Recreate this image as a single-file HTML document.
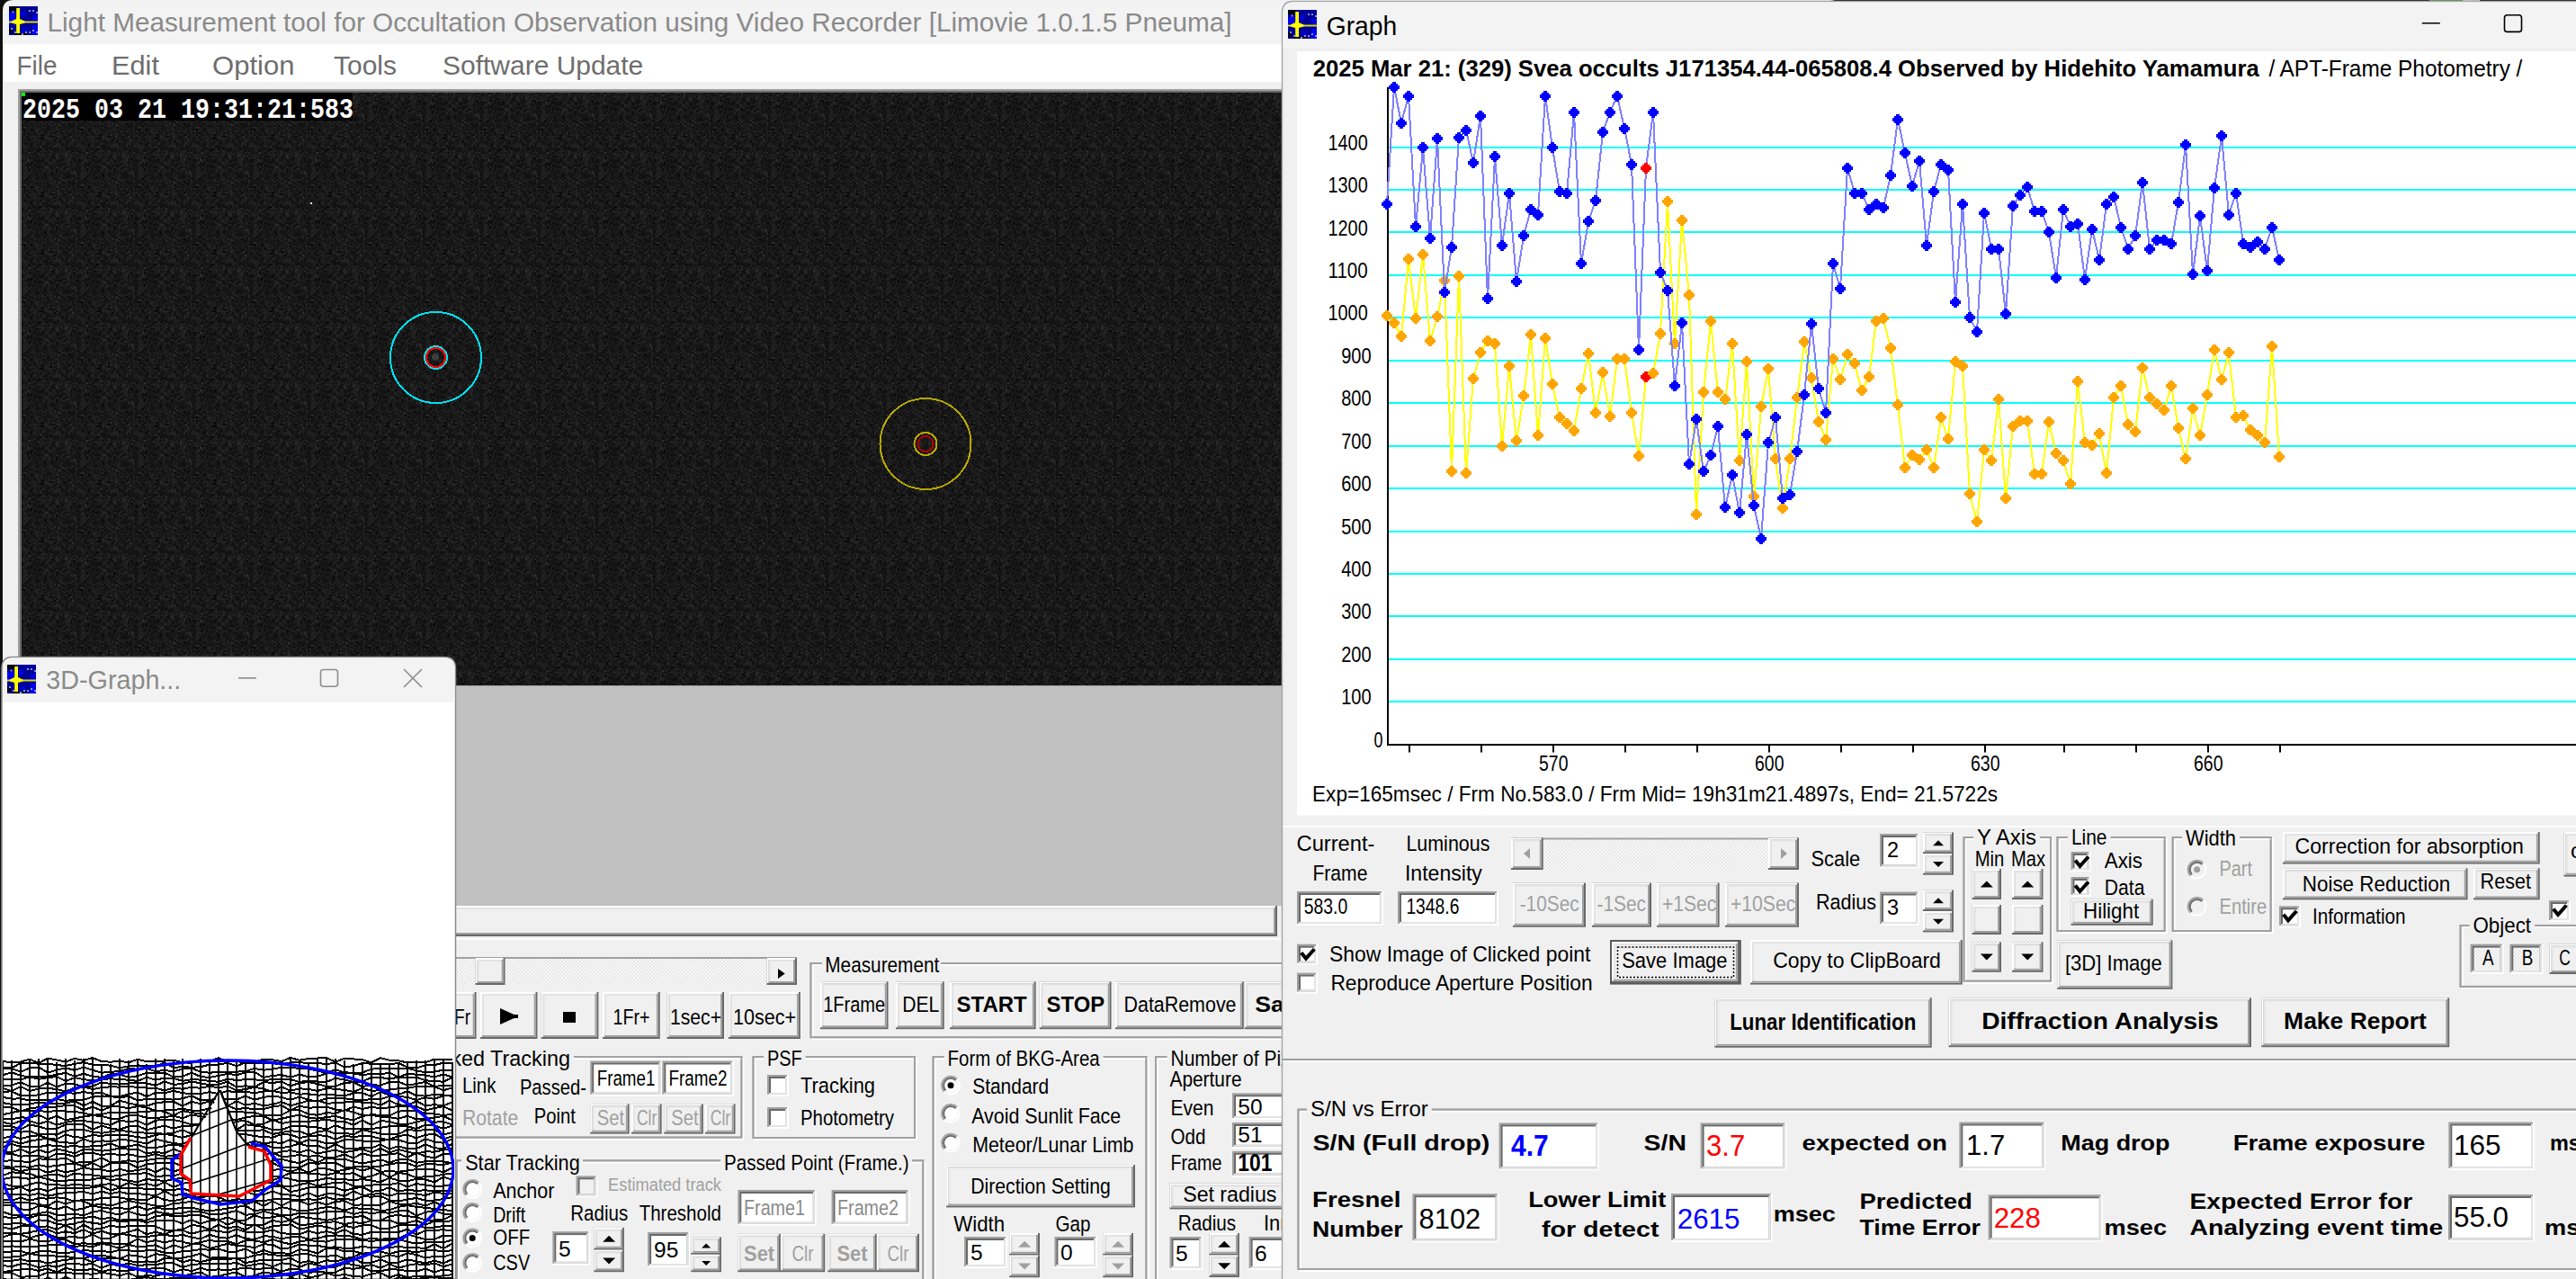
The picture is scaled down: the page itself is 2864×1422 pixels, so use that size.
<!DOCTYPE html>
<html><head><meta charset="utf-8"><title>Limovie</title>
<style>html,body{margin:0;padding:0;background:#101010;overflow:hidden}svg{display:block}</style>
</head><body>
<svg width="2864" height="1422" viewBox="0 0 2864 1422" font-family="Liberation Sans, sans-serif">
<defs>
<pattern id="dith" width="4" height="4" patternUnits="userSpaceOnUse"><rect width="4" height="4" fill="#f8f8f8"/><rect width="2" height="2" fill="#e8e8e8"/><rect x="2" y="2" width="2" height="2" fill="#e8e8e8"/></pattern>
<pattern id="vnoise" width="64" height="64" patternUnits="userSpaceOnUse" x="24" y="103"><rect x="0" y="0" width="2" height="2" fill="#101010"/><rect x="2" y="0" width="2" height="2" fill="#1b1b1b"/><rect x="4" y="0" width="2" height="2" fill="#1f1f1f"/><rect x="6" y="0" width="2" height="2" fill="#151515"/><rect x="8" y="0" width="2" height="2" fill="#0f0f0f"/><rect x="10" y="0" width="2" height="2" fill="#181818"/><rect x="12" y="0" width="2" height="2" fill="#1c1c1c"/><rect x="14" y="0" width="2" height="2" fill="#202020"/><rect x="16" y="0" width="2" height="2" fill="#101010"/><rect x="18" y="0" width="2" height="2" fill="#0f0f0f"/><rect x="20" y="0" width="2" height="2" fill="#1d1d1d"/><rect x="22" y="0" width="2" height="2" fill="#1c1c1c"/><rect x="24" y="0" width="2" height="2" fill="#232323"/><rect x="26" y="0" width="2" height="2" fill="#1f1f1f"/><rect x="28" y="0" width="2" height="2" fill="#181818"/><rect x="30" y="0" width="2" height="2" fill="#171717"/><rect x="32" y="0" width="2" height="2" fill="#2a2a2a"/><rect x="34" y="0" width="2" height="2" fill="#161616"/><rect x="36" y="0" width="2" height="2" fill="#131313"/><rect x="38" y="0" width="2" height="2" fill="#111111"/><rect x="40" y="0" width="2" height="2" fill="#191919"/><rect x="42" y="0" width="2" height="2" fill="#1a1a1a"/><rect x="44" y="0" width="2" height="2" fill="#161616"/><rect x="46" y="0" width="2" height="2" fill="#181818"/><rect x="48" y="0" width="2" height="2" fill="#1a1a1a"/><rect x="50" y="0" width="2" height="2" fill="#1d1d1d"/><rect x="52" y="0" width="2" height="2" fill="#202020"/><rect x="54" y="0" width="2" height="2" fill="#1a1a1a"/><rect x="56" y="0" width="2" height="2" fill="#0c0c0c"/><rect x="58" y="0" width="2" height="2" fill="#1d1d1d"/><rect x="60" y="0" width="2" height="2" fill="#0f0f0f"/><rect x="62" y="0" width="2" height="2" fill="#171717"/><rect x="0" y="2" width="2" height="2" fill="#0e0e0e"/><rect x="2" y="2" width="2" height="2" fill="#191919"/><rect x="4" y="2" width="2" height="2" fill="#131313"/><rect x="6" y="2" width="2" height="2" fill="#1a1a1a"/><rect x="8" y="2" width="2" height="2" fill="#303030"/><rect x="10" y="2" width="2" height="2" fill="#181818"/><rect x="12" y="2" width="2" height="2" fill="#1e1e1e"/><rect x="14" y="2" width="2" height="2" fill="#0f0f0f"/><rect x="16" y="2" width="2" height="2" fill="#161616"/><rect x="18" y="2" width="2" height="2" fill="#1d1d1d"/><rect x="20" y="2" width="2" height="2" fill="#181818"/><rect x="22" y="2" width="2" height="2" fill="#1b1b1b"/><rect x="24" y="2" width="2" height="2" fill="#191919"/><rect x="26" y="2" width="2" height="2" fill="#111111"/><rect x="28" y="2" width="2" height="2" fill="#1c1c1c"/><rect x="30" y="2" width="2" height="2" fill="#131313"/><rect x="32" y="2" width="2" height="2" fill="#262626"/><rect x="34" y="2" width="2" height="2" fill="#151515"/><rect x="36" y="2" width="2" height="2" fill="#1d1d1d"/><rect x="38" y="2" width="2" height="2" fill="#191919"/><rect x="40" y="2" width="2" height="2" fill="#1f1f1f"/><rect x="42" y="2" width="2" height="2" fill="#141414"/><rect x="44" y="2" width="2" height="2" fill="#1f1f1f"/><rect x="46" y="2" width="2" height="2" fill="#181818"/><rect x="48" y="2" width="2" height="2" fill="#212121"/><rect x="50" y="2" width="2" height="2" fill="#1d1d1d"/><rect x="52" y="2" width="2" height="2" fill="#191919"/><rect x="54" y="2" width="2" height="2" fill="#131313"/><rect x="56" y="2" width="2" height="2" fill="#1e1e1e"/><rect x="58" y="2" width="2" height="2" fill="#1c1c1c"/><rect x="60" y="2" width="2" height="2" fill="#242424"/><rect x="62" y="2" width="2" height="2" fill="#161616"/><rect x="0" y="4" width="2" height="2" fill="#1c1c1c"/><rect x="2" y="4" width="2" height="2" fill="#1c1c1c"/><rect x="4" y="4" width="2" height="2" fill="#1a1a1a"/><rect x="6" y="4" width="2" height="2" fill="#1a1a1a"/><rect x="8" y="4" width="2" height="2" fill="#1a1a1a"/><rect x="10" y="4" width="2" height="2" fill="#141414"/><rect x="12" y="4" width="2" height="2" fill="#111111"/><rect x="14" y="4" width="2" height="2" fill="#161616"/><rect x="16" y="4" width="2" height="2" fill="#1d1d1d"/><rect x="18" y="4" width="2" height="2" fill="#232323"/><rect x="20" y="4" width="2" height="2" fill="#1f1f1f"/><rect x="22" y="4" width="2" height="2" fill="#202020"/><rect x="24" y="4" width="2" height="2" fill="#1e1e1e"/><rect x="26" y="4" width="2" height="2" fill="#1d1d1d"/><rect x="28" y="4" width="2" height="2" fill="#1a1a1a"/><rect x="30" y="4" width="2" height="2" fill="#1e1e1e"/><rect x="32" y="4" width="2" height="2" fill="#252525"/><rect x="34" y="4" width="2" height="2" fill="#161616"/><rect x="36" y="4" width="2" height="2" fill="#141414"/><rect x="38" y="4" width="2" height="2" fill="#262626"/><rect x="40" y="4" width="2" height="2" fill="#1a1a1a"/><rect x="42" y="4" width="2" height="2" fill="#1f1f1f"/><rect x="44" y="4" width="2" height="2" fill="#1f1f1f"/><rect x="46" y="4" width="2" height="2" fill="#111111"/><rect x="48" y="4" width="2" height="2" fill="#2a2a2a"/><rect x="50" y="4" width="2" height="2" fill="#252525"/><rect x="52" y="4" width="2" height="2" fill="#1a1a1a"/><rect x="54" y="4" width="2" height="2" fill="#1e1e1e"/><rect x="56" y="4" width="2" height="2" fill="#191919"/><rect x="58" y="4" width="2" height="2" fill="#121212"/><rect x="60" y="4" width="2" height="2" fill="#181818"/><rect x="62" y="4" width="2" height="2" fill="#1b1b1b"/><rect x="0" y="6" width="2" height="2" fill="#202020"/><rect x="2" y="6" width="2" height="2" fill="#1d1d1d"/><rect x="4" y="6" width="2" height="2" fill="#191919"/><rect x="6" y="6" width="2" height="2" fill="#222222"/><rect x="8" y="6" width="2" height="2" fill="#131313"/><rect x="10" y="6" width="2" height="2" fill="#1e1e1e"/><rect x="12" y="6" width="2" height="2" fill="#202020"/><rect x="14" y="6" width="2" height="2" fill="#161616"/><rect x="16" y="6" width="2" height="2" fill="#0c0c0c"/><rect x="18" y="6" width="2" height="2" fill="#121212"/><rect x="20" y="6" width="2" height="2" fill="#1a1a1a"/><rect x="22" y="6" width="2" height="2" fill="#1c1c1c"/><rect x="24" y="6" width="2" height="2" fill="#232323"/><rect x="26" y="6" width="2" height="2" fill="#111111"/><rect x="28" y="6" width="2" height="2" fill="#191919"/><rect x="30" y="6" width="2" height="2" fill="#1d1d1d"/><rect x="32" y="6" width="2" height="2" fill="#171717"/><rect x="34" y="6" width="2" height="2" fill="#080808"/><rect x="36" y="6" width="2" height="2" fill="#1e1e1e"/><rect x="38" y="6" width="2" height="2" fill="#292929"/><rect x="40" y="6" width="2" height="2" fill="#202020"/><rect x="42" y="6" width="2" height="2" fill="#121212"/><rect x="44" y="6" width="2" height="2" fill="#161616"/><rect x="46" y="6" width="2" height="2" fill="#1a1a1a"/><rect x="48" y="6" width="2" height="2" fill="#2a2a2a"/><rect x="50" y="6" width="2" height="2" fill="#1d1d1d"/><rect x="52" y="6" width="2" height="2" fill="#191919"/><rect x="54" y="6" width="2" height="2" fill="#232323"/><rect x="56" y="6" width="2" height="2" fill="#181818"/><rect x="58" y="6" width="2" height="2" fill="#262626"/><rect x="60" y="6" width="2" height="2" fill="#141414"/><rect x="62" y="6" width="2" height="2" fill="#151515"/><rect x="0" y="8" width="2" height="2" fill="#1e1e1e"/><rect x="2" y="8" width="2" height="2" fill="#222222"/><rect x="4" y="8" width="2" height="2" fill="#1d1d1d"/><rect x="6" y="8" width="2" height="2" fill="#1b1b1b"/><rect x="8" y="8" width="2" height="2" fill="#0c0c0c"/><rect x="10" y="8" width="2" height="2" fill="#141414"/><rect x="12" y="8" width="2" height="2" fill="#141414"/><rect x="14" y="8" width="2" height="2" fill="#151515"/><rect x="16" y="8" width="2" height="2" fill="#1d1d1d"/><rect x="18" y="8" width="2" height="2" fill="#161616"/><rect x="20" y="8" width="2" height="2" fill="#1e1e1e"/><rect x="22" y="8" width="2" height="2" fill="#191919"/><rect x="24" y="8" width="2" height="2" fill="#161616"/><rect x="26" y="8" width="2" height="2" fill="#191919"/><rect x="28" y="8" width="2" height="2" fill="#1c1c1c"/><rect x="30" y="8" width="2" height="2" fill="#1f1f1f"/><rect x="32" y="8" width="2" height="2" fill="#151515"/><rect x="34" y="8" width="2" height="2" fill="#171717"/><rect x="36" y="8" width="2" height="2" fill="#0f0f0f"/><rect x="38" y="8" width="2" height="2" fill="#242424"/><rect x="40" y="8" width="2" height="2" fill="#232323"/><rect x="42" y="8" width="2" height="2" fill="#171717"/><rect x="44" y="8" width="2" height="2" fill="#151515"/><rect x="46" y="8" width="2" height="2" fill="#101010"/><rect x="48" y="8" width="2" height="2" fill="#1a1a1a"/><rect x="50" y="8" width="2" height="2" fill="#1a1a1a"/><rect x="52" y="8" width="2" height="2" fill="#282828"/><rect x="54" y="8" width="2" height="2" fill="#1a1a1a"/><rect x="56" y="8" width="2" height="2" fill="#131313"/><rect x="58" y="8" width="2" height="2" fill="#070707"/><rect x="60" y="8" width="2" height="2" fill="#222222"/><rect x="62" y="8" width="2" height="2" fill="#1a1a1a"/><rect x="0" y="10" width="2" height="2" fill="#0d0d0d"/><rect x="2" y="10" width="2" height="2" fill="#1a1a1a"/><rect x="4" y="10" width="2" height="2" fill="#0d0d0d"/><rect x="6" y="10" width="2" height="2" fill="#313131"/><rect x="8" y="10" width="2" height="2" fill="#202020"/><rect x="10" y="10" width="2" height="2" fill="#1d1d1d"/><rect x="12" y="10" width="2" height="2" fill="#171717"/><rect x="14" y="10" width="2" height="2" fill="#0a0a0a"/><rect x="16" y="10" width="2" height="2" fill="#181818"/><rect x="18" y="10" width="2" height="2" fill="#0e0e0e"/><rect x="20" y="10" width="2" height="2" fill="#1d1d1d"/><rect x="22" y="10" width="2" height="2" fill="#0a0a0a"/><rect x="24" y="10" width="2" height="2" fill="#121212"/><rect x="26" y="10" width="2" height="2" fill="#212121"/><rect x="28" y="10" width="2" height="2" fill="#242424"/><rect x="30" y="10" width="2" height="2" fill="#101010"/><rect x="32" y="10" width="2" height="2" fill="#0e0e0e"/><rect x="34" y="10" width="2" height="2" fill="#1f1f1f"/><rect x="36" y="10" width="2" height="2" fill="#1e1e1e"/><rect x="38" y="10" width="2" height="2" fill="#121212"/><rect x="40" y="10" width="2" height="2" fill="#141414"/><rect x="42" y="10" width="2" height="2" fill="#141414"/><rect x="44" y="10" width="2" height="2" fill="#101010"/><rect x="46" y="10" width="2" height="2" fill="#141414"/><rect x="48" y="10" width="2" height="2" fill="#212121"/><rect x="50" y="10" width="2" height="2" fill="#1d1d1d"/><rect x="52" y="10" width="2" height="2" fill="#272727"/><rect x="54" y="10" width="2" height="2" fill="#181818"/><rect x="56" y="10" width="2" height="2" fill="#181818"/><rect x="58" y="10" width="2" height="2" fill="#121212"/><rect x="60" y="10" width="2" height="2" fill="#181818"/><rect x="62" y="10" width="2" height="2" fill="#0f0f0f"/><rect x="0" y="12" width="2" height="2" fill="#0c0c0c"/><rect x="2" y="12" width="2" height="2" fill="#1d1d1d"/><rect x="4" y="12" width="2" height="2" fill="#232323"/><rect x="6" y="12" width="2" height="2" fill="#1e1e1e"/><rect x="8" y="12" width="2" height="2" fill="#222222"/><rect x="10" y="12" width="2" height="2" fill="#1a1a1a"/><rect x="12" y="12" width="2" height="2" fill="#131313"/><rect x="14" y="12" width="2" height="2" fill="#191919"/><rect x="16" y="12" width="2" height="2" fill="#161616"/><rect x="18" y="12" width="2" height="2" fill="#111111"/><rect x="20" y="12" width="2" height="2" fill="#0d0d0d"/><rect x="22" y="12" width="2" height="2" fill="#0e0e0e"/><rect x="24" y="12" width="2" height="2" fill="#181818"/><rect x="26" y="12" width="2" height="2" fill="#1a1a1a"/><rect x="28" y="12" width="2" height="2" fill="#151515"/><rect x="30" y="12" width="2" height="2" fill="#232323"/><rect x="32" y="12" width="2" height="2" fill="#1a1a1a"/><rect x="34" y="12" width="2" height="2" fill="#1d1d1d"/><rect x="36" y="12" width="2" height="2" fill="#212121"/><rect x="38" y="12" width="2" height="2" fill="#131313"/><rect x="40" y="12" width="2" height="2" fill="#0b0b0b"/><rect x="42" y="12" width="2" height="2" fill="#1e1e1e"/><rect x="44" y="12" width="2" height="2" fill="#141414"/><rect x="46" y="12" width="2" height="2" fill="#222222"/><rect x="48" y="12" width="2" height="2" fill="#1b1b1b"/><rect x="50" y="12" width="2" height="2" fill="#202020"/><rect x="52" y="12" width="2" height="2" fill="#1e1e1e"/><rect x="54" y="12" width="2" height="2" fill="#0a0a0a"/><rect x="56" y="12" width="2" height="2" fill="#1e1e1e"/><rect x="58" y="12" width="2" height="2" fill="#141414"/><rect x="60" y="12" width="2" height="2" fill="#131313"/><rect x="62" y="12" width="2" height="2" fill="#151515"/><rect x="0" y="14" width="2" height="2" fill="#1e1e1e"/><rect x="2" y="14" width="2" height="2" fill="#1f1f1f"/><rect x="4" y="14" width="2" height="2" fill="#202020"/><rect x="6" y="14" width="2" height="2" fill="#0d0d0d"/><rect x="8" y="14" width="2" height="2" fill="#141414"/><rect x="10" y="14" width="2" height="2" fill="#080808"/><rect x="12" y="14" width="2" height="2" fill="#181818"/><rect x="14" y="14" width="2" height="2" fill="#1d1d1d"/><rect x="16" y="14" width="2" height="2" fill="#131313"/><rect x="18" y="14" width="2" height="2" fill="#1a1a1a"/><rect x="20" y="14" width="2" height="2" fill="#1a1a1a"/><rect x="22" y="14" width="2" height="2" fill="#202020"/><rect x="24" y="14" width="2" height="2" fill="#131313"/><rect x="26" y="14" width="2" height="2" fill="#131313"/><rect x="28" y="14" width="2" height="2" fill="#131313"/><rect x="30" y="14" width="2" height="2" fill="#252525"/><rect x="32" y="14" width="2" height="2" fill="#202020"/><rect x="34" y="14" width="2" height="2" fill="#181818"/><rect x="36" y="14" width="2" height="2" fill="#1a1a1a"/><rect x="38" y="14" width="2" height="2" fill="#191919"/><rect x="40" y="14" width="2" height="2" fill="#1a1a1a"/><rect x="42" y="14" width="2" height="2" fill="#171717"/><rect x="44" y="14" width="2" height="2" fill="#161616"/><rect x="46" y="14" width="2" height="2" fill="#101010"/><rect x="48" y="14" width="2" height="2" fill="#141414"/><rect x="50" y="14" width="2" height="2" fill="#242424"/><rect x="52" y="14" width="2" height="2" fill="#1c1c1c"/><rect x="54" y="14" width="2" height="2" fill="#191919"/><rect x="56" y="14" width="2" height="2" fill="#171717"/><rect x="58" y="14" width="2" height="2" fill="#191919"/><rect x="60" y="14" width="2" height="2" fill="#1b1b1b"/><rect x="62" y="14" width="2" height="2" fill="#141414"/><rect x="0" y="16" width="2" height="2" fill="#1a1a1a"/><rect x="2" y="16" width="2" height="2" fill="#1a1a1a"/><rect x="4" y="16" width="2" height="2" fill="#131313"/><rect x="6" y="16" width="2" height="2" fill="#131313"/><rect x="8" y="16" width="2" height="2" fill="#121212"/><rect x="10" y="16" width="2" height="2" fill="#111111"/><rect x="12" y="16" width="2" height="2" fill="#1f1f1f"/><rect x="14" y="16" width="2" height="2" fill="#080808"/><rect x="16" y="16" width="2" height="2" fill="#171717"/><rect x="18" y="16" width="2" height="2" fill="#141414"/><rect x="20" y="16" width="2" height="2" fill="#141414"/><rect x="22" y="16" width="2" height="2" fill="#191919"/><rect x="24" y="16" width="2" height="2" fill="#202020"/><rect x="26" y="16" width="2" height="2" fill="#191919"/><rect x="28" y="16" width="2" height="2" fill="#181818"/><rect x="30" y="16" width="2" height="2" fill="#141414"/><rect x="32" y="16" width="2" height="2" fill="#181818"/><rect x="34" y="16" width="2" height="2" fill="#1f1f1f"/><rect x="36" y="16" width="2" height="2" fill="#161616"/><rect x="38" y="16" width="2" height="2" fill="#101010"/><rect x="40" y="16" width="2" height="2" fill="#101010"/><rect x="42" y="16" width="2" height="2" fill="#111111"/><rect x="44" y="16" width="2" height="2" fill="#0f0f0f"/><rect x="46" y="16" width="2" height="2" fill="#202020"/><rect x="48" y="16" width="2" height="2" fill="#1b1b1b"/><rect x="50" y="16" width="2" height="2" fill="#171717"/><rect x="52" y="16" width="2" height="2" fill="#232323"/><rect x="54" y="16" width="2" height="2" fill="#141414"/><rect x="56" y="16" width="2" height="2" fill="#1e1e1e"/><rect x="58" y="16" width="2" height="2" fill="#1e1e1e"/><rect x="60" y="16" width="2" height="2" fill="#0e0e0e"/><rect x="62" y="16" width="2" height="2" fill="#0e0e0e"/><rect x="0" y="18" width="2" height="2" fill="#121212"/><rect x="2" y="18" width="2" height="2" fill="#1f1f1f"/><rect x="4" y="18" width="2" height="2" fill="#222222"/><rect x="6" y="18" width="2" height="2" fill="#101010"/><rect x="8" y="18" width="2" height="2" fill="#202020"/><rect x="10" y="18" width="2" height="2" fill="#161616"/><rect x="12" y="18" width="2" height="2" fill="#161616"/><rect x="14" y="18" width="2" height="2" fill="#151515"/><rect x="16" y="18" width="2" height="2" fill="#161616"/><rect x="18" y="18" width="2" height="2" fill="#0c0c0c"/><rect x="20" y="18" width="2" height="2" fill="#111111"/><rect x="22" y="18" width="2" height="2" fill="#101010"/><rect x="24" y="18" width="2" height="2" fill="#1c1c1c"/><rect x="26" y="18" width="2" height="2" fill="#272727"/><rect x="28" y="18" width="2" height="2" fill="#2c2c2c"/><rect x="30" y="18" width="2" height="2" fill="#161616"/><rect x="32" y="18" width="2" height="2" fill="#0c0c0c"/><rect x="34" y="18" width="2" height="2" fill="#161616"/><rect x="36" y="18" width="2" height="2" fill="#121212"/><rect x="38" y="18" width="2" height="2" fill="#262626"/><rect x="40" y="18" width="2" height="2" fill="#1c1c1c"/><rect x="42" y="18" width="2" height="2" fill="#131313"/><rect x="44" y="18" width="2" height="2" fill="#1f1f1f"/><rect x="46" y="18" width="2" height="2" fill="#1c1c1c"/><rect x="48" y="18" width="2" height="2" fill="#0d0d0d"/><rect x="50" y="18" width="2" height="2" fill="#151515"/><rect x="52" y="18" width="2" height="2" fill="#171717"/><rect x="54" y="18" width="2" height="2" fill="#191919"/><rect x="56" y="18" width="2" height="2" fill="#191919"/><rect x="58" y="18" width="2" height="2" fill="#161616"/><rect x="60" y="18" width="2" height="2" fill="#1a1a1a"/><rect x="62" y="18" width="2" height="2" fill="#141414"/><rect x="0" y="20" width="2" height="2" fill="#121212"/><rect x="2" y="20" width="2" height="2" fill="#232323"/><rect x="4" y="20" width="2" height="2" fill="#1b1b1b"/><rect x="6" y="20" width="2" height="2" fill="#1c1c1c"/><rect x="8" y="20" width="2" height="2" fill="#0d0d0d"/><rect x="10" y="20" width="2" height="2" fill="#171717"/><rect x="12" y="20" width="2" height="2" fill="#1e1e1e"/><rect x="14" y="20" width="2" height="2" fill="#0f0f0f"/><rect x="16" y="20" width="2" height="2" fill="#202020"/><rect x="18" y="20" width="2" height="2" fill="#161616"/><rect x="20" y="20" width="2" height="2" fill="#1b1b1b"/><rect x="22" y="20" width="2" height="2" fill="#181818"/><rect x="24" y="20" width="2" height="2" fill="#1a1a1a"/><rect x="26" y="20" width="2" height="2" fill="#212121"/><rect x="28" y="20" width="2" height="2" fill="#161616"/><rect x="30" y="20" width="2" height="2" fill="#232323"/><rect x="32" y="20" width="2" height="2" fill="#131313"/><rect x="34" y="20" width="2" height="2" fill="#121212"/><rect x="36" y="20" width="2" height="2" fill="#1d1d1d"/><rect x="38" y="20" width="2" height="2" fill="#111111"/><rect x="40" y="20" width="2" height="2" fill="#161616"/><rect x="42" y="20" width="2" height="2" fill="#1f1f1f"/><rect x="44" y="20" width="2" height="2" fill="#212121"/><rect x="46" y="20" width="2" height="2" fill="#0c0c0c"/><rect x="48" y="20" width="2" height="2" fill="#1c1c1c"/><rect x="50" y="20" width="2" height="2" fill="#262626"/><rect x="52" y="20" width="2" height="2" fill="#212121"/><rect x="54" y="20" width="2" height="2" fill="#171717"/><rect x="56" y="20" width="2" height="2" fill="#141414"/><rect x="58" y="20" width="2" height="2" fill="#161616"/><rect x="60" y="20" width="2" height="2" fill="#101010"/><rect x="62" y="20" width="2" height="2" fill="#171717"/><rect x="0" y="22" width="2" height="2" fill="#171717"/><rect x="2" y="22" width="2" height="2" fill="#171717"/><rect x="4" y="22" width="2" height="2" fill="#212121"/><rect x="6" y="22" width="2" height="2" fill="#171717"/><rect x="8" y="22" width="2" height="2" fill="#0e0e0e"/><rect x="10" y="22" width="2" height="2" fill="#202020"/><rect x="12" y="22" width="2" height="2" fill="#111111"/><rect x="14" y="22" width="2" height="2" fill="#151515"/><rect x="16" y="22" width="2" height="2" fill="#181818"/><rect x="18" y="22" width="2" height="2" fill="#161616"/><rect x="20" y="22" width="2" height="2" fill="#111111"/><rect x="22" y="22" width="2" height="2" fill="#171717"/><rect x="24" y="22" width="2" height="2" fill="#282828"/><rect x="26" y="22" width="2" height="2" fill="#141414"/><rect x="28" y="22" width="2" height="2" fill="#181818"/><rect x="30" y="22" width="2" height="2" fill="#202020"/><rect x="32" y="22" width="2" height="2" fill="#1e1e1e"/><rect x="34" y="22" width="2" height="2" fill="#1e1e1e"/><rect x="36" y="22" width="2" height="2" fill="#1f1f1f"/><rect x="38" y="22" width="2" height="2" fill="#0b0b0b"/><rect x="40" y="22" width="2" height="2" fill="#121212"/><rect x="42" y="22" width="2" height="2" fill="#191919"/><rect x="44" y="22" width="2" height="2" fill="#1c1c1c"/><rect x="46" y="22" width="2" height="2" fill="#222222"/><rect x="48" y="22" width="2" height="2" fill="#1c1c1c"/><rect x="50" y="22" width="2" height="2" fill="#171717"/><rect x="52" y="22" width="2" height="2" fill="#191919"/><rect x="54" y="22" width="2" height="2" fill="#171717"/><rect x="56" y="22" width="2" height="2" fill="#1a1a1a"/><rect x="58" y="22" width="2" height="2" fill="#1d1d1d"/><rect x="60" y="22" width="2" height="2" fill="#161616"/><rect x="62" y="22" width="2" height="2" fill="#131313"/><rect x="0" y="24" width="2" height="2" fill="#131313"/><rect x="2" y="24" width="2" height="2" fill="#202020"/><rect x="4" y="24" width="2" height="2" fill="#212121"/><rect x="6" y="24" width="2" height="2" fill="#1f1f1f"/><rect x="8" y="24" width="2" height="2" fill="#1e1e1e"/><rect x="10" y="24" width="2" height="2" fill="#1e1e1e"/><rect x="12" y="24" width="2" height="2" fill="#181818"/><rect x="14" y="24" width="2" height="2" fill="#1d1d1d"/><rect x="16" y="24" width="2" height="2" fill="#111111"/><rect x="18" y="24" width="2" height="2" fill="#171717"/><rect x="20" y="24" width="2" height="2" fill="#131313"/><rect x="22" y="24" width="2" height="2" fill="#1e1e1e"/><rect x="24" y="24" width="2" height="2" fill="#141414"/><rect x="26" y="24" width="2" height="2" fill="#181818"/><rect x="28" y="24" width="2" height="2" fill="#1b1b1b"/><rect x="30" y="24" width="2" height="2" fill="#222222"/><rect x="32" y="24" width="2" height="2" fill="#131313"/><rect x="34" y="24" width="2" height="2" fill="#121212"/><rect x="36" y="24" width="2" height="2" fill="#1e1e1e"/><rect x="38" y="24" width="2" height="2" fill="#111111"/><rect x="40" y="24" width="2" height="2" fill="#1c1c1c"/><rect x="42" y="24" width="2" height="2" fill="#151515"/><rect x="44" y="24" width="2" height="2" fill="#181818"/><rect x="46" y="24" width="2" height="2" fill="#0c0c0c"/><rect x="48" y="24" width="2" height="2" fill="#1d1d1d"/><rect x="50" y="24" width="2" height="2" fill="#151515"/><rect x="52" y="24" width="2" height="2" fill="#121212"/><rect x="54" y="24" width="2" height="2" fill="#272727"/><rect x="56" y="24" width="2" height="2" fill="#1d1d1d"/><rect x="58" y="24" width="2" height="2" fill="#313131"/><rect x="60" y="24" width="2" height="2" fill="#1b1b1b"/><rect x="62" y="24" width="2" height="2" fill="#161616"/><rect x="0" y="26" width="2" height="2" fill="#191919"/><rect x="2" y="26" width="2" height="2" fill="#242424"/><rect x="4" y="26" width="2" height="2" fill="#181818"/><rect x="6" y="26" width="2" height="2" fill="#1c1c1c"/><rect x="8" y="26" width="2" height="2" fill="#1c1c1c"/><rect x="10" y="26" width="2" height="2" fill="#121212"/><rect x="12" y="26" width="2" height="2" fill="#191919"/><rect x="14" y="26" width="2" height="2" fill="#151515"/><rect x="16" y="26" width="2" height="2" fill="#101010"/><rect x="18" y="26" width="2" height="2" fill="#1f1f1f"/><rect x="20" y="26" width="2" height="2" fill="#1d1d1d"/><rect x="22" y="26" width="2" height="2" fill="#191919"/><rect x="24" y="26" width="2" height="2" fill="#121212"/><rect x="26" y="26" width="2" height="2" fill="#0a0a0a"/><rect x="28" y="26" width="2" height="2" fill="#1c1c1c"/><rect x="30" y="26" width="2" height="2" fill="#181818"/><rect x="32" y="26" width="2" height="2" fill="#0d0d0d"/><rect x="34" y="26" width="2" height="2" fill="#181818"/><rect x="36" y="26" width="2" height="2" fill="#0e0e0e"/><rect x="38" y="26" width="2" height="2" fill="#181818"/><rect x="40" y="26" width="2" height="2" fill="#1a1a1a"/><rect x="42" y="26" width="2" height="2" fill="#1b1b1b"/><rect x="44" y="26" width="2" height="2" fill="#1a1a1a"/><rect x="46" y="26" width="2" height="2" fill="#1a1a1a"/><rect x="48" y="26" width="2" height="2" fill="#111111"/><rect x="50" y="26" width="2" height="2" fill="#161616"/><rect x="52" y="26" width="2" height="2" fill="#151515"/><rect x="54" y="26" width="2" height="2" fill="#171717"/><rect x="56" y="26" width="2" height="2" fill="#1a1a1a"/><rect x="58" y="26" width="2" height="2" fill="#1d1d1d"/><rect x="60" y="26" width="2" height="2" fill="#242424"/><rect x="62" y="26" width="2" height="2" fill="#070707"/><rect x="0" y="28" width="2" height="2" fill="#1b1b1b"/><rect x="2" y="28" width="2" height="2" fill="#171717"/><rect x="4" y="28" width="2" height="2" fill="#282828"/><rect x="6" y="28" width="2" height="2" fill="#1f1f1f"/><rect x="8" y="28" width="2" height="2" fill="#0d0d0d"/><rect x="10" y="28" width="2" height="2" fill="#1b1b1b"/><rect x="12" y="28" width="2" height="2" fill="#151515"/><rect x="14" y="28" width="2" height="2" fill="#1f1f1f"/><rect x="16" y="28" width="2" height="2" fill="#111111"/><rect x="18" y="28" width="2" height="2" fill="#181818"/><rect x="20" y="28" width="2" height="2" fill="#181818"/><rect x="22" y="28" width="2" height="2" fill="#181818"/><rect x="24" y="28" width="2" height="2" fill="#141414"/><rect x="26" y="28" width="2" height="2" fill="#0c0c0c"/><rect x="28" y="28" width="2" height="2" fill="#1c1c1c"/><rect x="30" y="28" width="2" height="2" fill="#1f1f1f"/><rect x="32" y="28" width="2" height="2" fill="#181818"/><rect x="34" y="28" width="2" height="2" fill="#111111"/><rect x="36" y="28" width="2" height="2" fill="#1a1a1a"/><rect x="38" y="28" width="2" height="2" fill="#1c1c1c"/><rect x="40" y="28" width="2" height="2" fill="#171717"/><rect x="42" y="28" width="2" height="2" fill="#181818"/><rect x="44" y="28" width="2" height="2" fill="#222222"/><rect x="46" y="28" width="2" height="2" fill="#111111"/><rect x="48" y="28" width="2" height="2" fill="#151515"/><rect x="50" y="28" width="2" height="2" fill="#0b0b0b"/><rect x="52" y="28" width="2" height="2" fill="#141414"/><rect x="54" y="28" width="2" height="2" fill="#131313"/><rect x="56" y="28" width="2" height="2" fill="#121212"/><rect x="58" y="28" width="2" height="2" fill="#141414"/><rect x="60" y="28" width="2" height="2" fill="#252525"/><rect x="62" y="28" width="2" height="2" fill="#171717"/><rect x="0" y="30" width="2" height="2" fill="#181818"/><rect x="2" y="30" width="2" height="2" fill="#282828"/><rect x="4" y="30" width="2" height="2" fill="#181818"/><rect x="6" y="30" width="2" height="2" fill="#0c0c0c"/><rect x="8" y="30" width="2" height="2" fill="#1b1b1b"/><rect x="10" y="30" width="2" height="2" fill="#121212"/><rect x="12" y="30" width="2" height="2" fill="#242424"/><rect x="14" y="30" width="2" height="2" fill="#101010"/><rect x="16" y="30" width="2" height="2" fill="#141414"/><rect x="18" y="30" width="2" height="2" fill="#0d0d0d"/><rect x="20" y="30" width="2" height="2" fill="#191919"/><rect x="22" y="30" width="2" height="2" fill="#111111"/><rect x="24" y="30" width="2" height="2" fill="#181818"/><rect x="26" y="30" width="2" height="2" fill="#161616"/><rect x="28" y="30" width="2" height="2" fill="#141414"/><rect x="30" y="30" width="2" height="2" fill="#1f1f1f"/><rect x="32" y="30" width="2" height="2" fill="#1f1f1f"/><rect x="34" y="30" width="2" height="2" fill="#191919"/><rect x="36" y="30" width="2" height="2" fill="#121212"/><rect x="38" y="30" width="2" height="2" fill="#111111"/><rect x="40" y="30" width="2" height="2" fill="#1a1a1a"/><rect x="42" y="30" width="2" height="2" fill="#292929"/><rect x="44" y="30" width="2" height="2" fill="#151515"/><rect x="46" y="30" width="2" height="2" fill="#131313"/><rect x="48" y="30" width="2" height="2" fill="#141414"/><rect x="50" y="30" width="2" height="2" fill="#111111"/><rect x="52" y="30" width="2" height="2" fill="#121212"/><rect x="54" y="30" width="2" height="2" fill="#171717"/><rect x="56" y="30" width="2" height="2" fill="#232323"/><rect x="58" y="30" width="2" height="2" fill="#181818"/><rect x="60" y="30" width="2" height="2" fill="#151515"/><rect x="62" y="30" width="2" height="2" fill="#0d0d0d"/><rect x="0" y="32" width="2" height="2" fill="#1a1a1a"/><rect x="2" y="32" width="2" height="2" fill="#181818"/><rect x="4" y="32" width="2" height="2" fill="#101010"/><rect x="6" y="32" width="2" height="2" fill="#111111"/><rect x="8" y="32" width="2" height="2" fill="#181818"/><rect x="10" y="32" width="2" height="2" fill="#202020"/><rect x="12" y="32" width="2" height="2" fill="#1d1d1d"/><rect x="14" y="32" width="2" height="2" fill="#1a1a1a"/><rect x="16" y="32" width="2" height="2" fill="#161616"/><rect x="18" y="32" width="2" height="2" fill="#1b1b1b"/><rect x="20" y="32" width="2" height="2" fill="#181818"/><rect x="22" y="32" width="2" height="2" fill="#282828"/><rect x="24" y="32" width="2" height="2" fill="#111111"/><rect x="26" y="32" width="2" height="2" fill="#161616"/><rect x="28" y="32" width="2" height="2" fill="#212121"/><rect x="30" y="32" width="2" height="2" fill="#171717"/><rect x="32" y="32" width="2" height="2" fill="#222222"/><rect x="34" y="32" width="2" height="2" fill="#181818"/><rect x="36" y="32" width="2" height="2" fill="#1a1a1a"/><rect x="38" y="32" width="2" height="2" fill="#161616"/><rect x="40" y="32" width="2" height="2" fill="#0f0f0f"/><rect x="42" y="32" width="2" height="2" fill="#121212"/><rect x="44" y="32" width="2" height="2" fill="#282828"/><rect x="46" y="32" width="2" height="2" fill="#1d1d1d"/><rect x="48" y="32" width="2" height="2" fill="#1d1d1d"/><rect x="50" y="32" width="2" height="2" fill="#1f1f1f"/><rect x="52" y="32" width="2" height="2" fill="#1c1c1c"/><rect x="54" y="32" width="2" height="2" fill="#202020"/><rect x="56" y="32" width="2" height="2" fill="#171717"/><rect x="58" y="32" width="2" height="2" fill="#171717"/><rect x="60" y="32" width="2" height="2" fill="#1f1f1f"/><rect x="62" y="32" width="2" height="2" fill="#161616"/><rect x="0" y="34" width="2" height="2" fill="#0f0f0f"/><rect x="2" y="34" width="2" height="2" fill="#171717"/><rect x="4" y="34" width="2" height="2" fill="#151515"/><rect x="6" y="34" width="2" height="2" fill="#1d1d1d"/><rect x="8" y="34" width="2" height="2" fill="#131313"/><rect x="10" y="34" width="2" height="2" fill="#111111"/><rect x="12" y="34" width="2" height="2" fill="#161616"/><rect x="14" y="34" width="2" height="2" fill="#232323"/><rect x="16" y="34" width="2" height="2" fill="#181818"/><rect x="18" y="34" width="2" height="2" fill="#1a1a1a"/><rect x="20" y="34" width="2" height="2" fill="#191919"/><rect x="22" y="34" width="2" height="2" fill="#1b1b1b"/><rect x="24" y="34" width="2" height="2" fill="#1f1f1f"/><rect x="26" y="34" width="2" height="2" fill="#222222"/><rect x="28" y="34" width="2" height="2" fill="#0d0d0d"/><rect x="30" y="34" width="2" height="2" fill="#222222"/><rect x="32" y="34" width="2" height="2" fill="#181818"/><rect x="34" y="34" width="2" height="2" fill="#161616"/><rect x="36" y="34" width="2" height="2" fill="#292929"/><rect x="38" y="34" width="2" height="2" fill="#171717"/><rect x="40" y="34" width="2" height="2" fill="#262626"/><rect x="42" y="34" width="2" height="2" fill="#1f1f1f"/><rect x="44" y="34" width="2" height="2" fill="#111111"/><rect x="46" y="34" width="2" height="2" fill="#1c1c1c"/><rect x="48" y="34" width="2" height="2" fill="#1e1e1e"/><rect x="50" y="34" width="2" height="2" fill="#181818"/><rect x="52" y="34" width="2" height="2" fill="#080808"/><rect x="54" y="34" width="2" height="2" fill="#161616"/><rect x="56" y="34" width="2" height="2" fill="#171717"/><rect x="58" y="34" width="2" height="2" fill="#111111"/><rect x="60" y="34" width="2" height="2" fill="#252525"/><rect x="62" y="34" width="2" height="2" fill="#171717"/><rect x="0" y="36" width="2" height="2" fill="#161616"/><rect x="2" y="36" width="2" height="2" fill="#161616"/><rect x="4" y="36" width="2" height="2" fill="#131313"/><rect x="6" y="36" width="2" height="2" fill="#131313"/><rect x="8" y="36" width="2" height="2" fill="#191919"/><rect x="10" y="36" width="2" height="2" fill="#1b1b1b"/><rect x="12" y="36" width="2" height="2" fill="#151515"/><rect x="14" y="36" width="2" height="2" fill="#181818"/><rect x="16" y="36" width="2" height="2" fill="#0f0f0f"/><rect x="18" y="36" width="2" height="2" fill="#1c1c1c"/><rect x="20" y="36" width="2" height="2" fill="#131313"/><rect x="22" y="36" width="2" height="2" fill="#1a1a1a"/><rect x="24" y="36" width="2" height="2" fill="#121212"/><rect x="26" y="36" width="2" height="2" fill="#151515"/><rect x="28" y="36" width="2" height="2" fill="#1a1a1a"/><rect x="30" y="36" width="2" height="2" fill="#101010"/><rect x="32" y="36" width="2" height="2" fill="#2a2a2a"/><rect x="34" y="36" width="2" height="2" fill="#181818"/><rect x="36" y="36" width="2" height="2" fill="#181818"/><rect x="38" y="36" width="2" height="2" fill="#131313"/><rect x="40" y="36" width="2" height="2" fill="#242424"/><rect x="42" y="36" width="2" height="2" fill="#222222"/><rect x="44" y="36" width="2" height="2" fill="#1b1b1b"/><rect x="46" y="36" width="2" height="2" fill="#0f0f0f"/><rect x="48" y="36" width="2" height="2" fill="#151515"/><rect x="50" y="36" width="2" height="2" fill="#1d1d1d"/><rect x="52" y="36" width="2" height="2" fill="#151515"/><rect x="54" y="36" width="2" height="2" fill="#101010"/><rect x="56" y="36" width="2" height="2" fill="#101010"/><rect x="58" y="36" width="2" height="2" fill="#131313"/><rect x="60" y="36" width="2" height="2" fill="#191919"/><rect x="62" y="36" width="2" height="2" fill="#141414"/><rect x="0" y="38" width="2" height="2" fill="#191919"/><rect x="2" y="38" width="2" height="2" fill="#2c2c2c"/><rect x="4" y="38" width="2" height="2" fill="#252525"/><rect x="6" y="38" width="2" height="2" fill="#111111"/><rect x="8" y="38" width="2" height="2" fill="#1b1b1b"/><rect x="10" y="38" width="2" height="2" fill="#191919"/><rect x="12" y="38" width="2" height="2" fill="#181818"/><rect x="14" y="38" width="2" height="2" fill="#202020"/><rect x="16" y="38" width="2" height="2" fill="#161616"/><rect x="18" y="38" width="2" height="2" fill="#161616"/><rect x="20" y="38" width="2" height="2" fill="#161616"/><rect x="22" y="38" width="2" height="2" fill="#181818"/><rect x="24" y="38" width="2" height="2" fill="#222222"/><rect x="26" y="38" width="2" height="2" fill="#1e1e1e"/><rect x="28" y="38" width="2" height="2" fill="#0f0f0f"/><rect x="30" y="38" width="2" height="2" fill="#151515"/><rect x="32" y="38" width="2" height="2" fill="#131313"/><rect x="34" y="38" width="2" height="2" fill="#1e1e1e"/><rect x="36" y="38" width="2" height="2" fill="#1a1a1a"/><rect x="38" y="38" width="2" height="2" fill="#1f1f1f"/><rect x="40" y="38" width="2" height="2" fill="#181818"/><rect x="42" y="38" width="2" height="2" fill="#0b0b0b"/><rect x="44" y="38" width="2" height="2" fill="#1c1c1c"/><rect x="46" y="38" width="2" height="2" fill="#1a1a1a"/><rect x="48" y="38" width="2" height="2" fill="#1c1c1c"/><rect x="50" y="38" width="2" height="2" fill="#0f0f0f"/><rect x="52" y="38" width="2" height="2" fill="#191919"/><rect x="54" y="38" width="2" height="2" fill="#141414"/><rect x="56" y="38" width="2" height="2" fill="#141414"/><rect x="58" y="38" width="2" height="2" fill="#1b1b1b"/><rect x="60" y="38" width="2" height="2" fill="#1b1b1b"/><rect x="62" y="38" width="2" height="2" fill="#121212"/><rect x="0" y="40" width="2" height="2" fill="#0d0d0d"/><rect x="2" y="40" width="2" height="2" fill="#070707"/><rect x="4" y="40" width="2" height="2" fill="#141414"/><rect x="6" y="40" width="2" height="2" fill="#202020"/><rect x="8" y="40" width="2" height="2" fill="#181818"/><rect x="10" y="40" width="2" height="2" fill="#090909"/><rect x="12" y="40" width="2" height="2" fill="#121212"/><rect x="14" y="40" width="2" height="2" fill="#1b1b1b"/><rect x="16" y="40" width="2" height="2" fill="#242424"/><rect x="18" y="40" width="2" height="2" fill="#212121"/><rect x="20" y="40" width="2" height="2" fill="#1b1b1b"/><rect x="22" y="40" width="2" height="2" fill="#1a1a1a"/><rect x="24" y="40" width="2" height="2" fill="#111111"/><rect x="26" y="40" width="2" height="2" fill="#151515"/><rect x="28" y="40" width="2" height="2" fill="#161616"/><rect x="30" y="40" width="2" height="2" fill="#131313"/><rect x="32" y="40" width="2" height="2" fill="#191919"/><rect x="34" y="40" width="2" height="2" fill="#161616"/><rect x="36" y="40" width="2" height="2" fill="#1b1b1b"/><rect x="38" y="40" width="2" height="2" fill="#232323"/><rect x="40" y="40" width="2" height="2" fill="#1e1e1e"/><rect x="42" y="40" width="2" height="2" fill="#1b1b1b"/><rect x="44" y="40" width="2" height="2" fill="#171717"/><rect x="46" y="40" width="2" height="2" fill="#0e0e0e"/><rect x="48" y="40" width="2" height="2" fill="#181818"/><rect x="50" y="40" width="2" height="2" fill="#1c1c1c"/><rect x="52" y="40" width="2" height="2" fill="#111111"/><rect x="54" y="40" width="2" height="2" fill="#212121"/><rect x="56" y="40" width="2" height="2" fill="#161616"/><rect x="58" y="40" width="2" height="2" fill="#1b1b1b"/><rect x="60" y="40" width="2" height="2" fill="#161616"/><rect x="62" y="40" width="2" height="2" fill="#101010"/><rect x="0" y="42" width="2" height="2" fill="#272727"/><rect x="2" y="42" width="2" height="2" fill="#101010"/><rect x="4" y="42" width="2" height="2" fill="#1f1f1f"/><rect x="6" y="42" width="2" height="2" fill="#151515"/><rect x="8" y="42" width="2" height="2" fill="#1a1a1a"/><rect x="10" y="42" width="2" height="2" fill="#131313"/><rect x="12" y="42" width="2" height="2" fill="#161616"/><rect x="14" y="42" width="2" height="2" fill="#1f1f1f"/><rect x="16" y="42" width="2" height="2" fill="#262626"/><rect x="18" y="42" width="2" height="2" fill="#131313"/><rect x="20" y="42" width="2" height="2" fill="#191919"/><rect x="22" y="42" width="2" height="2" fill="#1f1f1f"/><rect x="24" y="42" width="2" height="2" fill="#141414"/><rect x="26" y="42" width="2" height="2" fill="#1d1d1d"/><rect x="28" y="42" width="2" height="2" fill="#131313"/><rect x="30" y="42" width="2" height="2" fill="#1d1d1d"/><rect x="32" y="42" width="2" height="2" fill="#1c1c1c"/><rect x="34" y="42" width="2" height="2" fill="#212121"/><rect x="36" y="42" width="2" height="2" fill="#1b1b1b"/><rect x="38" y="42" width="2" height="2" fill="#101010"/><rect x="40" y="42" width="2" height="2" fill="#1d1d1d"/><rect x="42" y="42" width="2" height="2" fill="#111111"/><rect x="44" y="42" width="2" height="2" fill="#1e1e1e"/><rect x="46" y="42" width="2" height="2" fill="#232323"/><rect x="48" y="42" width="2" height="2" fill="#1d1d1d"/><rect x="50" y="42" width="2" height="2" fill="#151515"/><rect x="52" y="42" width="2" height="2" fill="#212121"/><rect x="54" y="42" width="2" height="2" fill="#1a1a1a"/><rect x="56" y="42" width="2" height="2" fill="#101010"/><rect x="58" y="42" width="2" height="2" fill="#161616"/><rect x="60" y="42" width="2" height="2" fill="#222222"/><rect x="62" y="42" width="2" height="2" fill="#161616"/><rect x="0" y="44" width="2" height="2" fill="#191919"/><rect x="2" y="44" width="2" height="2" fill="#161616"/><rect x="4" y="44" width="2" height="2" fill="#0d0d0d"/><rect x="6" y="44" width="2" height="2" fill="#151515"/><rect x="8" y="44" width="2" height="2" fill="#1b1b1b"/><rect x="10" y="44" width="2" height="2" fill="#1a1a1a"/><rect x="12" y="44" width="2" height="2" fill="#171717"/><rect x="14" y="44" width="2" height="2" fill="#0a0a0a"/><rect x="16" y="44" width="2" height="2" fill="#212121"/><rect x="18" y="44" width="2" height="2" fill="#1e1e1e"/><rect x="20" y="44" width="2" height="2" fill="#202020"/><rect x="22" y="44" width="2" height="2" fill="#222222"/><rect x="24" y="44" width="2" height="2" fill="#151515"/><rect x="26" y="44" width="2" height="2" fill="#141414"/><rect x="28" y="44" width="2" height="2" fill="#1b1b1b"/><rect x="30" y="44" width="2" height="2" fill="#242424"/><rect x="32" y="44" width="2" height="2" fill="#0d0d0d"/><rect x="34" y="44" width="2" height="2" fill="#171717"/><rect x="36" y="44" width="2" height="2" fill="#131313"/><rect x="38" y="44" width="2" height="2" fill="#1c1c1c"/><rect x="40" y="44" width="2" height="2" fill="#232323"/><rect x="42" y="44" width="2" height="2" fill="#161616"/><rect x="44" y="44" width="2" height="2" fill="#101010"/><rect x="46" y="44" width="2" height="2" fill="#191919"/><rect x="48" y="44" width="2" height="2" fill="#171717"/><rect x="50" y="44" width="2" height="2" fill="#0e0e0e"/><rect x="52" y="44" width="2" height="2" fill="#1f1f1f"/><rect x="54" y="44" width="2" height="2" fill="#151515"/><rect x="56" y="44" width="2" height="2" fill="#1d1d1d"/><rect x="58" y="44" width="2" height="2" fill="#0f0f0f"/><rect x="60" y="44" width="2" height="2" fill="#202020"/><rect x="62" y="44" width="2" height="2" fill="#0e0e0e"/><rect x="0" y="46" width="2" height="2" fill="#202020"/><rect x="2" y="46" width="2" height="2" fill="#0c0c0c"/><rect x="4" y="46" width="2" height="2" fill="#222222"/><rect x="6" y="46" width="2" height="2" fill="#161616"/><rect x="8" y="46" width="2" height="2" fill="#0e0e0e"/><rect x="10" y="46" width="2" height="2" fill="#171717"/><rect x="12" y="46" width="2" height="2" fill="#1b1b1b"/><rect x="14" y="46" width="2" height="2" fill="#121212"/><rect x="16" y="46" width="2" height="2" fill="#151515"/><rect x="18" y="46" width="2" height="2" fill="#1a1a1a"/><rect x="20" y="46" width="2" height="2" fill="#171717"/><rect x="22" y="46" width="2" height="2" fill="#060606"/><rect x="24" y="46" width="2" height="2" fill="#151515"/><rect x="26" y="46" width="2" height="2" fill="#1b1b1b"/><rect x="28" y="46" width="2" height="2" fill="#1b1b1b"/><rect x="30" y="46" width="2" height="2" fill="#202020"/><rect x="32" y="46" width="2" height="2" fill="#141414"/><rect x="34" y="46" width="2" height="2" fill="#2a2a2a"/><rect x="36" y="46" width="2" height="2" fill="#1e1e1e"/><rect x="38" y="46" width="2" height="2" fill="#1b1b1b"/><rect x="40" y="46" width="2" height="2" fill="#202020"/><rect x="42" y="46" width="2" height="2" fill="#1f1f1f"/><rect x="44" y="46" width="2" height="2" fill="#191919"/><rect x="46" y="46" width="2" height="2" fill="#141414"/><rect x="48" y="46" width="2" height="2" fill="#202020"/><rect x="50" y="46" width="2" height="2" fill="#1b1b1b"/><rect x="52" y="46" width="2" height="2" fill="#0b0b0b"/><rect x="54" y="46" width="2" height="2" fill="#111111"/><rect x="56" y="46" width="2" height="2" fill="#1c1c1c"/><rect x="58" y="46" width="2" height="2" fill="#191919"/><rect x="60" y="46" width="2" height="2" fill="#1a1a1a"/><rect x="62" y="46" width="2" height="2" fill="#1d1d1d"/><rect x="0" y="48" width="2" height="2" fill="#1a1a1a"/><rect x="2" y="48" width="2" height="2" fill="#242424"/><rect x="4" y="48" width="2" height="2" fill="#141414"/><rect x="6" y="48" width="2" height="2" fill="#161616"/><rect x="8" y="48" width="2" height="2" fill="#1b1b1b"/><rect x="10" y="48" width="2" height="2" fill="#1e1e1e"/><rect x="12" y="48" width="2" height="2" fill="#1e1e1e"/><rect x="14" y="48" width="2" height="2" fill="#232323"/><rect x="16" y="48" width="2" height="2" fill="#151515"/><rect x="18" y="48" width="2" height="2" fill="#212121"/><rect x="20" y="48" width="2" height="2" fill="#1c1c1c"/><rect x="22" y="48" width="2" height="2" fill="#111111"/><rect x="24" y="48" width="2" height="2" fill="#181818"/><rect x="26" y="48" width="2" height="2" fill="#272727"/><rect x="28" y="48" width="2" height="2" fill="#1e1e1e"/><rect x="30" y="48" width="2" height="2" fill="#151515"/><rect x="32" y="48" width="2" height="2" fill="#080808"/><rect x="34" y="48" width="2" height="2" fill="#131313"/><rect x="36" y="48" width="2" height="2" fill="#141414"/><rect x="38" y="48" width="2" height="2" fill="#191919"/><rect x="40" y="48" width="2" height="2" fill="#292929"/><rect x="42" y="48" width="2" height="2" fill="#1e1e1e"/><rect x="44" y="48" width="2" height="2" fill="#1b1b1b"/><rect x="46" y="48" width="2" height="2" fill="#121212"/><rect x="48" y="48" width="2" height="2" fill="#101010"/><rect x="50" y="48" width="2" height="2" fill="#171717"/><rect x="52" y="48" width="2" height="2" fill="#151515"/><rect x="54" y="48" width="2" height="2" fill="#2e2e2e"/><rect x="56" y="48" width="2" height="2" fill="#161616"/><rect x="58" y="48" width="2" height="2" fill="#141414"/><rect x="60" y="48" width="2" height="2" fill="#202020"/><rect x="62" y="48" width="2" height="2" fill="#191919"/><rect x="0" y="50" width="2" height="2" fill="#101010"/><rect x="2" y="50" width="2" height="2" fill="#222222"/><rect x="4" y="50" width="2" height="2" fill="#161616"/><rect x="6" y="50" width="2" height="2" fill="#0f0f0f"/><rect x="8" y="50" width="2" height="2" fill="#1b1b1b"/><rect x="10" y="50" width="2" height="2" fill="#1c1c1c"/><rect x="12" y="50" width="2" height="2" fill="#161616"/><rect x="14" y="50" width="2" height="2" fill="#1d1d1d"/><rect x="16" y="50" width="2" height="2" fill="#1e1e1e"/><rect x="18" y="50" width="2" height="2" fill="#121212"/><rect x="20" y="50" width="2" height="2" fill="#0a0a0a"/><rect x="22" y="50" width="2" height="2" fill="#080808"/><rect x="24" y="50" width="2" height="2" fill="#181818"/><rect x="26" y="50" width="2" height="2" fill="#212121"/><rect x="28" y="50" width="2" height="2" fill="#202020"/><rect x="30" y="50" width="2" height="2" fill="#222222"/><rect x="32" y="50" width="2" height="2" fill="#252525"/><rect x="34" y="50" width="2" height="2" fill="#191919"/><rect x="36" y="50" width="2" height="2" fill="#202020"/><rect x="38" y="50" width="2" height="2" fill="#0e0e0e"/><rect x="40" y="50" width="2" height="2" fill="#1d1d1d"/><rect x="42" y="50" width="2" height="2" fill="#1b1b1b"/><rect x="44" y="50" width="2" height="2" fill="#181818"/><rect x="46" y="50" width="2" height="2" fill="#151515"/><rect x="48" y="50" width="2" height="2" fill="#111111"/><rect x="50" y="50" width="2" height="2" fill="#191919"/><rect x="52" y="50" width="2" height="2" fill="#212121"/><rect x="54" y="50" width="2" height="2" fill="#161616"/><rect x="56" y="50" width="2" height="2" fill="#1c1c1c"/><rect x="58" y="50" width="2" height="2" fill="#141414"/><rect x="60" y="50" width="2" height="2" fill="#1a1a1a"/><rect x="62" y="50" width="2" height="2" fill="#111111"/><rect x="0" y="52" width="2" height="2" fill="#1b1b1b"/><rect x="2" y="52" width="2" height="2" fill="#171717"/><rect x="4" y="52" width="2" height="2" fill="#1b1b1b"/><rect x="6" y="52" width="2" height="2" fill="#141414"/><rect x="8" y="52" width="2" height="2" fill="#101010"/><rect x="10" y="52" width="2" height="2" fill="#161616"/><rect x="12" y="52" width="2" height="2" fill="#202020"/><rect x="14" y="52" width="2" height="2" fill="#242424"/><rect x="16" y="52" width="2" height="2" fill="#161616"/><rect x="18" y="52" width="2" height="2" fill="#1e1e1e"/><rect x="20" y="52" width="2" height="2" fill="#1e1e1e"/><rect x="22" y="52" width="2" height="2" fill="#1b1b1b"/><rect x="24" y="52" width="2" height="2" fill="#0e0e0e"/><rect x="26" y="52" width="2" height="2" fill="#1b1b1b"/><rect x="28" y="52" width="2" height="2" fill="#121212"/><rect x="30" y="52" width="2" height="2" fill="#212121"/><rect x="32" y="52" width="2" height="2" fill="#1e1e1e"/><rect x="34" y="52" width="2" height="2" fill="#1d1d1d"/><rect x="36" y="52" width="2" height="2" fill="#070707"/><rect x="38" y="52" width="2" height="2" fill="#1d1d1d"/><rect x="40" y="52" width="2" height="2" fill="#1d1d1d"/><rect x="42" y="52" width="2" height="2" fill="#101010"/><rect x="44" y="52" width="2" height="2" fill="#1f1f1f"/><rect x="46" y="52" width="2" height="2" fill="#191919"/><rect x="48" y="52" width="2" height="2" fill="#171717"/><rect x="50" y="52" width="2" height="2" fill="#141414"/><rect x="52" y="52" width="2" height="2" fill="#111111"/><rect x="54" y="52" width="2" height="2" fill="#151515"/><rect x="56" y="52" width="2" height="2" fill="#2e2e2e"/><rect x="58" y="52" width="2" height="2" fill="#1a1a1a"/><rect x="60" y="52" width="2" height="2" fill="#1a1a1a"/><rect x="62" y="52" width="2" height="2" fill="#141414"/><rect x="0" y="54" width="2" height="2" fill="#141414"/><rect x="2" y="54" width="2" height="2" fill="#151515"/><rect x="4" y="54" width="2" height="2" fill="#121212"/><rect x="6" y="54" width="2" height="2" fill="#1f1f1f"/><rect x="8" y="54" width="2" height="2" fill="#171717"/><rect x="10" y="54" width="2" height="2" fill="#1f1f1f"/><rect x="12" y="54" width="2" height="2" fill="#101010"/><rect x="14" y="54" width="2" height="2" fill="#1f1f1f"/><rect x="16" y="54" width="2" height="2" fill="#181818"/><rect x="18" y="54" width="2" height="2" fill="#1d1d1d"/><rect x="20" y="54" width="2" height="2" fill="#181818"/><rect x="22" y="54" width="2" height="2" fill="#121212"/><rect x="24" y="54" width="2" height="2" fill="#212121"/><rect x="26" y="54" width="2" height="2" fill="#151515"/><rect x="28" y="54" width="2" height="2" fill="#171717"/><rect x="30" y="54" width="2" height="2" fill="#121212"/><rect x="32" y="54" width="2" height="2" fill="#1a1a1a"/><rect x="34" y="54" width="2" height="2" fill="#161616"/><rect x="36" y="54" width="2" height="2" fill="#1a1a1a"/><rect x="38" y="54" width="2" height="2" fill="#1b1b1b"/><rect x="40" y="54" width="2" height="2" fill="#141414"/><rect x="42" y="54" width="2" height="2" fill="#0f0f0f"/><rect x="44" y="54" width="2" height="2" fill="#1c1c1c"/><rect x="46" y="54" width="2" height="2" fill="#1f1f1f"/><rect x="48" y="54" width="2" height="2" fill="#1d1d1d"/><rect x="50" y="54" width="2" height="2" fill="#101010"/><rect x="52" y="54" width="2" height="2" fill="#1d1d1d"/><rect x="54" y="54" width="2" height="2" fill="#1b1b1b"/><rect x="56" y="54" width="2" height="2" fill="#1a1a1a"/><rect x="58" y="54" width="2" height="2" fill="#1c1c1c"/><rect x="60" y="54" width="2" height="2" fill="#161616"/><rect x="62" y="54" width="2" height="2" fill="#1a1a1a"/><rect x="0" y="56" width="2" height="2" fill="#1f1f1f"/><rect x="2" y="56" width="2" height="2" fill="#151515"/><rect x="4" y="56" width="2" height="2" fill="#0e0e0e"/><rect x="6" y="56" width="2" height="2" fill="#181818"/><rect x="8" y="56" width="2" height="2" fill="#1a1a1a"/><rect x="10" y="56" width="2" height="2" fill="#0c0c0c"/><rect x="12" y="56" width="2" height="2" fill="#141414"/><rect x="14" y="56" width="2" height="2" fill="#1d1d1d"/><rect x="16" y="56" width="2" height="2" fill="#171717"/><rect x="18" y="56" width="2" height="2" fill="#191919"/><rect x="20" y="56" width="2" height="2" fill="#101010"/><rect x="22" y="56" width="2" height="2" fill="#1f1f1f"/><rect x="24" y="56" width="2" height="2" fill="#252525"/><rect x="26" y="56" width="2" height="2" fill="#171717"/><rect x="28" y="56" width="2" height="2" fill="#131313"/><rect x="30" y="56" width="2" height="2" fill="#101010"/><rect x="32" y="56" width="2" height="2" fill="#1f1f1f"/><rect x="34" y="56" width="2" height="2" fill="#191919"/><rect x="36" y="56" width="2" height="2" fill="#131313"/><rect x="38" y="56" width="2" height="2" fill="#212121"/><rect x="40" y="56" width="2" height="2" fill="#1e1e1e"/><rect x="42" y="56" width="2" height="2" fill="#1d1d1d"/><rect x="44" y="56" width="2" height="2" fill="#0c0c0c"/><rect x="46" y="56" width="2" height="2" fill="#181818"/><rect x="48" y="56" width="2" height="2" fill="#1d1d1d"/><rect x="50" y="56" width="2" height="2" fill="#101010"/><rect x="52" y="56" width="2" height="2" fill="#1f1f1f"/><rect x="54" y="56" width="2" height="2" fill="#232323"/><rect x="56" y="56" width="2" height="2" fill="#202020"/><rect x="58" y="56" width="2" height="2" fill="#131313"/><rect x="60" y="56" width="2" height="2" fill="#141414"/><rect x="62" y="56" width="2" height="2" fill="#1f1f1f"/><rect x="0" y="58" width="2" height="2" fill="#1f1f1f"/><rect x="2" y="58" width="2" height="2" fill="#212121"/><rect x="4" y="58" width="2" height="2" fill="#212121"/><rect x="6" y="58" width="2" height="2" fill="#181818"/><rect x="8" y="58" width="2" height="2" fill="#161616"/><rect x="10" y="58" width="2" height="2" fill="#0c0c0c"/><rect x="12" y="58" width="2" height="2" fill="#1e1e1e"/><rect x="14" y="58" width="2" height="2" fill="#282828"/><rect x="16" y="58" width="2" height="2" fill="#151515"/><rect x="18" y="58" width="2" height="2" fill="#151515"/><rect x="20" y="58" width="2" height="2" fill="#1d1d1d"/><rect x="22" y="58" width="2" height="2" fill="#1b1b1b"/><rect x="24" y="58" width="2" height="2" fill="#0f0f0f"/><rect x="26" y="58" width="2" height="2" fill="#131313"/><rect x="28" y="58" width="2" height="2" fill="#111111"/><rect x="30" y="58" width="2" height="2" fill="#272727"/><rect x="32" y="58" width="2" height="2" fill="#131313"/><rect x="34" y="58" width="2" height="2" fill="#1e1e1e"/><rect x="36" y="58" width="2" height="2" fill="#262626"/><rect x="38" y="58" width="2" height="2" fill="#262626"/><rect x="40" y="58" width="2" height="2" fill="#222222"/><rect x="42" y="58" width="2" height="2" fill="#242424"/><rect x="44" y="58" width="2" height="2" fill="#101010"/><rect x="46" y="58" width="2" height="2" fill="#161616"/><rect x="48" y="58" width="2" height="2" fill="#131313"/><rect x="50" y="58" width="2" height="2" fill="#161616"/><rect x="52" y="58" width="2" height="2" fill="#2b2b2b"/><rect x="54" y="58" width="2" height="2" fill="#0d0d0d"/><rect x="56" y="58" width="2" height="2" fill="#1c1c1c"/><rect x="58" y="58" width="2" height="2" fill="#101010"/><rect x="60" y="58" width="2" height="2" fill="#222222"/><rect x="62" y="58" width="2" height="2" fill="#222222"/><rect x="0" y="60" width="2" height="2" fill="#151515"/><rect x="2" y="60" width="2" height="2" fill="#272727"/><rect x="4" y="60" width="2" height="2" fill="#191919"/><rect x="6" y="60" width="2" height="2" fill="#222222"/><rect x="8" y="60" width="2" height="2" fill="#1b1b1b"/><rect x="10" y="60" width="2" height="2" fill="#151515"/><rect x="12" y="60" width="2" height="2" fill="#161616"/><rect x="14" y="60" width="2" height="2" fill="#181818"/><rect x="16" y="60" width="2" height="2" fill="#1d1d1d"/><rect x="18" y="60" width="2" height="2" fill="#191919"/><rect x="20" y="60" width="2" height="2" fill="#292929"/><rect x="22" y="60" width="2" height="2" fill="#171717"/><rect x="24" y="60" width="2" height="2" fill="#151515"/><rect x="26" y="60" width="2" height="2" fill="#131313"/><rect x="28" y="60" width="2" height="2" fill="#131313"/><rect x="30" y="60" width="2" height="2" fill="#0e0e0e"/><rect x="32" y="60" width="2" height="2" fill="#121212"/><rect x="34" y="60" width="2" height="2" fill="#1f1f1f"/><rect x="36" y="60" width="2" height="2" fill="#191919"/><rect x="38" y="60" width="2" height="2" fill="#171717"/><rect x="40" y="60" width="2" height="2" fill="#1b1b1b"/><rect x="42" y="60" width="2" height="2" fill="#202020"/><rect x="44" y="60" width="2" height="2" fill="#1d1d1d"/><rect x="46" y="60" width="2" height="2" fill="#1e1e1e"/><rect x="48" y="60" width="2" height="2" fill="#151515"/><rect x="50" y="60" width="2" height="2" fill="#171717"/><rect x="52" y="60" width="2" height="2" fill="#131313"/><rect x="54" y="60" width="2" height="2" fill="#181818"/><rect x="56" y="60" width="2" height="2" fill="#131313"/><rect x="58" y="60" width="2" height="2" fill="#161616"/><rect x="60" y="60" width="2" height="2" fill="#171717"/><rect x="62" y="60" width="2" height="2" fill="#171717"/><rect x="0" y="62" width="2" height="2" fill="#171717"/><rect x="2" y="62" width="2" height="2" fill="#151515"/><rect x="4" y="62" width="2" height="2" fill="#222222"/><rect x="6" y="62" width="2" height="2" fill="#161616"/><rect x="8" y="62" width="2" height="2" fill="#111111"/><rect x="10" y="62" width="2" height="2" fill="#1a1a1a"/><rect x="12" y="62" width="2" height="2" fill="#111111"/><rect x="14" y="62" width="2" height="2" fill="#111111"/><rect x="16" y="62" width="2" height="2" fill="#191919"/><rect x="18" y="62" width="2" height="2" fill="#0d0d0d"/><rect x="20" y="62" width="2" height="2" fill="#060606"/><rect x="22" y="62" width="2" height="2" fill="#1b1b1b"/><rect x="24" y="62" width="2" height="2" fill="#202020"/><rect x="26" y="62" width="2" height="2" fill="#0d0d0d"/><rect x="28" y="62" width="2" height="2" fill="#121212"/><rect x="30" y="62" width="2" height="2" fill="#1d1d1d"/><rect x="32" y="62" width="2" height="2" fill="#0b0b0b"/><rect x="34" y="62" width="2" height="2" fill="#121212"/><rect x="36" y="62" width="2" height="2" fill="#101010"/><rect x="38" y="62" width="2" height="2" fill="#171717"/><rect x="40" y="62" width="2" height="2" fill="#0b0b0b"/><rect x="42" y="62" width="2" height="2" fill="#1f1f1f"/><rect x="44" y="62" width="2" height="2" fill="#171717"/><rect x="46" y="62" width="2" height="2" fill="#1b1b1b"/><rect x="48" y="62" width="2" height="2" fill="#161616"/><rect x="50" y="62" width="2" height="2" fill="#0a0a0a"/><rect x="52" y="62" width="2" height="2" fill="#171717"/><rect x="54" y="62" width="2" height="2" fill="#0f0f0f"/><rect x="56" y="62" width="2" height="2" fill="#191919"/><rect x="58" y="62" width="2" height="2" fill="#131313"/><rect x="60" y="62" width="2" height="2" fill="#161616"/><rect x="62" y="62" width="2" height="2" fill="#171717"/></pattern>
<clipPath id="meshclip"><rect x="3" y="1170" width="502" height="252"/></clipPath>
</defs>
<rect x="0.0" y="0.0" width="2864.0" height="1422.0" fill="#101010"/>
<path d="M 3 1422 L 3 12 Q 3 0 15 0 L 2034 0 Q 2046 0 2046 12 L 2046 1422 Z" fill="#f0f0f0"/>
<path d="M 4 49 L 4 12 Q 4 1 15 1 L 2034 1 Q 2045 1 2045 12 L 2045 49 Z" fill="#f3f3f3"/>
<rect x="4.0" y="49.0" width="1426.0" height="42.0" fill="#ffffff"/>
<g transform="translate(10,7)"><rect x="0" y="0" width="32" height="32" fill="#000098"/><rect x="0" y="8" width="7" height="8" fill="#0000f0"/><rect x="13" y="6" width="5" height="5" fill="#0000e0"/><rect x="26" y="10" width="6" height="6" fill="#0000e0"/><rect x="26" y="21" width="6" height="11" fill="#0000f0"/><rect x="15" y="24" width="6" height="4" fill="#0000d0"/><rect x="0" y="0" width="9" height="5" fill="#000010"/><rect x="0" y="25" width="4" height="5" fill="#000010"/><rect x="6" y="30" width="14" height="2" fill="#000000"/><rect x="0" y="16.5" width="32" height="2" fill="#d8d810"/><rect x="8.2" y="2" width="3.8" height="28" fill="#ffff00"/><polygon points="10,10 12,14 17.5,16.5 17.5,18.5 12,20 10,22 8,20 3,18.5 3,16.5 8,14" fill="#ffff00"/><g fill="#9090c8"><rect x="3.5" y="5.5" width="2" height="2"/><rect x="22" y="4" width="2" height="2"/><rect x="26" y="4" width="2" height="2"/><rect x="30" y="6" width="2" height="2"/><rect x="2" y="24" width="2" height="2"/><rect x="6" y="28" width="2" height="2"/><rect x="18" y="28" width="2" height="2"/><rect x="22" y="28" width="2" height="2"/><rect x="26" y="26" width="2" height="2"/><rect x="30" y="28" width="2" height="2"/><rect x="14" y="30" width="2" height="2"/></g></g>
<text x="52.5" y="35.0" font-size="30" fill="#8a8a8a" textLength="1317.0" lengthAdjust="spacingAndGlyphs">Light Measurement tool for Occultation Observation using Video Recorder [Limovie 1.0.1.5 Pneuma]</text>
<text x="18.5" y="83.0" font-size="30" fill="#6d6d6d" textLength="45.0" lengthAdjust="spacingAndGlyphs">File</text>
<text x="124.0" y="83.0" font-size="30" fill="#6d6d6d" textLength="53.0" lengthAdjust="spacingAndGlyphs">Edit</text>
<text x="236.0" y="83.0" font-size="30" fill="#6d6d6d" textLength="91.5" lengthAdjust="spacingAndGlyphs">Option</text>
<text x="371.0" y="83.0" font-size="30" fill="#6d6d6d" textLength="70.0" lengthAdjust="spacingAndGlyphs">Tools</text>
<text x="492.0" y="83.0" font-size="30" fill="#6d6d6d" textLength="223.3" lengthAdjust="spacingAndGlyphs">Software Update</text>
<rect x="20.0" y="99.0" width="1410.0" height="4.0" fill="#a0a0a0"/>
<rect x="20.0" y="99.0" width="4.0" height="664.0" fill="#a0a0a0"/>
<rect x="22.0" y="101.0" width="1408.0" height="2.0" fill="#696969"/>
<rect x="22.0" y="101.0" width="2.0" height="662.0" fill="#696969"/>
<rect x="24.0" y="103.0" width="1406.0" height="659.5" fill="url(#vnoise)"/>
<rect x="24.0" y="103.0" width="368.0" height="31.0" fill="#000"/>
<rect x="24.0" y="103.0" width="4.0" height="4.0" fill="#00ff00"/>
<text x="25.0" y="131.0" font-size="31" font-weight="bold" font-family="Liberation Mono" fill="#fff" textLength="368.0" lengthAdjust="spacingAndGlyphs">2025 03 21 19:31:21:583</text>
<g shape-rendering="crispEdges">
<circle cx="484.5" cy="397.5" r="50.5" fill="none" stroke="#00e0f0" stroke-width="2"/>
<circle cx="484.5" cy="397.5" r="12.5" fill="none" stroke="#00e0f0" stroke-width="2"/>
<circle cx="484.5" cy="397.5" r="10.5" fill="none" stroke="#ff0000" stroke-width="2"/>
<circle cx="484" cy="397" r="4" fill="#555" opacity="0.6"/>
<circle cx="1029" cy="493.5" r="50.5" fill="none" stroke="#b4a600" stroke-width="2"/>
<circle cx="1029" cy="493.5" r="12.5" fill="none" stroke="#b4a600" stroke-width="2"/>
<circle cx="1029" cy="493.5" r="8.5" fill="none" stroke="#b00000" stroke-width="2"/>
</g>
<rect x="345.0" y="225.0" width="2.0" height="2.0" fill="#ddd"/>
<rect x="20.0" y="762.5" width="1410.0" height="244.5" fill="#c0c0c0"/>
<rect x="20.0" y="1007.0" width="1400.0" height="34.0" fill="#696969"/>
<rect x="20.0" y="1007.0" width="1398.0" height="32.0" fill="#ffffff"/>
<rect x="22.0" y="1009.0" width="1396.0" height="30.0" fill="#a0a0a0"/>
<rect x="22.0" y="1009.0" width="1394.0" height="28.0" fill="#e3e3e3"/>
<rect x="24.0" y="1011.0" width="1392.0" height="26.0" fill="#f0f0f0"/>
<rect x="20.0" y="1043.0" width="1410.0" height="2.0" fill="#ffffff"/>
<rect x="20.0" y="1065.0" width="866.0" height="30.0" fill="url(#dith)"/>
<rect x="20.0" y="1064.0" width="866.0" height="2.0" fill="#a0a0a0"/>
<rect x="528.5" y="1065.0" width="33.0" height="30.0" fill="#696969"/>
<rect x="528.5" y="1065.0" width="31.0" height="28.0" fill="#ffffff"/>
<rect x="530.5" y="1067.0" width="29.0" height="26.0" fill="#a0a0a0"/>
<rect x="530.5" y="1067.0" width="27.0" height="24.0" fill="#e3e3e3"/>
<rect x="532.5" y="1069.0" width="25.0" height="22.0" fill="#f0f0f0"/>
<rect x="852.5" y="1065.0" width="33.5" height="30.0" fill="#696969"/>
<rect x="852.5" y="1065.0" width="31.5" height="28.0" fill="#ffffff"/>
<rect x="854.5" y="1067.0" width="29.5" height="26.0" fill="#a0a0a0"/>
<rect x="854.5" y="1067.0" width="27.5" height="24.0" fill="#e3e3e3"/>
<rect x="856.5" y="1069.0" width="25.5" height="22.0" fill="#f0f0f0"/>
<polygon points="866,1079 866,1086 871,1082.5" fill="#000" stroke="#000" stroke-width="2"/>
<rect x="470.0" y="1103.0" width="59.5" height="52.0" fill="#696969"/>
<rect x="470.0" y="1103.0" width="57.5" height="50.0" fill="#ffffff"/>
<rect x="472.0" y="1105.0" width="55.5" height="48.0" fill="#a0a0a0"/>
<rect x="472.0" y="1105.0" width="53.5" height="46.0" fill="#e3e3e3"/>
<rect x="474.0" y="1107.0" width="51.5" height="44.0" fill="#f0f0f0"/>
<text x="505.0" y="1138.6" font-size="24.5" fill="#000" textLength="18.0" lengthAdjust="spacingAndGlyphs">Fr</text>
<rect x="534.0" y="1103.0" width="63.5" height="52.0" fill="#696969"/>
<rect x="534.0" y="1103.0" width="61.5" height="50.0" fill="#ffffff"/>
<rect x="536.0" y="1105.0" width="59.5" height="48.0" fill="#a0a0a0"/>
<rect x="536.0" y="1105.0" width="57.5" height="46.0" fill="#e3e3e3"/>
<rect x="538.0" y="1107.0" width="55.5" height="44.0" fill="#f0f0f0"/>
<polygon points="556,1121 556,1139 576,1130" fill="#000"/>
<rect x="570" y="1128" width="6" height="4" fill="#000"/>
<rect x="601.7" y="1103.0" width="63.7" height="52.0" fill="#696969"/>
<rect x="601.7" y="1103.0" width="61.7" height="50.0" fill="#ffffff"/>
<rect x="603.7" y="1105.0" width="59.7" height="48.0" fill="#a0a0a0"/>
<rect x="603.7" y="1105.0" width="57.7" height="46.0" fill="#e3e3e3"/>
<rect x="605.7" y="1107.0" width="55.7" height="44.0" fill="#f0f0f0"/>
<rect x="626.0" y="1125.0" width="14.0" height="12.0" fill="#000"/>
<rect x="670.0" y="1103.0" width="63.7" height="52.0" fill="#696969"/>
<rect x="670.0" y="1103.0" width="61.7" height="50.0" fill="#ffffff"/>
<rect x="672.0" y="1105.0" width="59.7" height="48.0" fill="#a0a0a0"/>
<rect x="672.0" y="1105.0" width="57.7" height="46.0" fill="#e3e3e3"/>
<rect x="674.0" y="1107.0" width="55.7" height="44.0" fill="#f0f0f0"/>
<text x="681.5" y="1138.6" font-size="24.5" fill="#000" textLength="41.0" lengthAdjust="spacingAndGlyphs">1Fr+</text>
<rect x="741.5" y="1103.0" width="63.5" height="52.0" fill="#696969"/>
<rect x="741.5" y="1103.0" width="61.5" height="50.0" fill="#ffffff"/>
<rect x="743.5" y="1105.0" width="59.5" height="48.0" fill="#a0a0a0"/>
<rect x="743.5" y="1105.0" width="57.5" height="46.0" fill="#e3e3e3"/>
<rect x="745.5" y="1107.0" width="55.5" height="44.0" fill="#f0f0f0"/>
<text x="745.0" y="1138.6" font-size="24.5" fill="#000" textLength="57.0" lengthAdjust="spacingAndGlyphs">1sec+</text>
<rect x="809.8" y="1103.0" width="80.0" height="52.0" fill="#696969"/>
<rect x="809.8" y="1103.0" width="78.0" height="50.0" fill="#ffffff"/>
<rect x="811.8" y="1105.0" width="76.0" height="48.0" fill="#a0a0a0"/>
<rect x="811.8" y="1105.0" width="74.0" height="46.0" fill="#e3e3e3"/>
<rect x="813.8" y="1107.0" width="72.0" height="44.0" fill="#f0f0f0"/>
<text x="815.0" y="1138.6" font-size="24.5" fill="#000" textLength="70.0" lengthAdjust="spacingAndGlyphs">10sec+</text>
<rect x="901.5" y="1071" width="547.5" height="82.29999999999995" fill="none" stroke="#a0a0a0" stroke-width="2"/>
<rect x="903.5" y="1073" width="547.5" height="82.29999999999995" fill="none" stroke="#ffffff" stroke-width="2"/>
<rect x="901.5" y="1071" width="547.5" height="82.29999999999995" fill="none" stroke="#a0a0a0" stroke-width="2"/>
<rect x="914.0" y="1068.0" width="132.0" height="8.0" fill="#f0f0f0"/>
<text x="917.3" y="1080.9" font-size="24.5" fill="#000" textLength="127.0" lengthAdjust="spacingAndGlyphs">Measurement</text>
<rect x="912.0" y="1091.4" width="75.5" height="52.8" fill="#696969"/>
<rect x="912.0" y="1091.4" width="73.5" height="50.8" fill="#ffffff"/>
<rect x="914.0" y="1093.4" width="71.5" height="48.8" fill="#a0a0a0"/>
<rect x="914.0" y="1093.4" width="69.5" height="46.8" fill="#e3e3e3"/>
<rect x="916.0" y="1095.4" width="67.5" height="44.8" fill="#f0f0f0"/>
<text x="915.2" y="1125.0" font-size="24.5" fill="#000" textLength="69.0" lengthAdjust="spacingAndGlyphs">1Frame</text>
<rect x="996.0" y="1091.4" width="53.7" height="52.8" fill="#696969"/>
<rect x="996.0" y="1091.4" width="51.7" height="50.8" fill="#ffffff"/>
<rect x="998.0" y="1093.4" width="49.7" height="48.8" fill="#a0a0a0"/>
<rect x="998.0" y="1093.4" width="47.7" height="46.8" fill="#e3e3e3"/>
<rect x="1000.0" y="1095.4" width="45.7" height="44.8" fill="#f0f0f0"/>
<text x="1003.2" y="1125.0" font-size="24.5" fill="#000" textLength="41.0" lengthAdjust="spacingAndGlyphs">DEL</text>
<rect x="1056.0" y="1091.4" width="95.6" height="52.8" fill="#696969"/>
<rect x="1056.0" y="1091.4" width="93.6" height="50.8" fill="#ffffff"/>
<rect x="1058.0" y="1093.4" width="91.6" height="48.8" fill="#a0a0a0"/>
<rect x="1058.0" y="1093.4" width="89.6" height="46.8" fill="#e3e3e3"/>
<rect x="1060.0" y="1095.4" width="87.6" height="44.8" fill="#f0f0f0"/>
<text x="1063.6" y="1125.0" font-size="24.5" font-weight="bold" fill="#000" textLength="78.0" lengthAdjust="spacingAndGlyphs">START</text>
<rect x="1155.8" y="1091.4" width="79.7" height="52.8" fill="#696969"/>
<rect x="1155.8" y="1091.4" width="77.7" height="50.8" fill="#ffffff"/>
<rect x="1157.8" y="1093.4" width="75.7" height="48.8" fill="#a0a0a0"/>
<rect x="1157.8" y="1093.4" width="73.7" height="46.8" fill="#e3e3e3"/>
<rect x="1159.8" y="1095.4" width="71.7" height="44.8" fill="#f0f0f0"/>
<text x="1163.6" y="1125.0" font-size="24.5" font-weight="bold" fill="#000" textLength="64.5" lengthAdjust="spacingAndGlyphs">STOP</text>
<rect x="1240.0" y="1091.4" width="142.7" height="52.8" fill="#696969"/>
<rect x="1240.0" y="1091.4" width="140.7" height="50.8" fill="#ffffff"/>
<rect x="1242.0" y="1093.4" width="138.7" height="48.8" fill="#a0a0a0"/>
<rect x="1242.0" y="1093.4" width="136.7" height="46.8" fill="#e3e3e3"/>
<rect x="1244.0" y="1095.4" width="134.7" height="44.8" fill="#f0f0f0"/>
<text x="1249.5" y="1125.0" font-size="24.5" fill="#000" textLength="125.0" lengthAdjust="spacingAndGlyphs">DataRemove</text>
<rect x="1383.7" y="1091.4" width="96.3" height="52.8" fill="#696969"/>
<rect x="1383.7" y="1091.4" width="94.3" height="50.8" fill="#ffffff"/>
<rect x="1385.7" y="1093.4" width="92.3" height="48.8" fill="#a0a0a0"/>
<rect x="1385.7" y="1093.4" width="90.3" height="46.8" fill="#e3e3e3"/>
<rect x="1387.7" y="1095.4" width="88.3" height="44.8" fill="#f0f0f0"/>
<text x="1395.2" y="1125.0" font-size="24.5" font-weight="bold" fill="#000" textLength="62.0" lengthAdjust="spacingAndGlyphs">Save</text>
<rect x="471" y="1175" width="353.4" height="89.59999999999991" fill="none" stroke="#a0a0a0" stroke-width="2"/>
<rect x="473" y="1177" width="353.4" height="89.59999999999991" fill="none" stroke="#ffffff" stroke-width="2"/>
<rect x="471" y="1175" width="353.4" height="89.59999999999991" fill="none" stroke="#a0a0a0" stroke-width="2"/>
<rect x="460.0" y="1172.0" width="178.0" height="8.0" fill="#f0f0f0"/>
<text x="470.0" y="1184.8" font-size="24.5" fill="#000" textLength="164.0" lengthAdjust="spacingAndGlyphs">Linked Tracking</text>
<text x="513.9" y="1214.8" font-size="24.5" fill="#000" textLength="37.6" lengthAdjust="spacingAndGlyphs">Link</text>
<text x="577.9" y="1216.8" font-size="24.5" fill="#000" textLength="74.0" lengthAdjust="spacingAndGlyphs">Passed-</text>
<rect x="656.2" y="1179.5" width="80.1" height="39.2" fill="#ffffff"/>
<rect x="656.2" y="1179.5" width="78.1" height="37.2" fill="#a0a0a0"/>
<rect x="658.2" y="1181.5" width="76.1" height="35.2" fill="#e3e3e3"/>
<rect x="658.2" y="1181.5" width="74.1" height="33.2" fill="#696969"/>
<rect x="660.2" y="1183.5" width="72.1" height="31.2" fill="#ffffff"/>
<text x="663.7" y="1206.9" font-size="24.5" fill="#000" textLength="64.7" lengthAdjust="spacingAndGlyphs">Frame1</text>
<rect x="736.3" y="1179.5" width="79.8" height="39.2" fill="#ffffff"/>
<rect x="736.3" y="1179.5" width="77.8" height="37.2" fill="#a0a0a0"/>
<rect x="738.3" y="1181.5" width="75.8" height="35.2" fill="#e3e3e3"/>
<rect x="738.3" y="1181.5" width="73.8" height="33.2" fill="#696969"/>
<rect x="740.3" y="1183.5" width="71.8" height="31.2" fill="#ffffff"/>
<text x="743.5" y="1206.9" font-size="24.5" fill="#000" textLength="65.0" lengthAdjust="spacingAndGlyphs">Frame2</text>
<text x="513.9" y="1250.8" font-size="24.5" fill="#a0a0a0" textLength="62.4" lengthAdjust="spacingAndGlyphs">Rotate</text>
<text x="593.7" y="1249.1" font-size="24.5" fill="#000" textLength="46.2" lengthAdjust="spacingAndGlyphs">Point</text>
<rect x="656.2" y="1227.3" width="43.4" height="33.3" fill="#696969"/>
<rect x="656.2" y="1227.3" width="41.4" height="31.3" fill="#ffffff"/>
<rect x="658.2" y="1229.3" width="39.4" height="29.3" fill="#a0a0a0"/>
<rect x="658.2" y="1229.3" width="37.4" height="27.3" fill="#e3e3e3"/>
<rect x="660.2" y="1231.3" width="35.4" height="25.3" fill="#f0f0f0"/>
<text x="663.7" y="1250.8" font-size="24.5" fill="#a0a0a0" textLength="30.3" lengthAdjust="spacingAndGlyphs">Set</text>
<rect x="702.0" y="1227.3" width="33.6" height="33.3" fill="#696969"/>
<rect x="702.0" y="1227.3" width="31.6" height="31.3" fill="#ffffff"/>
<rect x="704.0" y="1229.3" width="29.6" height="29.3" fill="#a0a0a0"/>
<rect x="704.0" y="1229.3" width="27.6" height="27.3" fill="#e3e3e3"/>
<rect x="706.0" y="1231.3" width="25.6" height="25.3" fill="#f0f0f0"/>
<text x="707.9" y="1250.8" font-size="24.5" fill="#a0a0a0" textLength="22.4" lengthAdjust="spacingAndGlyphs">Clr</text>
<rect x="738.3" y="1227.3" width="43.5" height="33.3" fill="#696969"/>
<rect x="738.3" y="1227.3" width="41.5" height="31.3" fill="#ffffff"/>
<rect x="740.3" y="1229.3" width="39.5" height="29.3" fill="#a0a0a0"/>
<rect x="740.3" y="1229.3" width="37.5" height="27.3" fill="#e3e3e3"/>
<rect x="742.3" y="1231.3" width="35.5" height="25.3" fill="#f0f0f0"/>
<text x="746.2" y="1250.8" font-size="24.5" fill="#a0a0a0" textLength="30.3" lengthAdjust="spacingAndGlyphs">Set</text>
<rect x="784.0" y="1227.3" width="33.5" height="33.3" fill="#696969"/>
<rect x="784.0" y="1227.3" width="31.5" height="31.3" fill="#ffffff"/>
<rect x="786.0" y="1229.3" width="29.5" height="29.3" fill="#a0a0a0"/>
<rect x="786.0" y="1229.3" width="27.5" height="27.3" fill="#e3e3e3"/>
<rect x="788.0" y="1231.3" width="25.5" height="25.3" fill="#f0f0f0"/>
<text x="789.7" y="1250.8" font-size="24.5" fill="#a0a0a0" textLength="22.5" lengthAdjust="spacingAndGlyphs">Clr</text>
<rect x="837.5" y="1175" width="179.5" height="90" fill="none" stroke="#a0a0a0" stroke-width="2"/>
<rect x="839.5" y="1177" width="179.5" height="90" fill="none" stroke="#ffffff" stroke-width="2"/>
<rect x="837.5" y="1175" width="179.5" height="90" fill="none" stroke="#a0a0a0" stroke-width="2"/>
<rect x="849.0" y="1172.0" width="46.7" height="8.0" fill="#f0f0f0"/>
<text x="853.0" y="1184.6" font-size="24.5" fill="#000" textLength="38.7" lengthAdjust="spacingAndGlyphs">PSF</text>
<rect x="853.0" y="1195.0" width="24.0" height="24.0" fill="#ffffff"/>
<rect x="853.0" y="1195.0" width="22.0" height="22.0" fill="#a0a0a0"/>
<rect x="855.0" y="1197.0" width="20.0" height="20.0" fill="#e3e3e3"/>
<rect x="855.0" y="1197.0" width="18.0" height="18.0" fill="#696969"/>
<rect x="857.0" y="1199.0" width="16.0" height="16.0" fill="#ffffff"/>
<text x="890.0" y="1215.0" font-size="24.5" fill="#000" textLength="83.0" lengthAdjust="spacingAndGlyphs">Tracking</text>
<rect x="853.0" y="1231.0" width="24.0" height="24.0" fill="#ffffff"/>
<rect x="853.0" y="1231.0" width="22.0" height="22.0" fill="#a0a0a0"/>
<rect x="855.0" y="1233.0" width="20.0" height="20.0" fill="#e3e3e3"/>
<rect x="855.0" y="1233.0" width="18.0" height="18.0" fill="#696969"/>
<rect x="857.0" y="1235.0" width="16.0" height="16.0" fill="#ffffff"/>
<text x="890.0" y="1251.0" font-size="24.5" fill="#000" textLength="104.0" lengthAdjust="spacingAndGlyphs">Photometry</text>
<rect x="1037.6" y="1175" width="236.80000000000018" height="264" fill="none" stroke="#a0a0a0" stroke-width="2"/>
<rect x="1039.6" y="1177" width="236.80000000000018" height="264" fill="none" stroke="#ffffff" stroke-width="2"/>
<rect x="1037.6" y="1175" width="236.80000000000018" height="264" fill="none" stroke="#a0a0a0" stroke-width="2"/>
<rect x="1049.6" y="1172.0" width="177.0" height="8.0" fill="#f0f0f0"/>
<text x="1053.6" y="1184.6" font-size="24.5" fill="#000" textLength="169.0" lengthAdjust="spacingAndGlyphs">Form of BKG-Area</text>
<path d="M 1049.93 1213.77 A 10 10 0 0 1 1064.07 1199.63" fill="none" stroke="#a0a0a0" stroke-width="2"/>
<path d="M 1064.07 1199.63 A 10 10 0 0 1 1049.93 1213.77" fill="none" stroke="#ffffff" stroke-width="2"/>
<circle cx="1057" cy="1206.7" r="8" fill="#ffffff"/>
<path d="M 1051.344 1212.356 A 8 8 0 0 1 1062.656 1201.044" fill="none" stroke="#696969" stroke-width="2"/>
<circle cx="1057" cy="1206.7" r="3.5" fill="#000"/>
<text x="1081.2" y="1216.3" font-size="24.5" fill="#000" textLength="85.0" lengthAdjust="spacingAndGlyphs">Standard</text>
<path d="M 1049.93 1244.97 A 10 10 0 0 1 1064.07 1230.8300000000002" fill="none" stroke="#a0a0a0" stroke-width="2"/>
<path d="M 1064.07 1230.8300000000002 A 10 10 0 0 1 1049.93 1244.97" fill="none" stroke="#ffffff" stroke-width="2"/>
<circle cx="1057" cy="1237.9" r="8" fill="#ffffff"/>
<path d="M 1051.344 1243.556 A 8 8 0 0 1 1062.656 1232.2440000000001" fill="none" stroke="#696969" stroke-width="2"/>
<text x="1080.2" y="1248.5" font-size="24.5" fill="#000" textLength="166.0" lengthAdjust="spacingAndGlyphs">Avoid Sunlit Face</text>
<path d="M 1049.93 1277.6699999999998 A 10 10 0 0 1 1064.07 1263.53" fill="none" stroke="#a0a0a0" stroke-width="2"/>
<path d="M 1064.07 1263.53 A 10 10 0 0 1 1049.93 1277.6699999999998" fill="none" stroke="#ffffff" stroke-width="2"/>
<circle cx="1057" cy="1270.6" r="8" fill="#ffffff"/>
<path d="M 1051.344 1276.2559999999999 A 8 8 0 0 1 1062.656 1264.944" fill="none" stroke="#696969" stroke-width="2"/>
<text x="1081.2" y="1280.9" font-size="24.5" fill="#000" textLength="179.3" lengthAdjust="spacingAndGlyphs">Meteor/Lunar Limb</text>
<rect x="1052.1" y="1295.2" width="209.9" height="47.2" fill="#696969"/>
<rect x="1052.1" y="1295.2" width="207.9" height="45.2" fill="#ffffff"/>
<rect x="1054.1" y="1297.2" width="205.9" height="43.2" fill="#a0a0a0"/>
<rect x="1054.1" y="1297.2" width="203.9" height="41.2" fill="#e3e3e3"/>
<rect x="1056.1" y="1299.2" width="201.9" height="39.2" fill="#f0f0f0"/>
<text x="1079.2" y="1327.0" font-size="24.5" fill="#000" textLength="155.7" lengthAdjust="spacingAndGlyphs">Direction Setting</text>
<text x="1060.3" y="1369.0" font-size="24.5" fill="#000" textLength="56.8" lengthAdjust="spacingAndGlyphs">Width</text>
<text x="1173.4" y="1369.0" font-size="24.5" fill="#000" textLength="39.0" lengthAdjust="spacingAndGlyphs">Gap</text>
<rect x="1072.0" y="1375.0" width="48.0" height="35.0" fill="#ffffff"/>
<rect x="1072.0" y="1375.0" width="46.0" height="33.0" fill="#a0a0a0"/>
<rect x="1074.0" y="1377.0" width="44.0" height="31.0" fill="#e3e3e3"/>
<rect x="1074.0" y="1377.0" width="42.0" height="29.0" fill="#696969"/>
<rect x="1076.0" y="1379.0" width="40.0" height="27.0" fill="#ffffff"/>
<text x="1079.0" y="1401.0" font-size="24.5" fill="#000">5</text>
<rect x="1122.2" y="1371.0" width="33.8" height="24.6" fill="#696969"/>
<rect x="1122.2" y="1371.0" width="31.8" height="22.6" fill="#ffffff"/>
<rect x="1124.2" y="1373.0" width="29.8" height="20.6" fill="#a0a0a0"/>
<rect x="1124.2" y="1373.0" width="27.8" height="18.6" fill="#e3e3e3"/>
<rect x="1126.2" y="1375.0" width="25.8" height="16.6" fill="#f0f0f0"/>
<rect x="1122.2" y="1395.6" width="33.8" height="24.6" fill="#696969"/>
<rect x="1122.2" y="1395.6" width="31.8" height="22.6" fill="#ffffff"/>
<rect x="1124.2" y="1397.6" width="29.8" height="20.6" fill="#a0a0a0"/>
<rect x="1124.2" y="1397.6" width="27.8" height="18.6" fill="#e3e3e3"/>
<rect x="1126.2" y="1399.6" width="25.8" height="16.6" fill="#f0f0f0"/>
<polygon points="1132.1,1386.8 1146.1,1386.8 1139.1,1379.8" fill="#a0a0a0"/>
<polygon points="1132.1,1404.4 1146.1,1404.4 1139.1,1411.4" fill="#a0a0a0"/>
<rect x="1172.4" y="1375.0" width="47.6" height="35.0" fill="#ffffff"/>
<rect x="1172.4" y="1375.0" width="45.6" height="33.0" fill="#a0a0a0"/>
<rect x="1174.4" y="1377.0" width="43.6" height="31.0" fill="#e3e3e3"/>
<rect x="1174.4" y="1377.0" width="41.6" height="29.0" fill="#696969"/>
<rect x="1176.4" y="1379.0" width="39.6" height="27.0" fill="#ffffff"/>
<text x="1179.0" y="1401.0" font-size="24.5" fill="#000">0</text>
<rect x="1226.3" y="1371.0" width="33.7" height="24.6" fill="#696969"/>
<rect x="1226.3" y="1371.0" width="31.7" height="22.6" fill="#ffffff"/>
<rect x="1228.3" y="1373.0" width="29.7" height="20.6" fill="#a0a0a0"/>
<rect x="1228.3" y="1373.0" width="27.7" height="18.6" fill="#e3e3e3"/>
<rect x="1230.3" y="1375.0" width="25.7" height="16.6" fill="#f0f0f0"/>
<rect x="1226.3" y="1395.6" width="33.7" height="24.6" fill="#696969"/>
<rect x="1226.3" y="1395.6" width="31.7" height="22.6" fill="#ffffff"/>
<rect x="1228.3" y="1397.6" width="29.7" height="20.6" fill="#a0a0a0"/>
<rect x="1228.3" y="1397.6" width="27.7" height="18.6" fill="#e3e3e3"/>
<rect x="1230.3" y="1399.6" width="25.7" height="16.6" fill="#f0f0f0"/>
<polygon points="1236.15,1386.8 1250.15,1386.8 1243.15,1379.8" fill="#a0a0a0"/>
<polygon points="1236.15,1404.4 1250.15,1404.4 1243.15,1411.4" fill="#a0a0a0"/>
<rect x="1285" y="1175" width="164" height="264" fill="none" stroke="#a0a0a0" stroke-width="2"/>
<rect x="1287" y="1177" width="164" height="264" fill="none" stroke="#ffffff" stroke-width="2"/>
<rect x="1285" y="1175" width="164" height="264" fill="none" stroke="#a0a0a0" stroke-width="2"/>
<rect x="1297.5" y="1172.0" width="168.0" height="8.0" fill="#f0f0f0"/>
<text x="1301.5" y="1184.6" font-size="24.5" fill="#000" textLength="160.0" lengthAdjust="spacingAndGlyphs">Number of Pixels</text>
<text x="1300.5" y="1208.2" font-size="24.5" fill="#000" textLength="80.0" lengthAdjust="spacingAndGlyphs">Aperture</text>
<text x="1301.5" y="1240.3" font-size="24.5" fill="#000" textLength="48.0" lengthAdjust="spacingAndGlyphs">Even</text>
<rect x="1370.0" y="1215.3" width="80.0" height="29.7" fill="#ffffff"/>
<rect x="1370.0" y="1215.3" width="78.0" height="27.7" fill="#a0a0a0"/>
<rect x="1372.0" y="1217.3" width="76.0" height="25.7" fill="#e3e3e3"/>
<rect x="1372.0" y="1217.3" width="74.0" height="23.7" fill="#696969"/>
<rect x="1374.0" y="1219.3" width="72.0" height="21.7" fill="#ffffff"/>
<text x="1376.3" y="1238.5" font-size="24.5" fill="#000">50</text>
<text x="1301.5" y="1271.7" font-size="24.5" fill="#000" textLength="39.0" lengthAdjust="spacingAndGlyphs">Odd</text>
<rect x="1370.0" y="1248.0" width="80.0" height="28.8" fill="#ffffff"/>
<rect x="1370.0" y="1248.0" width="78.0" height="26.8" fill="#a0a0a0"/>
<rect x="1372.0" y="1250.0" width="76.0" height="24.8" fill="#e3e3e3"/>
<rect x="1372.0" y="1250.0" width="74.0" height="22.8" fill="#696969"/>
<rect x="1374.0" y="1252.0" width="72.0" height="20.8" fill="#ffffff"/>
<text x="1376.3" y="1270.0" font-size="24.5" fill="#000">51</text>
<text x="1301.5" y="1301.4" font-size="24.5" fill="#000" textLength="57.0" lengthAdjust="spacingAndGlyphs">Frame</text>
<rect x="1370.0" y="1279.8" width="80.0" height="28.8" fill="#ffffff"/>
<rect x="1370.0" y="1279.8" width="78.0" height="26.8" fill="#a0a0a0"/>
<rect x="1372.0" y="1281.8" width="76.0" height="24.8" fill="#e3e3e3"/>
<rect x="1372.0" y="1281.8" width="74.0" height="22.8" fill="#696969"/>
<rect x="1374.0" y="1283.8" width="72.0" height="20.8" fill="#ffffff"/>
<text x="1376.3" y="1302.0" font-size="28" font-weight="bold" fill="#000" textLength="38.0" lengthAdjust="spacingAndGlyphs">101</text>
<rect x="1300.5" y="1315.7" width="149.5" height="28.7" fill="#696969"/>
<rect x="1300.5" y="1315.7" width="147.5" height="26.7" fill="#ffffff"/>
<rect x="1302.5" y="1317.7" width="145.5" height="24.7" fill="#a0a0a0"/>
<rect x="1302.5" y="1317.7" width="143.5" height="22.7" fill="#e3e3e3"/>
<rect x="1304.5" y="1319.7" width="141.5" height="20.7" fill="#f0f0f0"/>
<text x="1315.2" y="1335.8" font-size="24.5" fill="#000" textLength="130.0" lengthAdjust="spacingAndGlyphs">Set  radius to</text>
<text x="1309.7" y="1368.0" font-size="24.5" fill="#000" textLength="64.5" lengthAdjust="spacingAndGlyphs">Radius</text>
<text x="1405.0" y="1368.0" font-size="24.5" fill="#000" textLength="50.0" lengthAdjust="spacingAndGlyphs">Inner</text>
<rect x="1300.5" y="1375.0" width="36.8" height="37.0" fill="#ffffff"/>
<rect x="1300.5" y="1375.0" width="34.8" height="35.0" fill="#a0a0a0"/>
<rect x="1302.5" y="1377.0" width="32.8" height="33.0" fill="#e3e3e3"/>
<rect x="1302.5" y="1377.0" width="30.8" height="31.0" fill="#696969"/>
<rect x="1304.5" y="1379.0" width="28.8" height="29.0" fill="#ffffff"/>
<text x="1307.0" y="1402.0" font-size="24.5" fill="#000">5</text>
<rect x="1344.5" y="1371.0" width="33.4" height="24.5" fill="#696969"/>
<rect x="1344.5" y="1371.0" width="31.4" height="22.5" fill="#ffffff"/>
<rect x="1346.5" y="1373.0" width="29.4" height="20.5" fill="#a0a0a0"/>
<rect x="1346.5" y="1373.0" width="27.4" height="18.5" fill="#e3e3e3"/>
<rect x="1348.5" y="1375.0" width="25.4" height="16.5" fill="#f0f0f0"/>
<rect x="1344.5" y="1395.5" width="33.4" height="24.5" fill="#696969"/>
<rect x="1344.5" y="1395.5" width="31.4" height="22.5" fill="#ffffff"/>
<rect x="1346.5" y="1397.5" width="29.4" height="20.5" fill="#a0a0a0"/>
<rect x="1346.5" y="1397.5" width="27.4" height="18.5" fill="#e3e3e3"/>
<rect x="1348.5" y="1399.5" width="25.4" height="16.5" fill="#f0f0f0"/>
<polygon points="1354.2,1386.75 1368.2,1386.75 1361.2,1379.75" fill="#000"/>
<polygon points="1354.2,1404.25 1368.2,1404.25 1361.2,1411.25" fill="#000"/>
<rect x="1388.6" y="1375.0" width="61.4" height="37.0" fill="#ffffff"/>
<rect x="1388.6" y="1375.0" width="59.4" height="35.0" fill="#a0a0a0"/>
<rect x="1390.6" y="1377.0" width="57.4" height="33.0" fill="#e3e3e3"/>
<rect x="1390.6" y="1377.0" width="55.4" height="31.0" fill="#696969"/>
<rect x="1392.6" y="1379.0" width="53.4" height="29.0" fill="#ffffff"/>
<text x="1395.0" y="1402.0" font-size="24.5" fill="#000">6</text>
<rect x="508" y="1290.4" width="518.3" height="158.5999999999999" fill="none" stroke="#a0a0a0" stroke-width="2"/>
<rect x="510" y="1292.4" width="518.3" height="158.5999999999999" fill="none" stroke="#ffffff" stroke-width="2"/>
<rect x="508" y="1290.4" width="518.3" height="158.5999999999999" fill="none" stroke="#a0a0a0" stroke-width="2"/>
<rect x="513.0" y="1287.4" width="135.0" height="8.0" fill="#f0f0f0"/>
<text x="517.2" y="1301.0" font-size="24.5" fill="#000" textLength="127.5" lengthAdjust="spacingAndGlyphs">Star Tracking</text>
<rect x="801.0" y="1285.0" width="213.0" height="8.0" fill="#f0f0f0"/>
<text x="805.0" y="1301.0" font-size="24.5" fill="#000" textLength="205.5" lengthAdjust="spacingAndGlyphs">Passed Point (Frame.)</text>
<path d="M 518.13 1329.07 A 10 10 0 0 1 532.2700000000001 1314.93" fill="none" stroke="#a0a0a0" stroke-width="2"/>
<path d="M 532.2700000000001 1314.93 A 10 10 0 0 1 518.13 1329.07" fill="none" stroke="#ffffff" stroke-width="2"/>
<circle cx="525.2" cy="1322" r="8" fill="#ffffff"/>
<path d="M 519.5440000000001 1327.656 A 8 8 0 0 1 530.856 1316.344" fill="none" stroke="#696969" stroke-width="2"/>
<text x="548.2" y="1332.4" font-size="24.5" fill="#000" textLength="68.2" lengthAdjust="spacingAndGlyphs">Anchor</text>
<path d="M 518.13 1355.07 A 10 10 0 0 1 532.2700000000001 1340.93" fill="none" stroke="#a0a0a0" stroke-width="2"/>
<path d="M 532.2700000000001 1340.93 A 10 10 0 0 1 518.13 1355.07" fill="none" stroke="#ffffff" stroke-width="2"/>
<circle cx="525.2" cy="1348" r="8" fill="#ffffff"/>
<path d="M 519.5440000000001 1353.656 A 8 8 0 0 1 530.856 1342.344" fill="none" stroke="#696969" stroke-width="2"/>
<text x="548.2" y="1358.6" font-size="24.5" fill="#000" textLength="36.0" lengthAdjust="spacingAndGlyphs">Drift</text>
<path d="M 518.13 1383.47 A 10 10 0 0 1 532.2700000000001 1369.3300000000002" fill="none" stroke="#a0a0a0" stroke-width="2"/>
<path d="M 532.2700000000001 1369.3300000000002 A 10 10 0 0 1 518.13 1383.47" fill="none" stroke="#ffffff" stroke-width="2"/>
<circle cx="525.2" cy="1376.4" r="8" fill="#ffffff"/>
<path d="M 519.5440000000001 1382.056 A 8 8 0 0 1 530.856 1370.7440000000001" fill="none" stroke="#696969" stroke-width="2"/>
<circle cx="525.2" cy="1376.4" r="3.5" fill="#000"/>
<text x="548.2" y="1383.8" font-size="24.5" fill="#000" textLength="41.0" lengthAdjust="spacingAndGlyphs">OFF</text>
<path d="M 518.13 1411.07 A 10 10 0 0 1 532.2700000000001 1396.93" fill="none" stroke="#a0a0a0" stroke-width="2"/>
<path d="M 532.2700000000001 1396.93 A 10 10 0 0 1 518.13 1411.07" fill="none" stroke="#ffffff" stroke-width="2"/>
<circle cx="525.2" cy="1404" r="8" fill="#ffffff"/>
<path d="M 519.5440000000001 1409.656 A 8 8 0 0 1 530.856 1398.344" fill="none" stroke="#696969" stroke-width="2"/>
<text x="548.2" y="1412.0" font-size="24.5" fill="#000" textLength="41.0" lengthAdjust="spacingAndGlyphs">CSV</text>
<rect x="640.5" y="1307.3" width="24.0" height="24.0" fill="#ffffff"/>
<rect x="640.5" y="1307.3" width="22.0" height="22.0" fill="#a0a0a0"/>
<rect x="642.5" y="1309.3" width="20.0" height="20.0" fill="#e3e3e3"/>
<rect x="642.5" y="1309.3" width="18.0" height="18.0" fill="#696969"/>
<rect x="644.5" y="1311.3" width="16.0" height="16.0" fill="#f0f0f0"/>
<text x="676.1" y="1324.4" font-size="20" fill="#a0a0a0" textLength="125.8" lengthAdjust="spacingAndGlyphs">Estimated track</text>
<text x="634.2" y="1356.5" font-size="24.5" fill="#000" textLength="64.0" lengthAdjust="spacingAndGlyphs">Radius</text>
<text x="710.7" y="1356.5" font-size="24.5" fill="#000" textLength="91.2" lengthAdjust="spacingAndGlyphs">Threshold</text>
<rect x="614.3" y="1369.1" width="41.9" height="37.7" fill="#ffffff"/>
<rect x="614.3" y="1369.1" width="39.9" height="35.7" fill="#a0a0a0"/>
<rect x="616.3" y="1371.1" width="37.9" height="33.7" fill="#e3e3e3"/>
<rect x="616.3" y="1371.1" width="35.9" height="31.7" fill="#696969"/>
<rect x="618.3" y="1373.1" width="33.9" height="29.7" fill="#ffffff"/>
<text x="621.0" y="1397.0" font-size="24.5" fill="#000">5</text>
<rect x="660.4" y="1364.9" width="33.5" height="24.7" fill="#696969"/>
<rect x="660.4" y="1364.9" width="31.5" height="22.7" fill="#ffffff"/>
<rect x="662.4" y="1366.9" width="29.5" height="20.7" fill="#a0a0a0"/>
<rect x="662.4" y="1366.9" width="27.5" height="18.7" fill="#e3e3e3"/>
<rect x="664.4" y="1368.9" width="25.5" height="16.7" fill="#f0f0f0"/>
<rect x="660.4" y="1389.6" width="33.5" height="24.6" fill="#696969"/>
<rect x="660.4" y="1389.6" width="31.5" height="22.6" fill="#ffffff"/>
<rect x="662.4" y="1391.6" width="29.5" height="20.6" fill="#a0a0a0"/>
<rect x="662.4" y="1391.6" width="27.5" height="18.6" fill="#e3e3e3"/>
<rect x="664.4" y="1393.6" width="25.5" height="16.6" fill="#f0f0f0"/>
<polygon points="670.15,1380.7250000000001 684.15,1380.7250000000001 677.15,1373.7250000000001" fill="#000"/>
<polygon points="670.15,1398.375 684.15,1398.375 677.15,1405.375" fill="#000"/>
<rect x="720.1" y="1370.0" width="47.2" height="39.0" fill="#ffffff"/>
<rect x="720.1" y="1370.0" width="45.2" height="37.0" fill="#a0a0a0"/>
<rect x="722.1" y="1372.0" width="43.2" height="35.0" fill="#e3e3e3"/>
<rect x="722.1" y="1372.0" width="41.2" height="33.0" fill="#696969"/>
<rect x="724.1" y="1374.0" width="39.2" height="31.0" fill="#ffffff"/>
<text x="727.0" y="1398.0" font-size="24.5" fill="#000">95</text>
<rect x="768.3" y="1375.4" width="33.6" height="19.4" fill="#696969"/>
<rect x="768.3" y="1375.4" width="31.6" height="17.4" fill="#ffffff"/>
<rect x="770.3" y="1377.4" width="29.6" height="15.4" fill="#a0a0a0"/>
<rect x="770.3" y="1377.4" width="27.6" height="13.4" fill="#e3e3e3"/>
<rect x="772.3" y="1379.4" width="25.6" height="11.4" fill="#f0f0f0"/>
<rect x="768.3" y="1394.8" width="33.6" height="19.4" fill="#696969"/>
<rect x="768.3" y="1394.8" width="31.6" height="17.4" fill="#ffffff"/>
<rect x="770.3" y="1396.8" width="29.6" height="15.4" fill="#a0a0a0"/>
<rect x="770.3" y="1396.8" width="27.6" height="13.4" fill="#e3e3e3"/>
<rect x="772.3" y="1398.8" width="25.6" height="11.4" fill="#f0f0f0"/>
<polygon points="780.0999999999999,1387.6000000000001 790.0999999999999,1387.6000000000001 785.0999999999999,1382.6000000000001" fill="#000"/>
<polygon points="780.0999999999999,1402.0 790.0999999999999,1402.0 785.0999999999999,1407.0" fill="#000"/>
<rect x="820.3" y="1323.0" width="87.5" height="39.8" fill="#ffffff"/>
<rect x="820.3" y="1323.0" width="85.5" height="37.8" fill="#a0a0a0"/>
<rect x="822.3" y="1325.0" width="83.5" height="35.8" fill="#e3e3e3"/>
<rect x="822.3" y="1325.0" width="81.5" height="33.8" fill="#696969"/>
<rect x="824.3" y="1327.0" width="79.5" height="31.8" fill="#ffffff"/>
<text x="827.0" y="1351.0" font-size="24.5" fill="#8a8a8a" textLength="68.0" lengthAdjust="spacingAndGlyphs">Frame1</text>
<rect x="924.5" y="1323.0" width="87.0" height="39.8" fill="#ffffff"/>
<rect x="924.5" y="1323.0" width="85.0" height="37.8" fill="#a0a0a0"/>
<rect x="926.5" y="1325.0" width="83.0" height="35.8" fill="#e3e3e3"/>
<rect x="926.5" y="1325.0" width="81.0" height="33.8" fill="#696969"/>
<rect x="928.5" y="1327.0" width="79.0" height="31.8" fill="#ffffff"/>
<text x="931.0" y="1351.0" font-size="24.5" fill="#8a8a8a" textLength="68.0" lengthAdjust="spacingAndGlyphs">Frame2</text>
<rect x="820.3" y="1371.8" width="47.6" height="42.4" fill="#696969"/>
<rect x="820.3" y="1371.8" width="45.6" height="40.4" fill="#ffffff"/>
<rect x="822.3" y="1373.8" width="43.6" height="38.4" fill="#a0a0a0"/>
<rect x="822.3" y="1373.8" width="41.6" height="36.4" fill="#e3e3e3"/>
<rect x="824.3" y="1375.8" width="39.6" height="34.4" fill="#f0f0f0"/>
<text x="844.1" y="1402.0" font-size="24.5" font-weight="bold" fill="#a0a0a0" textLength="34.0" lengthAdjust="spacingAndGlyphs" text-anchor="middle">Set</text>
<rect x="867.9" y="1371.8" width="49.3" height="42.4" fill="#696969"/>
<rect x="867.9" y="1371.8" width="47.3" height="40.4" fill="#ffffff"/>
<rect x="869.9" y="1373.8" width="45.3" height="38.4" fill="#a0a0a0"/>
<rect x="869.9" y="1373.8" width="43.3" height="36.4" fill="#e3e3e3"/>
<rect x="871.9" y="1375.8" width="41.3" height="34.4" fill="#f0f0f0"/>
<text x="892.5" y="1402.0" font-size="24.5" fill="#a0a0a0" textLength="24.0" lengthAdjust="spacingAndGlyphs" text-anchor="middle">Clr</text>
<rect x="920.3" y="1371.8" width="54.5" height="42.4" fill="#696969"/>
<rect x="920.3" y="1371.8" width="52.5" height="40.4" fill="#ffffff"/>
<rect x="922.3" y="1373.8" width="50.5" height="38.4" fill="#a0a0a0"/>
<rect x="922.3" y="1373.8" width="48.5" height="36.4" fill="#e3e3e3"/>
<rect x="924.3" y="1375.8" width="46.5" height="34.4" fill="#f0f0f0"/>
<text x="947.5" y="1402.0" font-size="24.5" font-weight="bold" fill="#a0a0a0" textLength="34.0" lengthAdjust="spacingAndGlyphs" text-anchor="middle">Set</text>
<rect x="974.8" y="1371.8" width="47.2" height="42.4" fill="#696969"/>
<rect x="974.8" y="1371.8" width="45.2" height="40.4" fill="#ffffff"/>
<rect x="976.8" y="1373.8" width="43.2" height="38.4" fill="#a0a0a0"/>
<rect x="976.8" y="1373.8" width="41.2" height="36.4" fill="#e3e3e3"/>
<rect x="978.8" y="1375.8" width="39.2" height="34.4" fill="#f0f0f0"/>
<text x="998.4" y="1402.0" font-size="24.5" fill="#a0a0a0" textLength="24.0" lengthAdjust="spacingAndGlyphs" text-anchor="middle">Clr</text>
<rect x="2046.0" y="0.0" width="818.0" height="3.0" fill="#0c0c0c"/>
<rect x="2701.0" y="0.0" width="37.0" height="3.0" fill="#5a8a4a"/>
<rect x="2738.0" y="0.0" width="19.0" height="3.0" fill="#c8c8c8"/>
<path d="M 1425.5 1432 L 1425.5 14 Q 1425.5 1.5 1438 1.5 L 2870 1.5 L 2870 1432 Z" fill="#f0f0f0" stroke="#a8a8a8" stroke-width="1.5"/>
<path d="M 1426.5 53 L 1426.5 14 Q 1426.5 2.5 1438 2.5 L 2864 2.5 L 2864 53 Z" fill="#f3f3f3"/>
<g transform="translate(1432,11)"><rect x="0" y="0" width="32" height="32" fill="#000098"/><rect x="0" y="8" width="7" height="8" fill="#0000f0"/><rect x="13" y="6" width="5" height="5" fill="#0000e0"/><rect x="26" y="10" width="6" height="6" fill="#0000e0"/><rect x="26" y="21" width="6" height="11" fill="#0000f0"/><rect x="15" y="24" width="6" height="4" fill="#0000d0"/><rect x="0" y="0" width="9" height="5" fill="#000010"/><rect x="0" y="25" width="4" height="5" fill="#000010"/><rect x="6" y="30" width="14" height="2" fill="#000000"/><rect x="0" y="16.5" width="32" height="2" fill="#d8d810"/><rect x="8.2" y="2" width="3.8" height="28" fill="#ffff00"/><polygon points="10,10 12,14 17.5,16.5 17.5,18.5 12,20 10,22 8,20 3,18.5 3,16.5 8,14" fill="#ffff00"/><g fill="#9090c8"><rect x="3.5" y="5.5" width="2" height="2"/><rect x="22" y="4" width="2" height="2"/><rect x="26" y="4" width="2" height="2"/><rect x="30" y="6" width="2" height="2"/><rect x="2" y="24" width="2" height="2"/><rect x="6" y="28" width="2" height="2"/><rect x="18" y="28" width="2" height="2"/><rect x="22" y="28" width="2" height="2"/><rect x="26" y="26" width="2" height="2"/><rect x="30" y="28" width="2" height="2"/><rect x="14" y="30" width="2" height="2"/></g></g>
<text x="1474.7" y="38.5" font-size="30" fill="#000" textLength="78.5" lengthAdjust="spacingAndGlyphs">Graph</text>
<rect x="2692.8" y="25.0" width="20.0" height="1.5" fill="#000"/>
<rect x="2784.5" y="16.8" width="19" height="18.6" rx="3" fill="none" stroke="#000" stroke-width="1.6"/>
<rect x="1442.0" y="57.0" width="1422.0" height="849.6" fill="#ffffff"/>
<text x="1459.7" y="85.0" font-size="26" font-weight="bold" fill="#000" textLength="1052.0" lengthAdjust="spacingAndGlyphs">2025 Mar 21: (329) Svea occults J171354.44-065808.4 Observed by Hidehito Yamamura</text>
<text x="2522.4" y="85.0" font-size="26" fill="#000" textLength="282.0" lengthAdjust="spacingAndGlyphs">/ APT-Frame Photometry /</text>
<rect x="1544.0" y="779.0" width="1320.0" height="2.0" fill="#00ffff"/>
<rect x="1544.0" y="732.0" width="1320.0" height="2.0" fill="#00ffff"/>
<rect x="1544.0" y="684.0" width="1320.0" height="2.0" fill="#00ffff"/>
<rect x="1544.0" y="637.0" width="1320.0" height="2.0" fill="#00ffff"/>
<rect x="1544.0" y="590.0" width="1320.0" height="2.0" fill="#00ffff"/>
<rect x="1544.0" y="542.0" width="1320.0" height="2.0" fill="#00ffff"/>
<rect x="1544.0" y="495.0" width="1320.0" height="2.0" fill="#00ffff"/>
<rect x="1544.0" y="447.0" width="1320.0" height="2.0" fill="#00ffff"/>
<rect x="1544.0" y="400.0" width="1320.0" height="2.0" fill="#00ffff"/>
<rect x="1544.0" y="352.0" width="1320.0" height="2.0" fill="#00ffff"/>
<rect x="1544.0" y="305.0" width="1320.0" height="2.0" fill="#00ffff"/>
<rect x="1544.0" y="257.0" width="1320.0" height="2.0" fill="#00ffff"/>
<rect x="1544.0" y="210.0" width="1320.0" height="2.0" fill="#00ffff"/>
<rect x="1544.0" y="163.0" width="1320.0" height="2.0" fill="#00ffff"/>
<rect x="1542.0" y="97.0" width="2.0" height="732.0" fill="#000"/>
<rect x="1542.0" y="827.0" width="1322.0" height="2.0" fill="#000"/>
<rect x="1566.0" y="829.0" width="2.0" height="7.5" fill="#000"/>
<rect x="1646.0" y="829.0" width="2.0" height="7.5" fill="#000"/>
<rect x="1726.0" y="829.0" width="2.0" height="7.5" fill="#000"/>
<rect x="1806.0" y="829.0" width="2.0" height="7.5" fill="#000"/>
<rect x="1886.0" y="829.0" width="2.0" height="7.5" fill="#000"/>
<rect x="1966.0" y="829.0" width="2.0" height="7.5" fill="#000"/>
<rect x="2046.0" y="829.0" width="2.0" height="7.5" fill="#000"/>
<rect x="2126.0" y="829.0" width="2.0" height="7.5" fill="#000"/>
<rect x="2206.0" y="829.0" width="2.0" height="7.5" fill="#000"/>
<rect x="2294.0" y="829.0" width="2.0" height="7.5" fill="#000"/>
<rect x="2374.0" y="829.0" width="2.0" height="7.5" fill="#000"/>
<rect x="2454.0" y="829.0" width="2.0" height="7.5" fill="#000"/>
<rect x="2534.0" y="829.0" width="2.0" height="7.5" fill="#000"/>
<text x="1711.0" y="856.7" font-size="24.5" fill="#000" textLength="32.5" lengthAdjust="spacingAndGlyphs">570</text>
<text x="1951.0" y="856.7" font-size="24.5" fill="#000" textLength="32.5" lengthAdjust="spacingAndGlyphs">600</text>
<text x="2191.0" y="856.7" font-size="24.5" fill="#000" textLength="32.5" lengthAdjust="spacingAndGlyphs">630</text>
<text x="2439.0" y="856.7" font-size="24.5" fill="#000" textLength="32.5" lengthAdjust="spacingAndGlyphs">660</text>
<text x="1527.5" y="830.7" font-size="24.5" fill="#000" textLength="10.0" lengthAdjust="spacingAndGlyphs">0</text>
<text x="1491.2" y="783.3" font-size="24.5" fill="#000" textLength="33.5" lengthAdjust="spacingAndGlyphs">100</text>
<text x="1491.2" y="735.8" font-size="24.5" fill="#000" textLength="33.5" lengthAdjust="spacingAndGlyphs">200</text>
<text x="1491.2" y="688.4" font-size="24.5" fill="#000" textLength="33.5" lengthAdjust="spacingAndGlyphs">300</text>
<text x="1491.2" y="641.0" font-size="24.5" fill="#000" textLength="33.5" lengthAdjust="spacingAndGlyphs">400</text>
<text x="1491.2" y="593.5" font-size="24.5" fill="#000" textLength="33.5" lengthAdjust="spacingAndGlyphs">500</text>
<text x="1491.2" y="546.1" font-size="24.5" fill="#000" textLength="33.5" lengthAdjust="spacingAndGlyphs">600</text>
<text x="1491.2" y="498.6" font-size="24.5" fill="#000" textLength="33.5" lengthAdjust="spacingAndGlyphs">700</text>
<text x="1491.2" y="451.2" font-size="24.5" fill="#000" textLength="33.5" lengthAdjust="spacingAndGlyphs">800</text>
<text x="1491.2" y="403.8" font-size="24.5" fill="#000" textLength="33.5" lengthAdjust="spacingAndGlyphs">900</text>
<text x="1476.5" y="356.3" font-size="24.5" fill="#000" textLength="44.2" lengthAdjust="spacingAndGlyphs">1000</text>
<text x="1476.5" y="308.9" font-size="24.5" fill="#000" textLength="44.2" lengthAdjust="spacingAndGlyphs">1100</text>
<text x="1476.5" y="261.5" font-size="24.5" fill="#000" textLength="44.2" lengthAdjust="spacingAndGlyphs">1200</text>
<text x="1476.5" y="214.0" font-size="24.5" fill="#000" textLength="44.2" lengthAdjust="spacingAndGlyphs">1300</text>
<text x="1476.5" y="166.6" font-size="24.5" fill="#000" textLength="44.2" lengthAdjust="spacingAndGlyphs">1400</text>
<text x="1459.0" y="891.4" font-size="24.5" fill="#000" textLength="762.0" lengthAdjust="spacingAndGlyphs">Exp=165msec / Frm No.583.0 / Frm Mid= 19h31m21.4897s,  End= 21.5722s</text>
<g shape-rendering="crispEdges">
<polyline points="1542,350.8 1550,358.8 1558,374.5 1566,288.4 1574,354.5 1582,282.6 1590,378.8 1598,352.5 1606,312.5 1614,524.5 1622,307 1630,526.3 1638,420.8 1646,392.5 1654,378.8 1662,382.5 1670,496.3 1678,407 1686,490.5 1694,440.5 1702,372.5 1710,484.5 1718,376.3 1726,427 1734,464.5 1742,471 1750,478.8 1758,432.5 1766,393 1774,458.8 1782,414.5 1790,463 1798,398.8 1806,398.8 1814,458.8 1822,507 1830,418.8 1838,415 1846,370.8 1854,224.5 1862,382.5 1870,244.8 1878,328.5 1886,572.5 1894,436.3 1902,357 1910,436.3 1918,444.5 1926,382.5 1934,512.5 1942,402.5 1950,552.5 1958,452.5 1966,410.5 1974,510.5 1982,565 1990,510.5 1998,442.5 2006,380.5 2014,420.5 2022,468.8 2030,488.8 2038,398.8 2046,422.5 2054,394.5 2062,404.5 2070,434.5 2078,418.8 2086,357 2094,354.5 2102,387 2110,450.5 2118,520.5 2126,505.5 2134,511.3 2142,500 2150,520.5 2158,464.5 2166,488 2174,402.5 2182,407 2190,548.8 2198,580.5 2206,500 2214,512.5 2222,444.5 2230,554.5 2238,474.5 2246,468 2254,468 2262,527 2270,527 2278,468.8 2286,504.5 2294,512.5 2302,538 2310,424.5 2318,492.5 2326,495 2334,482.5 2342,526.3 2350,442.5 2358,428.8 2366,472.5 2374,480 2382,408.8 2390,442.5 2398,448.8 2406,456.3 2414,428.8 2422,476.3 2430,510.5 2438,454.5 2446,484.5 2454,438.8 2462,388.8 2470,422.5 2478,392.5 2486,464.5 2494,462.5 2502,477.5 2510,483.8 2518,492.5 2526,385 2534,508" fill="none" stroke="#ffff00" stroke-width="2"/>
<polygon points="1540,345 1544,345 1544,347 1546,347 1546,349 1548,349 1548,353 1546,353 1546,355 1544,355 1544,357 1540,357 1540,355 1538,355 1538,353 1536,353 1536,349 1538,349 1538,347 1540,347" fill="#ffa500"/>
<polygon points="1548,353 1552,353 1552,355 1554,355 1554,357 1556,357 1556,361 1554,361 1554,363 1552,363 1552,365 1548,365 1548,363 1546,363 1546,361 1544,361 1544,357 1546,357 1546,355 1548,355" fill="#ffa500"/>
<polygon points="1556,368 1560,368 1560,370 1562,370 1562,372 1564,372 1564,376 1562,376 1562,378 1560,378 1560,380 1556,380 1556,378 1554,378 1554,376 1552,376 1552,372 1554,372 1554,370 1556,370" fill="#ffa500"/>
<polygon points="1564,282 1568,282 1568,284 1570,284 1570,286 1572,286 1572,290 1570,290 1570,292 1568,292 1568,294 1564,294 1564,292 1562,292 1562,290 1560,290 1560,286 1562,286 1562,284 1564,284" fill="#ffa500"/>
<polygon points="1572,348 1576,348 1576,350 1578,350 1578,352 1580,352 1580,356 1578,356 1578,358 1576,358 1576,360 1572,360 1572,358 1570,358 1570,356 1568,356 1568,352 1570,352 1570,350 1572,350" fill="#ffa500"/>
<polygon points="1580,277 1584,277 1584,279 1586,279 1586,281 1588,281 1588,285 1586,285 1586,287 1584,287 1584,289 1580,289 1580,287 1578,287 1578,285 1576,285 1576,281 1578,281 1578,279 1580,279" fill="#ffa500"/>
<polygon points="1588,373 1592,373 1592,375 1594,375 1594,377 1596,377 1596,381 1594,381 1594,383 1592,383 1592,385 1588,385 1588,383 1586,383 1586,381 1584,381 1584,377 1586,377 1586,375 1588,375" fill="#ffa500"/>
<polygon points="1596,346 1600,346 1600,348 1602,348 1602,350 1604,350 1604,354 1602,354 1602,356 1600,356 1600,358 1596,358 1596,356 1594,356 1594,354 1592,354 1592,350 1594,350 1594,348 1596,348" fill="#ffa500"/>
<polygon points="1604,306 1608,306 1608,308 1610,308 1610,310 1612,310 1612,314 1610,314 1610,316 1608,316 1608,318 1604,318 1604,316 1602,316 1602,314 1600,314 1600,310 1602,310 1602,308 1604,308" fill="#ffa500"/>
<polygon points="1612,518 1616,518 1616,520 1618,520 1618,522 1620,522 1620,526 1618,526 1618,528 1616,528 1616,530 1612,530 1612,528 1610,528 1610,526 1608,526 1608,522 1610,522 1610,520 1612,520" fill="#ffa500"/>
<polygon points="1620,301 1624,301 1624,303 1626,303 1626,305 1628,305 1628,309 1626,309 1626,311 1624,311 1624,313 1620,313 1620,311 1618,311 1618,309 1616,309 1616,305 1618,305 1618,303 1620,303" fill="#ffa500"/>
<polygon points="1628,520 1632,520 1632,522 1634,522 1634,524 1636,524 1636,528 1634,528 1634,530 1632,530 1632,532 1628,532 1628,530 1626,530 1626,528 1624,528 1624,524 1626,524 1626,522 1628,522" fill="#ffa500"/>
<polygon points="1636,415 1640,415 1640,417 1642,417 1642,419 1644,419 1644,423 1642,423 1642,425 1640,425 1640,427 1636,427 1636,425 1634,425 1634,423 1632,423 1632,419 1634,419 1634,417 1636,417" fill="#ffa500"/>
<polygon points="1644,386 1648,386 1648,388 1650,388 1650,390 1652,390 1652,394 1650,394 1650,396 1648,396 1648,398 1644,398 1644,396 1642,396 1642,394 1640,394 1640,390 1642,390 1642,388 1644,388" fill="#ffa500"/>
<polygon points="1652,373 1656,373 1656,375 1658,375 1658,377 1660,377 1660,381 1658,381 1658,383 1656,383 1656,385 1652,385 1652,383 1650,383 1650,381 1648,381 1648,377 1650,377 1650,375 1652,375" fill="#ffa500"/>
<polygon points="1660,376 1664,376 1664,378 1666,378 1666,380 1668,380 1668,384 1666,384 1666,386 1664,386 1664,388 1660,388 1660,386 1658,386 1658,384 1656,384 1656,380 1658,380 1658,378 1660,378" fill="#ffa500"/>
<polygon points="1668,490 1672,490 1672,492 1674,492 1674,494 1676,494 1676,498 1674,498 1674,500 1672,500 1672,502 1668,502 1668,500 1666,500 1666,498 1664,498 1664,494 1666,494 1666,492 1668,492" fill="#ffa500"/>
<polygon points="1676,401 1680,401 1680,403 1682,403 1682,405 1684,405 1684,409 1682,409 1682,411 1680,411 1680,413 1676,413 1676,411 1674,411 1674,409 1672,409 1672,405 1674,405 1674,403 1676,403" fill="#ffa500"/>
<polygon points="1684,484 1688,484 1688,486 1690,486 1690,488 1692,488 1692,492 1690,492 1690,494 1688,494 1688,496 1684,496 1684,494 1682,494 1682,492 1680,492 1680,488 1682,488 1682,486 1684,486" fill="#ffa500"/>
<polygon points="1692,434 1696,434 1696,436 1698,436 1698,438 1700,438 1700,442 1698,442 1698,444 1696,444 1696,446 1692,446 1692,444 1690,444 1690,442 1688,442 1688,438 1690,438 1690,436 1692,436" fill="#ffa500"/>
<polygon points="1700,366 1704,366 1704,368 1706,368 1706,370 1708,370 1708,374 1706,374 1706,376 1704,376 1704,378 1700,378 1700,376 1698,376 1698,374 1696,374 1696,370 1698,370 1698,368 1700,368" fill="#ffa500"/>
<polygon points="1708,478 1712,478 1712,480 1714,480 1714,482 1716,482 1716,486 1714,486 1714,488 1712,488 1712,490 1708,490 1708,488 1706,488 1706,486 1704,486 1704,482 1706,482 1706,480 1708,480" fill="#ffa500"/>
<polygon points="1716,370 1720,370 1720,372 1722,372 1722,374 1724,374 1724,378 1722,378 1722,380 1720,380 1720,382 1716,382 1716,380 1714,380 1714,378 1712,378 1712,374 1714,374 1714,372 1716,372" fill="#ffa500"/>
<polygon points="1724,421 1728,421 1728,423 1730,423 1730,425 1732,425 1732,429 1730,429 1730,431 1728,431 1728,433 1724,433 1724,431 1722,431 1722,429 1720,429 1720,425 1722,425 1722,423 1724,423" fill="#ffa500"/>
<polygon points="1732,458 1736,458 1736,460 1738,460 1738,462 1740,462 1740,466 1738,466 1738,468 1736,468 1736,470 1732,470 1732,468 1730,468 1730,466 1728,466 1728,462 1730,462 1730,460 1732,460" fill="#ffa500"/>
<polygon points="1740,465 1744,465 1744,467 1746,467 1746,469 1748,469 1748,473 1746,473 1746,475 1744,475 1744,477 1740,477 1740,475 1738,475 1738,473 1736,473 1736,469 1738,469 1738,467 1740,467" fill="#ffa500"/>
<polygon points="1748,473 1752,473 1752,475 1754,475 1754,477 1756,477 1756,481 1754,481 1754,483 1752,483 1752,485 1748,485 1748,483 1746,483 1746,481 1744,481 1744,477 1746,477 1746,475 1748,475" fill="#ffa500"/>
<polygon points="1756,426 1760,426 1760,428 1762,428 1762,430 1764,430 1764,434 1762,434 1762,436 1760,436 1760,438 1756,438 1756,436 1754,436 1754,434 1752,434 1752,430 1754,430 1754,428 1756,428" fill="#ffa500"/>
<polygon points="1764,387 1768,387 1768,389 1770,389 1770,391 1772,391 1772,395 1770,395 1770,397 1768,397 1768,399 1764,399 1764,397 1762,397 1762,395 1760,395 1760,391 1762,391 1762,389 1764,389" fill="#ffa500"/>
<polygon points="1772,453 1776,453 1776,455 1778,455 1778,457 1780,457 1780,461 1778,461 1778,463 1776,463 1776,465 1772,465 1772,463 1770,463 1770,461 1768,461 1768,457 1770,457 1770,455 1772,455" fill="#ffa500"/>
<polygon points="1780,408 1784,408 1784,410 1786,410 1786,412 1788,412 1788,416 1786,416 1786,418 1784,418 1784,420 1780,420 1780,418 1778,418 1778,416 1776,416 1776,412 1778,412 1778,410 1780,410" fill="#ffa500"/>
<polygon points="1788,457 1792,457 1792,459 1794,459 1794,461 1796,461 1796,465 1794,465 1794,467 1792,467 1792,469 1788,469 1788,467 1786,467 1786,465 1784,465 1784,461 1786,461 1786,459 1788,459" fill="#ffa500"/>
<polygon points="1796,393 1800,393 1800,395 1802,395 1802,397 1804,397 1804,401 1802,401 1802,403 1800,403 1800,405 1796,405 1796,403 1794,403 1794,401 1792,401 1792,397 1794,397 1794,395 1796,395" fill="#ffa500"/>
<polygon points="1804,393 1808,393 1808,395 1810,395 1810,397 1812,397 1812,401 1810,401 1810,403 1808,403 1808,405 1804,405 1804,403 1802,403 1802,401 1800,401 1800,397 1802,397 1802,395 1804,395" fill="#ffa500"/>
<polygon points="1812,453 1816,453 1816,455 1818,455 1818,457 1820,457 1820,461 1818,461 1818,463 1816,463 1816,465 1812,465 1812,463 1810,463 1810,461 1808,461 1808,457 1810,457 1810,455 1812,455" fill="#ffa500"/>
<polygon points="1820,501 1824,501 1824,503 1826,503 1826,505 1828,505 1828,509 1826,509 1826,511 1824,511 1824,513 1820,513 1820,511 1818,511 1818,509 1816,509 1816,505 1818,505 1818,503 1820,503" fill="#ffa500"/>
<polygon points="1828,413 1832,413 1832,415 1834,415 1834,417 1836,417 1836,421 1834,421 1834,423 1832,423 1832,425 1828,425 1828,423 1826,423 1826,421 1824,421 1824,417 1826,417 1826,415 1828,415" fill="#ff0000"/>
<polygon points="1836,409 1840,409 1840,411 1842,411 1842,413 1844,413 1844,417 1842,417 1842,419 1840,419 1840,421 1836,421 1836,419 1834,419 1834,417 1832,417 1832,413 1834,413 1834,411 1836,411" fill="#ffa500"/>
<polygon points="1844,365 1848,365 1848,367 1850,367 1850,369 1852,369 1852,373 1850,373 1850,375 1848,375 1848,377 1844,377 1844,375 1842,375 1842,373 1840,373 1840,369 1842,369 1842,367 1844,367" fill="#ffa500"/>
<polygon points="1852,218 1856,218 1856,220 1858,220 1858,222 1860,222 1860,226 1858,226 1858,228 1856,228 1856,230 1852,230 1852,228 1850,228 1850,226 1848,226 1848,222 1850,222 1850,220 1852,220" fill="#ffa500"/>
<polygon points="1860,376 1864,376 1864,378 1866,378 1866,380 1868,380 1868,384 1866,384 1866,386 1864,386 1864,388 1860,388 1860,386 1858,386 1858,384 1856,384 1856,380 1858,380 1858,378 1860,378" fill="#ffa500"/>
<polygon points="1868,239 1872,239 1872,241 1874,241 1874,243 1876,243 1876,247 1874,247 1874,249 1872,249 1872,251 1868,251 1868,249 1866,249 1866,247 1864,247 1864,243 1866,243 1866,241 1868,241" fill="#ffa500"/>
<polygon points="1876,322 1880,322 1880,324 1882,324 1882,326 1884,326 1884,330 1882,330 1882,332 1880,332 1880,334 1876,334 1876,332 1874,332 1874,330 1872,330 1872,326 1874,326 1874,324 1876,324" fill="#ffa500"/>
<polygon points="1884,566 1888,566 1888,568 1890,568 1890,570 1892,570 1892,574 1890,574 1890,576 1888,576 1888,578 1884,578 1884,576 1882,576 1882,574 1880,574 1880,570 1882,570 1882,568 1884,568" fill="#ffa500"/>
<polygon points="1892,430 1896,430 1896,432 1898,432 1898,434 1900,434 1900,438 1898,438 1898,440 1896,440 1896,442 1892,442 1892,440 1890,440 1890,438 1888,438 1888,434 1890,434 1890,432 1892,432" fill="#ffa500"/>
<polygon points="1900,351 1904,351 1904,353 1906,353 1906,355 1908,355 1908,359 1906,359 1906,361 1904,361 1904,363 1900,363 1900,361 1898,361 1898,359 1896,359 1896,355 1898,355 1898,353 1900,353" fill="#ffa500"/>
<polygon points="1908,430 1912,430 1912,432 1914,432 1914,434 1916,434 1916,438 1914,438 1914,440 1912,440 1912,442 1908,442 1908,440 1906,440 1906,438 1904,438 1904,434 1906,434 1906,432 1908,432" fill="#ffa500"/>
<polygon points="1916,438 1920,438 1920,440 1922,440 1922,442 1924,442 1924,446 1922,446 1922,448 1920,448 1920,450 1916,450 1916,448 1914,448 1914,446 1912,446 1912,442 1914,442 1914,440 1916,440" fill="#ffa500"/>
<polygon points="1924,376 1928,376 1928,378 1930,378 1930,380 1932,380 1932,384 1930,384 1930,386 1928,386 1928,388 1924,388 1924,386 1922,386 1922,384 1920,384 1920,380 1922,380 1922,378 1924,378" fill="#ffa500"/>
<polygon points="1932,506 1936,506 1936,508 1938,508 1938,510 1940,510 1940,514 1938,514 1938,516 1936,516 1936,518 1932,518 1932,516 1930,516 1930,514 1928,514 1928,510 1930,510 1930,508 1932,508" fill="#ffa500"/>
<polygon points="1940,396 1944,396 1944,398 1946,398 1946,400 1948,400 1948,404 1946,404 1946,406 1944,406 1944,408 1940,408 1940,406 1938,406 1938,404 1936,404 1936,400 1938,400 1938,398 1940,398" fill="#ffa500"/>
<polygon points="1948,546 1952,546 1952,548 1954,548 1954,550 1956,550 1956,554 1954,554 1954,556 1952,556 1952,558 1948,558 1948,556 1946,556 1946,554 1944,554 1944,550 1946,550 1946,548 1948,548" fill="#ffa500"/>
<polygon points="1956,446 1960,446 1960,448 1962,448 1962,450 1964,450 1964,454 1962,454 1962,456 1960,456 1960,458 1956,458 1956,456 1954,456 1954,454 1952,454 1952,450 1954,450 1954,448 1956,448" fill="#ffa500"/>
<polygon points="1964,404 1968,404 1968,406 1970,406 1970,408 1972,408 1972,412 1970,412 1970,414 1968,414 1968,416 1964,416 1964,414 1962,414 1962,412 1960,412 1960,408 1962,408 1962,406 1964,406" fill="#ffa500"/>
<polygon points="1972,504 1976,504 1976,506 1978,506 1978,508 1980,508 1980,512 1978,512 1978,514 1976,514 1976,516 1972,516 1972,514 1970,514 1970,512 1968,512 1968,508 1970,508 1970,506 1972,506" fill="#ffa500"/>
<polygon points="1980,559 1984,559 1984,561 1986,561 1986,563 1988,563 1988,567 1986,567 1986,569 1984,569 1984,571 1980,571 1980,569 1978,569 1978,567 1976,567 1976,563 1978,563 1978,561 1980,561" fill="#ffa500"/>
<polygon points="1988,504 1992,504 1992,506 1994,506 1994,508 1996,508 1996,512 1994,512 1994,514 1992,514 1992,516 1988,516 1988,514 1986,514 1986,512 1984,512 1984,508 1986,508 1986,506 1988,506" fill="#ffa500"/>
<polygon points="1996,436 2000,436 2000,438 2002,438 2002,440 2004,440 2004,444 2002,444 2002,446 2000,446 2000,448 1996,448 1996,446 1994,446 1994,444 1992,444 1992,440 1994,440 1994,438 1996,438" fill="#ffa500"/>
<polygon points="2004,374 2008,374 2008,376 2010,376 2010,378 2012,378 2012,382 2010,382 2010,384 2008,384 2008,386 2004,386 2004,384 2002,384 2002,382 2000,382 2000,378 2002,378 2002,376 2004,376" fill="#ffa500"/>
<polygon points="2012,414 2016,414 2016,416 2018,416 2018,418 2020,418 2020,422 2018,422 2018,424 2016,424 2016,426 2012,426 2012,424 2010,424 2010,422 2008,422 2008,418 2010,418 2010,416 2012,416" fill="#ffa500"/>
<polygon points="2020,463 2024,463 2024,465 2026,465 2026,467 2028,467 2028,471 2026,471 2026,473 2024,473 2024,475 2020,475 2020,473 2018,473 2018,471 2016,471 2016,467 2018,467 2018,465 2020,465" fill="#ffa500"/>
<polygon points="2028,483 2032,483 2032,485 2034,485 2034,487 2036,487 2036,491 2034,491 2034,493 2032,493 2032,495 2028,495 2028,493 2026,493 2026,491 2024,491 2024,487 2026,487 2026,485 2028,485" fill="#ffa500"/>
<polygon points="2036,393 2040,393 2040,395 2042,395 2042,397 2044,397 2044,401 2042,401 2042,403 2040,403 2040,405 2036,405 2036,403 2034,403 2034,401 2032,401 2032,397 2034,397 2034,395 2036,395" fill="#ffa500"/>
<polygon points="2044,416 2048,416 2048,418 2050,418 2050,420 2052,420 2052,424 2050,424 2050,426 2048,426 2048,428 2044,428 2044,426 2042,426 2042,424 2040,424 2040,420 2042,420 2042,418 2044,418" fill="#ffa500"/>
<polygon points="2052,388 2056,388 2056,390 2058,390 2058,392 2060,392 2060,396 2058,396 2058,398 2056,398 2056,400 2052,400 2052,398 2050,398 2050,396 2048,396 2048,392 2050,392 2050,390 2052,390" fill="#ffa500"/>
<polygon points="2060,398 2064,398 2064,400 2066,400 2066,402 2068,402 2068,406 2066,406 2066,408 2064,408 2064,410 2060,410 2060,408 2058,408 2058,406 2056,406 2056,402 2058,402 2058,400 2060,400" fill="#ffa500"/>
<polygon points="2068,428 2072,428 2072,430 2074,430 2074,432 2076,432 2076,436 2074,436 2074,438 2072,438 2072,440 2068,440 2068,438 2066,438 2066,436 2064,436 2064,432 2066,432 2066,430 2068,430" fill="#ffa500"/>
<polygon points="2076,413 2080,413 2080,415 2082,415 2082,417 2084,417 2084,421 2082,421 2082,423 2080,423 2080,425 2076,425 2076,423 2074,423 2074,421 2072,421 2072,417 2074,417 2074,415 2076,415" fill="#ffa500"/>
<polygon points="2084,351 2088,351 2088,353 2090,353 2090,355 2092,355 2092,359 2090,359 2090,361 2088,361 2088,363 2084,363 2084,361 2082,361 2082,359 2080,359 2080,355 2082,355 2082,353 2084,353" fill="#ffa500"/>
<polygon points="2092,348 2096,348 2096,350 2098,350 2098,352 2100,352 2100,356 2098,356 2098,358 2096,358 2096,360 2092,360 2092,358 2090,358 2090,356 2088,356 2088,352 2090,352 2090,350 2092,350" fill="#ffa500"/>
<polygon points="2100,381 2104,381 2104,383 2106,383 2106,385 2108,385 2108,389 2106,389 2106,391 2104,391 2104,393 2100,393 2100,391 2098,391 2098,389 2096,389 2096,385 2098,385 2098,383 2100,383" fill="#ffa500"/>
<polygon points="2108,444 2112,444 2112,446 2114,446 2114,448 2116,448 2116,452 2114,452 2114,454 2112,454 2112,456 2108,456 2108,454 2106,454 2106,452 2104,452 2104,448 2106,448 2106,446 2108,446" fill="#ffa500"/>
<polygon points="2116,514 2120,514 2120,516 2122,516 2122,518 2124,518 2124,522 2122,522 2122,524 2120,524 2120,526 2116,526 2116,524 2114,524 2114,522 2112,522 2112,518 2114,518 2114,516 2116,516" fill="#ffa500"/>
<polygon points="2124,500 2128,500 2128,502 2130,502 2130,504 2132,504 2132,508 2130,508 2130,510 2128,510 2128,512 2124,512 2124,510 2122,510 2122,508 2120,508 2120,504 2122,504 2122,502 2124,502" fill="#ffa500"/>
<polygon points="2132,505 2136,505 2136,507 2138,507 2138,509 2140,509 2140,513 2138,513 2138,515 2136,515 2136,517 2132,517 2132,515 2130,515 2130,513 2128,513 2128,509 2130,509 2130,507 2132,507" fill="#ffa500"/>
<polygon points="2140,494 2144,494 2144,496 2146,496 2146,498 2148,498 2148,502 2146,502 2146,504 2144,504 2144,506 2140,506 2140,504 2138,504 2138,502 2136,502 2136,498 2138,498 2138,496 2140,496" fill="#ffa500"/>
<polygon points="2148,514 2152,514 2152,516 2154,516 2154,518 2156,518 2156,522 2154,522 2154,524 2152,524 2152,526 2148,526 2148,524 2146,524 2146,522 2144,522 2144,518 2146,518 2146,516 2148,516" fill="#ffa500"/>
<polygon points="2156,458 2160,458 2160,460 2162,460 2162,462 2164,462 2164,466 2162,466 2162,468 2160,468 2160,470 2156,470 2156,468 2154,468 2154,466 2152,466 2152,462 2154,462 2154,460 2156,460" fill="#ffa500"/>
<polygon points="2164,482 2168,482 2168,484 2170,484 2170,486 2172,486 2172,490 2170,490 2170,492 2168,492 2168,494 2164,494 2164,492 2162,492 2162,490 2160,490 2160,486 2162,486 2162,484 2164,484" fill="#ffa500"/>
<polygon points="2172,396 2176,396 2176,398 2178,398 2178,400 2180,400 2180,404 2178,404 2178,406 2176,406 2176,408 2172,408 2172,406 2170,406 2170,404 2168,404 2168,400 2170,400 2170,398 2172,398" fill="#ffa500"/>
<polygon points="2180,401 2184,401 2184,403 2186,403 2186,405 2188,405 2188,409 2186,409 2186,411 2184,411 2184,413 2180,413 2180,411 2178,411 2178,409 2176,409 2176,405 2178,405 2178,403 2180,403" fill="#ffa500"/>
<polygon points="2188,543 2192,543 2192,545 2194,545 2194,547 2196,547 2196,551 2194,551 2194,553 2192,553 2192,555 2188,555 2188,553 2186,553 2186,551 2184,551 2184,547 2186,547 2186,545 2188,545" fill="#ffa500"/>
<polygon points="2196,574 2200,574 2200,576 2202,576 2202,578 2204,578 2204,582 2202,582 2202,584 2200,584 2200,586 2196,586 2196,584 2194,584 2194,582 2192,582 2192,578 2194,578 2194,576 2196,576" fill="#ffa500"/>
<polygon points="2204,494 2208,494 2208,496 2210,496 2210,498 2212,498 2212,502 2210,502 2210,504 2208,504 2208,506 2204,506 2204,504 2202,504 2202,502 2200,502 2200,498 2202,498 2202,496 2204,496" fill="#ffa500"/>
<polygon points="2212,506 2216,506 2216,508 2218,508 2218,510 2220,510 2220,514 2218,514 2218,516 2216,516 2216,518 2212,518 2212,516 2210,516 2210,514 2208,514 2208,510 2210,510 2210,508 2212,508" fill="#ffa500"/>
<polygon points="2220,438 2224,438 2224,440 2226,440 2226,442 2228,442 2228,446 2226,446 2226,448 2224,448 2224,450 2220,450 2220,448 2218,448 2218,446 2216,446 2216,442 2218,442 2218,440 2220,440" fill="#ffa500"/>
<polygon points="2228,548 2232,548 2232,550 2234,550 2234,552 2236,552 2236,556 2234,556 2234,558 2232,558 2232,560 2228,560 2228,558 2226,558 2226,556 2224,556 2224,552 2226,552 2226,550 2228,550" fill="#ffa500"/>
<polygon points="2236,468 2240,468 2240,470 2242,470 2242,472 2244,472 2244,476 2242,476 2242,478 2240,478 2240,480 2236,480 2236,478 2234,478 2234,476 2232,476 2232,472 2234,472 2234,470 2236,470" fill="#ffa500"/>
<polygon points="2244,462 2248,462 2248,464 2250,464 2250,466 2252,466 2252,470 2250,470 2250,472 2248,472 2248,474 2244,474 2244,472 2242,472 2242,470 2240,470 2240,466 2242,466 2242,464 2244,464" fill="#ffa500"/>
<polygon points="2252,462 2256,462 2256,464 2258,464 2258,466 2260,466 2260,470 2258,470 2258,472 2256,472 2256,474 2252,474 2252,472 2250,472 2250,470 2248,470 2248,466 2250,466 2250,464 2252,464" fill="#ffa500"/>
<polygon points="2260,521 2264,521 2264,523 2266,523 2266,525 2268,525 2268,529 2266,529 2266,531 2264,531 2264,533 2260,533 2260,531 2258,531 2258,529 2256,529 2256,525 2258,525 2258,523 2260,523" fill="#ffa500"/>
<polygon points="2268,521 2272,521 2272,523 2274,523 2274,525 2276,525 2276,529 2274,529 2274,531 2272,531 2272,533 2268,533 2268,531 2266,531 2266,529 2264,529 2264,525 2266,525 2266,523 2268,523" fill="#ffa500"/>
<polygon points="2276,463 2280,463 2280,465 2282,465 2282,467 2284,467 2284,471 2282,471 2282,473 2280,473 2280,475 2276,475 2276,473 2274,473 2274,471 2272,471 2272,467 2274,467 2274,465 2276,465" fill="#ffa500"/>
<polygon points="2284,498 2288,498 2288,500 2290,500 2290,502 2292,502 2292,506 2290,506 2290,508 2288,508 2288,510 2284,510 2284,508 2282,508 2282,506 2280,506 2280,502 2282,502 2282,500 2284,500" fill="#ffa500"/>
<polygon points="2292,506 2296,506 2296,508 2298,508 2298,510 2300,510 2300,514 2298,514 2298,516 2296,516 2296,518 2292,518 2292,516 2290,516 2290,514 2288,514 2288,510 2290,510 2290,508 2292,508" fill="#ffa500"/>
<polygon points="2300,532 2304,532 2304,534 2306,534 2306,536 2308,536 2308,540 2306,540 2306,542 2304,542 2304,544 2300,544 2300,542 2298,542 2298,540 2296,540 2296,536 2298,536 2298,534 2300,534" fill="#ffa500"/>
<polygon points="2308,418 2312,418 2312,420 2314,420 2314,422 2316,422 2316,426 2314,426 2314,428 2312,428 2312,430 2308,430 2308,428 2306,428 2306,426 2304,426 2304,422 2306,422 2306,420 2308,420" fill="#ffa500"/>
<polygon points="2316,486 2320,486 2320,488 2322,488 2322,490 2324,490 2324,494 2322,494 2322,496 2320,496 2320,498 2316,498 2316,496 2314,496 2314,494 2312,494 2312,490 2314,490 2314,488 2316,488" fill="#ffa500"/>
<polygon points="2324,489 2328,489 2328,491 2330,491 2330,493 2332,493 2332,497 2330,497 2330,499 2328,499 2328,501 2324,501 2324,499 2322,499 2322,497 2320,497 2320,493 2322,493 2322,491 2324,491" fill="#ffa500"/>
<polygon points="2332,476 2336,476 2336,478 2338,478 2338,480 2340,480 2340,484 2338,484 2338,486 2336,486 2336,488 2332,488 2332,486 2330,486 2330,484 2328,484 2328,480 2330,480 2330,478 2332,478" fill="#ffa500"/>
<polygon points="2340,520 2344,520 2344,522 2346,522 2346,524 2348,524 2348,528 2346,528 2346,530 2344,530 2344,532 2340,532 2340,530 2338,530 2338,528 2336,528 2336,524 2338,524 2338,522 2340,522" fill="#ffa500"/>
<polygon points="2348,436 2352,436 2352,438 2354,438 2354,440 2356,440 2356,444 2354,444 2354,446 2352,446 2352,448 2348,448 2348,446 2346,446 2346,444 2344,444 2344,440 2346,440 2346,438 2348,438" fill="#ffa500"/>
<polygon points="2356,423 2360,423 2360,425 2362,425 2362,427 2364,427 2364,431 2362,431 2362,433 2360,433 2360,435 2356,435 2356,433 2354,433 2354,431 2352,431 2352,427 2354,427 2354,425 2356,425" fill="#ffa500"/>
<polygon points="2364,466 2368,466 2368,468 2370,468 2370,470 2372,470 2372,474 2370,474 2370,476 2368,476 2368,478 2364,478 2364,476 2362,476 2362,474 2360,474 2360,470 2362,470 2362,468 2364,468" fill="#ffa500"/>
<polygon points="2372,474 2376,474 2376,476 2378,476 2378,478 2380,478 2380,482 2378,482 2378,484 2376,484 2376,486 2372,486 2372,484 2370,484 2370,482 2368,482 2368,478 2370,478 2370,476 2372,476" fill="#ffa500"/>
<polygon points="2380,403 2384,403 2384,405 2386,405 2386,407 2388,407 2388,411 2386,411 2386,413 2384,413 2384,415 2380,415 2380,413 2378,413 2378,411 2376,411 2376,407 2378,407 2378,405 2380,405" fill="#ffa500"/>
<polygon points="2388,436 2392,436 2392,438 2394,438 2394,440 2396,440 2396,444 2394,444 2394,446 2392,446 2392,448 2388,448 2388,446 2386,446 2386,444 2384,444 2384,440 2386,440 2386,438 2388,438" fill="#ffa500"/>
<polygon points="2396,443 2400,443 2400,445 2402,445 2402,447 2404,447 2404,451 2402,451 2402,453 2400,453 2400,455 2396,455 2396,453 2394,453 2394,451 2392,451 2392,447 2394,447 2394,445 2396,445" fill="#ffa500"/>
<polygon points="2404,450 2408,450 2408,452 2410,452 2410,454 2412,454 2412,458 2410,458 2410,460 2408,460 2408,462 2404,462 2404,460 2402,460 2402,458 2400,458 2400,454 2402,454 2402,452 2404,452" fill="#ffa500"/>
<polygon points="2412,423 2416,423 2416,425 2418,425 2418,427 2420,427 2420,431 2418,431 2418,433 2416,433 2416,435 2412,435 2412,433 2410,433 2410,431 2408,431 2408,427 2410,427 2410,425 2412,425" fill="#ffa500"/>
<polygon points="2420,470 2424,470 2424,472 2426,472 2426,474 2428,474 2428,478 2426,478 2426,480 2424,480 2424,482 2420,482 2420,480 2418,480 2418,478 2416,478 2416,474 2418,474 2418,472 2420,472" fill="#ffa500"/>
<polygon points="2428,504 2432,504 2432,506 2434,506 2434,508 2436,508 2436,512 2434,512 2434,514 2432,514 2432,516 2428,516 2428,514 2426,514 2426,512 2424,512 2424,508 2426,508 2426,506 2428,506" fill="#ffa500"/>
<polygon points="2436,448 2440,448 2440,450 2442,450 2442,452 2444,452 2444,456 2442,456 2442,458 2440,458 2440,460 2436,460 2436,458 2434,458 2434,456 2432,456 2432,452 2434,452 2434,450 2436,450" fill="#ffa500"/>
<polygon points="2444,478 2448,478 2448,480 2450,480 2450,482 2452,482 2452,486 2450,486 2450,488 2448,488 2448,490 2444,490 2444,488 2442,488 2442,486 2440,486 2440,482 2442,482 2442,480 2444,480" fill="#ffa500"/>
<polygon points="2452,433 2456,433 2456,435 2458,435 2458,437 2460,437 2460,441 2458,441 2458,443 2456,443 2456,445 2452,445 2452,443 2450,443 2450,441 2448,441 2448,437 2450,437 2450,435 2452,435" fill="#ffa500"/>
<polygon points="2460,383 2464,383 2464,385 2466,385 2466,387 2468,387 2468,391 2466,391 2466,393 2464,393 2464,395 2460,395 2460,393 2458,393 2458,391 2456,391 2456,387 2458,387 2458,385 2460,385" fill="#ffa500"/>
<polygon points="2468,416 2472,416 2472,418 2474,418 2474,420 2476,420 2476,424 2474,424 2474,426 2472,426 2472,428 2468,428 2468,426 2466,426 2466,424 2464,424 2464,420 2466,420 2466,418 2468,418" fill="#ffa500"/>
<polygon points="2476,386 2480,386 2480,388 2482,388 2482,390 2484,390 2484,394 2482,394 2482,396 2480,396 2480,398 2476,398 2476,396 2474,396 2474,394 2472,394 2472,390 2474,390 2474,388 2476,388" fill="#ffa500"/>
<polygon points="2484,458 2488,458 2488,460 2490,460 2490,462 2492,462 2492,466 2490,466 2490,468 2488,468 2488,470 2484,470 2484,468 2482,468 2482,466 2480,466 2480,462 2482,462 2482,460 2484,460" fill="#ffa500"/>
<polygon points="2492,456 2496,456 2496,458 2498,458 2498,460 2500,460 2500,464 2498,464 2498,466 2496,466 2496,468 2492,468 2492,466 2490,466 2490,464 2488,464 2488,460 2490,460 2490,458 2492,458" fill="#ffa500"/>
<polygon points="2500,472 2504,472 2504,474 2506,474 2506,476 2508,476 2508,480 2506,480 2506,482 2504,482 2504,484 2500,484 2500,482 2498,482 2498,480 2496,480 2496,476 2498,476 2498,474 2500,474" fill="#ffa500"/>
<polygon points="2508,478 2512,478 2512,480 2514,480 2514,482 2516,482 2516,486 2514,486 2514,488 2512,488 2512,490 2508,490 2508,488 2506,488 2506,486 2504,486 2504,482 2506,482 2506,480 2508,480" fill="#ffa500"/>
<polygon points="2516,486 2520,486 2520,488 2522,488 2522,490 2524,490 2524,494 2522,494 2522,496 2520,496 2520,498 2516,498 2516,496 2514,496 2514,494 2512,494 2512,490 2514,490 2514,488 2516,488" fill="#ffa500"/>
<polygon points="2524,379 2528,379 2528,381 2530,381 2530,383 2532,383 2532,387 2530,387 2530,389 2528,389 2528,391 2524,391 2524,389 2522,389 2522,387 2520,387 2520,383 2522,383 2522,381 2524,381" fill="#ffa500"/>
<polygon points="2532,502 2536,502 2536,504 2538,504 2538,506 2540,506 2540,510 2538,510 2538,512 2536,512 2536,514 2532,514 2532,512 2530,512 2530,510 2528,510 2528,506 2530,506 2530,504 2532,504" fill="#ffa500"/>
<polyline points="1542,226.9 1550,96.8 1558,136.9 1566,106.6 1574,252.3 1582,164.3 1590,265 1598,154.5 1606,324.6 1614,274.7 1622,152.6 1630,144.7 1638,180.9 1646,128.7 1654,332.4 1662,174.5 1670,272.8 1678,214.7 1686,312.9 1694,262.4 1702,232.7 1710,238.6 1718,106.6 1726,164.3 1734,212.8 1742,214.7 1750,124.8 1758,292.9 1766,246.4 1774,223 1782,146.7 1790,124.8 1798,106.6 1806,142.8 1814,182.9 1822,388.8 1830,186.8 1838,124.8 1846,302.7 1854,322.6 1862,428.8 1870,358.8 1878,516.3 1886,466.3 1894,524.5 1902,506.3 1910,474.5 1918,564.5 1926,528 1934,570.5 1942,483 1950,562.5 1958,598.8 1966,492.5 1974,464.5 1982,554.5 1990,550.5 1998,502.5 2006,438.8 2014,360.5 2022,432.5 2030,458.8 2038,292.9 2046,321.1 2054,186.8 2062,214.7 2070,214.7 2078,233.1 2086,226.9 2094,230.8 2102,195 2110,132.6 2118,170.5 2126,206.9 2134,179 2142,272.8 2150,212.8 2158,182.9 2166,188.7 2174,336 2182,226.9 2190,353 2198,368.8 2206,236.6 2214,276.7 2222,276.7 2230,348.8 2238,228.8 2246,216.7 2254,208.3 2262,234.7 2270,234.7 2278,258.5 2286,308.6 2294,232.7 2302,252.3 2310,248.7 2318,310.8 2326,254.6 2334,289 2342,226.8 2350,218.6 2358,252.6 2366,276.6 2374,262.4 2382,203 2390,276.6 2398,266.9 2406,266.9 2414,271.4 2422,224.8 2430,160.7 2438,304.6 2446,240.5 2454,300.7 2462,208.8 2470,151 2478,238.9 2486,214.7 2494,270.8 2502,274.7 2510,268.8 2518,276.6 2526,252.6 2534,289" fill="none" stroke="#8080ff" stroke-width="2"/>
<polygon points="1540,221 1544,221 1544,223 1546,223 1546,225 1548,225 1548,229 1546,229 1546,231 1544,231 1544,233 1540,233 1540,231 1538,231 1538,229 1536,229 1536,225 1538,225 1538,223 1540,223" fill="#0000ff"/>
<polygon points="1548,91 1552,91 1552,93 1554,93 1554,95 1556,95 1556,99 1554,99 1554,101 1552,101 1552,103 1548,103 1548,101 1546,101 1546,99 1544,99 1544,95 1546,95 1546,93 1548,93" fill="#0000ff"/>
<polygon points="1556,131 1560,131 1560,133 1562,133 1562,135 1564,135 1564,139 1562,139 1562,141 1560,141 1560,143 1556,143 1556,141 1554,141 1554,139 1552,139 1552,135 1554,135 1554,133 1556,133" fill="#0000ff"/>
<polygon points="1564,101 1568,101 1568,103 1570,103 1570,105 1572,105 1572,109 1570,109 1570,111 1568,111 1568,113 1564,113 1564,111 1562,111 1562,109 1560,109 1560,105 1562,105 1562,103 1564,103" fill="#0000ff"/>
<polygon points="1572,246 1576,246 1576,248 1578,248 1578,250 1580,250 1580,254 1578,254 1578,256 1576,256 1576,258 1572,258 1572,256 1570,256 1570,254 1568,254 1568,250 1570,250 1570,248 1572,248" fill="#0000ff"/>
<polygon points="1580,158 1584,158 1584,160 1586,160 1586,162 1588,162 1588,166 1586,166 1586,168 1584,168 1584,170 1580,170 1580,168 1578,168 1578,166 1576,166 1576,162 1578,162 1578,160 1580,160" fill="#0000ff"/>
<polygon points="1588,259 1592,259 1592,261 1594,261 1594,263 1596,263 1596,267 1594,267 1594,269 1592,269 1592,271 1588,271 1588,269 1586,269 1586,267 1584,267 1584,263 1586,263 1586,261 1588,261" fill="#0000ff"/>
<polygon points="1596,148 1600,148 1600,150 1602,150 1602,152 1604,152 1604,156 1602,156 1602,158 1600,158 1600,160 1596,160 1596,158 1594,158 1594,156 1592,156 1592,152 1594,152 1594,150 1596,150" fill="#0000ff"/>
<polygon points="1604,319 1608,319 1608,321 1610,321 1610,323 1612,323 1612,327 1610,327 1610,329 1608,329 1608,331 1604,331 1604,329 1602,329 1602,327 1600,327 1600,323 1602,323 1602,321 1604,321" fill="#0000ff"/>
<polygon points="1612,269 1616,269 1616,271 1618,271 1618,273 1620,273 1620,277 1618,277 1618,279 1616,279 1616,281 1612,281 1612,279 1610,279 1610,277 1608,277 1608,273 1610,273 1610,271 1612,271" fill="#0000ff"/>
<polygon points="1620,147 1624,147 1624,149 1626,149 1626,151 1628,151 1628,155 1626,155 1626,157 1624,157 1624,159 1620,159 1620,157 1618,157 1618,155 1616,155 1616,151 1618,151 1618,149 1620,149" fill="#0000ff"/>
<polygon points="1628,139 1632,139 1632,141 1634,141 1634,143 1636,143 1636,147 1634,147 1634,149 1632,149 1632,151 1628,151 1628,149 1626,149 1626,147 1624,147 1624,143 1626,143 1626,141 1628,141" fill="#0000ff"/>
<polygon points="1636,175 1640,175 1640,177 1642,177 1642,179 1644,179 1644,183 1642,183 1642,185 1640,185 1640,187 1636,187 1636,185 1634,185 1634,183 1632,183 1632,179 1634,179 1634,177 1636,177" fill="#0000ff"/>
<polygon points="1644,123 1648,123 1648,125 1650,125 1650,127 1652,127 1652,131 1650,131 1650,133 1648,133 1648,135 1644,135 1644,133 1642,133 1642,131 1640,131 1640,127 1642,127 1642,125 1644,125" fill="#0000ff"/>
<polygon points="1652,326 1656,326 1656,328 1658,328 1658,330 1660,330 1660,334 1658,334 1658,336 1656,336 1656,338 1652,338 1652,336 1650,336 1650,334 1648,334 1648,330 1650,330 1650,328 1652,328" fill="#0000ff"/>
<polygon points="1660,168 1664,168 1664,170 1666,170 1666,172 1668,172 1668,176 1666,176 1666,178 1664,178 1664,180 1660,180 1660,178 1658,178 1658,176 1656,176 1656,172 1658,172 1658,170 1660,170" fill="#0000ff"/>
<polygon points="1668,267 1672,267 1672,269 1674,269 1674,271 1676,271 1676,275 1674,275 1674,277 1672,277 1672,279 1668,279 1668,277 1666,277 1666,275 1664,275 1664,271 1666,271 1666,269 1668,269" fill="#0000ff"/>
<polygon points="1676,209 1680,209 1680,211 1682,211 1682,213 1684,213 1684,217 1682,217 1682,219 1680,219 1680,221 1676,221 1676,219 1674,219 1674,217 1672,217 1672,213 1674,213 1674,211 1676,211" fill="#0000ff"/>
<polygon points="1684,307 1688,307 1688,309 1690,309 1690,311 1692,311 1692,315 1690,315 1690,317 1688,317 1688,319 1684,319 1684,317 1682,317 1682,315 1680,315 1680,311 1682,311 1682,309 1684,309" fill="#0000ff"/>
<polygon points="1692,256 1696,256 1696,258 1698,258 1698,260 1700,260 1700,264 1698,264 1698,266 1696,266 1696,268 1692,268 1692,266 1690,266 1690,264 1688,264 1688,260 1690,260 1690,258 1692,258" fill="#0000ff"/>
<polygon points="1700,227 1704,227 1704,229 1706,229 1706,231 1708,231 1708,235 1706,235 1706,237 1704,237 1704,239 1700,239 1700,237 1698,237 1698,235 1696,235 1696,231 1698,231 1698,229 1700,229" fill="#0000ff"/>
<polygon points="1708,233 1712,233 1712,235 1714,235 1714,237 1716,237 1716,241 1714,241 1714,243 1712,243 1712,245 1708,245 1708,243 1706,243 1706,241 1704,241 1704,237 1706,237 1706,235 1708,235" fill="#0000ff"/>
<polygon points="1716,101 1720,101 1720,103 1722,103 1722,105 1724,105 1724,109 1722,109 1722,111 1720,111 1720,113 1716,113 1716,111 1714,111 1714,109 1712,109 1712,105 1714,105 1714,103 1716,103" fill="#0000ff"/>
<polygon points="1724,158 1728,158 1728,160 1730,160 1730,162 1732,162 1732,166 1730,166 1730,168 1728,168 1728,170 1724,170 1724,168 1722,168 1722,166 1720,166 1720,162 1722,162 1722,160 1724,160" fill="#0000ff"/>
<polygon points="1732,207 1736,207 1736,209 1738,209 1738,211 1740,211 1740,215 1738,215 1738,217 1736,217 1736,219 1732,219 1732,217 1730,217 1730,215 1728,215 1728,211 1730,211 1730,209 1732,209" fill="#0000ff"/>
<polygon points="1740,209 1744,209 1744,211 1746,211 1746,213 1748,213 1748,217 1746,217 1746,219 1744,219 1744,221 1740,221 1740,219 1738,219 1738,217 1736,217 1736,213 1738,213 1738,211 1740,211" fill="#0000ff"/>
<polygon points="1748,119 1752,119 1752,121 1754,121 1754,123 1756,123 1756,127 1754,127 1754,129 1752,129 1752,131 1748,131 1748,129 1746,129 1746,127 1744,127 1744,123 1746,123 1746,121 1748,121" fill="#0000ff"/>
<polygon points="1756,287 1760,287 1760,289 1762,289 1762,291 1764,291 1764,295 1762,295 1762,297 1760,297 1760,299 1756,299 1756,297 1754,297 1754,295 1752,295 1752,291 1754,291 1754,289 1756,289" fill="#0000ff"/>
<polygon points="1764,240 1768,240 1768,242 1770,242 1770,244 1772,244 1772,248 1770,248 1770,250 1768,250 1768,252 1764,252 1764,250 1762,250 1762,248 1760,248 1760,244 1762,244 1762,242 1764,242" fill="#0000ff"/>
<polygon points="1772,217 1776,217 1776,219 1778,219 1778,221 1780,221 1780,225 1778,225 1778,227 1776,227 1776,229 1772,229 1772,227 1770,227 1770,225 1768,225 1768,221 1770,221 1770,219 1772,219" fill="#0000ff"/>
<polygon points="1780,141 1784,141 1784,143 1786,143 1786,145 1788,145 1788,149 1786,149 1786,151 1784,151 1784,153 1780,153 1780,151 1778,151 1778,149 1776,149 1776,145 1778,145 1778,143 1780,143" fill="#0000ff"/>
<polygon points="1788,119 1792,119 1792,121 1794,121 1794,123 1796,123 1796,127 1794,127 1794,129 1792,129 1792,131 1788,131 1788,129 1786,129 1786,127 1784,127 1784,123 1786,123 1786,121 1788,121" fill="#0000ff"/>
<polygon points="1796,101 1800,101 1800,103 1802,103 1802,105 1804,105 1804,109 1802,109 1802,111 1800,111 1800,113 1796,113 1796,111 1794,111 1794,109 1792,109 1792,105 1794,105 1794,103 1796,103" fill="#0000ff"/>
<polygon points="1804,137 1808,137 1808,139 1810,139 1810,141 1812,141 1812,145 1810,145 1810,147 1808,147 1808,149 1804,149 1804,147 1802,147 1802,145 1800,145 1800,141 1802,141 1802,139 1804,139" fill="#0000ff"/>
<polygon points="1812,177 1816,177 1816,179 1818,179 1818,181 1820,181 1820,185 1818,185 1818,187 1816,187 1816,189 1812,189 1812,187 1810,187 1810,185 1808,185 1808,181 1810,181 1810,179 1812,179" fill="#0000ff"/>
<polygon points="1820,383 1824,383 1824,385 1826,385 1826,387 1828,387 1828,391 1826,391 1826,393 1824,393 1824,395 1820,395 1820,393 1818,393 1818,391 1816,391 1816,387 1818,387 1818,385 1820,385" fill="#0000ff"/>
<polygon points="1828,181 1832,181 1832,183 1834,183 1834,185 1836,185 1836,189 1834,189 1834,191 1832,191 1832,193 1828,193 1828,191 1826,191 1826,189 1824,189 1824,185 1826,185 1826,183 1828,183" fill="#ff0000"/>
<polygon points="1836,119 1840,119 1840,121 1842,121 1842,123 1844,123 1844,127 1842,127 1842,129 1840,129 1840,131 1836,131 1836,129 1834,129 1834,127 1832,127 1832,123 1834,123 1834,121 1836,121" fill="#0000ff"/>
<polygon points="1844,297 1848,297 1848,299 1850,299 1850,301 1852,301 1852,305 1850,305 1850,307 1848,307 1848,309 1844,309 1844,307 1842,307 1842,305 1840,305 1840,301 1842,301 1842,299 1844,299" fill="#0000ff"/>
<polygon points="1852,317 1856,317 1856,319 1858,319 1858,321 1860,321 1860,325 1858,325 1858,327 1856,327 1856,329 1852,329 1852,327 1850,327 1850,325 1848,325 1848,321 1850,321 1850,319 1852,319" fill="#0000ff"/>
<polygon points="1860,423 1864,423 1864,425 1866,425 1866,427 1868,427 1868,431 1866,431 1866,433 1864,433 1864,435 1860,435 1860,433 1858,433 1858,431 1856,431 1856,427 1858,427 1858,425 1860,425" fill="#0000ff"/>
<polygon points="1868,353 1872,353 1872,355 1874,355 1874,357 1876,357 1876,361 1874,361 1874,363 1872,363 1872,365 1868,365 1868,363 1866,363 1866,361 1864,361 1864,357 1866,357 1866,355 1868,355" fill="#0000ff"/>
<polygon points="1876,510 1880,510 1880,512 1882,512 1882,514 1884,514 1884,518 1882,518 1882,520 1880,520 1880,522 1876,522 1876,520 1874,520 1874,518 1872,518 1872,514 1874,514 1874,512 1876,512" fill="#0000ff"/>
<polygon points="1884,460 1888,460 1888,462 1890,462 1890,464 1892,464 1892,468 1890,468 1890,470 1888,470 1888,472 1884,472 1884,470 1882,470 1882,468 1880,468 1880,464 1882,464 1882,462 1884,462" fill="#0000ff"/>
<polygon points="1892,518 1896,518 1896,520 1898,520 1898,522 1900,522 1900,526 1898,526 1898,528 1896,528 1896,530 1892,530 1892,528 1890,528 1890,526 1888,526 1888,522 1890,522 1890,520 1892,520" fill="#0000ff"/>
<polygon points="1900,500 1904,500 1904,502 1906,502 1906,504 1908,504 1908,508 1906,508 1906,510 1904,510 1904,512 1900,512 1900,510 1898,510 1898,508 1896,508 1896,504 1898,504 1898,502 1900,502" fill="#0000ff"/>
<polygon points="1908,468 1912,468 1912,470 1914,470 1914,472 1916,472 1916,476 1914,476 1914,478 1912,478 1912,480 1908,480 1908,478 1906,478 1906,476 1904,476 1904,472 1906,472 1906,470 1908,470" fill="#0000ff"/>
<polygon points="1916,558 1920,558 1920,560 1922,560 1922,562 1924,562 1924,566 1922,566 1922,568 1920,568 1920,570 1916,570 1916,568 1914,568 1914,566 1912,566 1912,562 1914,562 1914,560 1916,560" fill="#0000ff"/>
<polygon points="1924,522 1928,522 1928,524 1930,524 1930,526 1932,526 1932,530 1930,530 1930,532 1928,532 1928,534 1924,534 1924,532 1922,532 1922,530 1920,530 1920,526 1922,526 1922,524 1924,524" fill="#0000ff"/>
<polygon points="1932,564 1936,564 1936,566 1938,566 1938,568 1940,568 1940,572 1938,572 1938,574 1936,574 1936,576 1932,576 1932,574 1930,574 1930,572 1928,572 1928,568 1930,568 1930,566 1932,566" fill="#0000ff"/>
<polygon points="1940,477 1944,477 1944,479 1946,479 1946,481 1948,481 1948,485 1946,485 1946,487 1944,487 1944,489 1940,489 1940,487 1938,487 1938,485 1936,485 1936,481 1938,481 1938,479 1940,479" fill="#0000ff"/>
<polygon points="1948,556 1952,556 1952,558 1954,558 1954,560 1956,560 1956,564 1954,564 1954,566 1952,566 1952,568 1948,568 1948,566 1946,566 1946,564 1944,564 1944,560 1946,560 1946,558 1948,558" fill="#0000ff"/>
<polygon points="1956,593 1960,593 1960,595 1962,595 1962,597 1964,597 1964,601 1962,601 1962,603 1960,603 1960,605 1956,605 1956,603 1954,603 1954,601 1952,601 1952,597 1954,597 1954,595 1956,595" fill="#0000ff"/>
<polygon points="1964,486 1968,486 1968,488 1970,488 1970,490 1972,490 1972,494 1970,494 1970,496 1968,496 1968,498 1964,498 1964,496 1962,496 1962,494 1960,494 1960,490 1962,490 1962,488 1964,488" fill="#0000ff"/>
<polygon points="1972,458 1976,458 1976,460 1978,460 1978,462 1980,462 1980,466 1978,466 1978,468 1976,468 1976,470 1972,470 1972,468 1970,468 1970,466 1968,466 1968,462 1970,462 1970,460 1972,460" fill="#0000ff"/>
<polygon points="1980,548 1984,548 1984,550 1986,550 1986,552 1988,552 1988,556 1986,556 1986,558 1984,558 1984,560 1980,560 1980,558 1978,558 1978,556 1976,556 1976,552 1978,552 1978,550 1980,550" fill="#0000ff"/>
<polygon points="1988,544 1992,544 1992,546 1994,546 1994,548 1996,548 1996,552 1994,552 1994,554 1992,554 1992,556 1988,556 1988,554 1986,554 1986,552 1984,552 1984,548 1986,548 1986,546 1988,546" fill="#0000ff"/>
<polygon points="1996,496 2000,496 2000,498 2002,498 2002,500 2004,500 2004,504 2002,504 2002,506 2000,506 2000,508 1996,508 1996,506 1994,506 1994,504 1992,504 1992,500 1994,500 1994,498 1996,498" fill="#0000ff"/>
<polygon points="2004,433 2008,433 2008,435 2010,435 2010,437 2012,437 2012,441 2010,441 2010,443 2008,443 2008,445 2004,445 2004,443 2002,443 2002,441 2000,441 2000,437 2002,437 2002,435 2004,435" fill="#0000ff"/>
<polygon points="2012,354 2016,354 2016,356 2018,356 2018,358 2020,358 2020,362 2018,362 2018,364 2016,364 2016,366 2012,366 2012,364 2010,364 2010,362 2008,362 2008,358 2010,358 2010,356 2012,356" fill="#0000ff"/>
<polygon points="2020,426 2024,426 2024,428 2026,428 2026,430 2028,430 2028,434 2026,434 2026,436 2024,436 2024,438 2020,438 2020,436 2018,436 2018,434 2016,434 2016,430 2018,430 2018,428 2020,428" fill="#0000ff"/>
<polygon points="2028,453 2032,453 2032,455 2034,455 2034,457 2036,457 2036,461 2034,461 2034,463 2032,463 2032,465 2028,465 2028,463 2026,463 2026,461 2024,461 2024,457 2026,457 2026,455 2028,455" fill="#0000ff"/>
<polygon points="2036,287 2040,287 2040,289 2042,289 2042,291 2044,291 2044,295 2042,295 2042,297 2040,297 2040,299 2036,299 2036,297 2034,297 2034,295 2032,295 2032,291 2034,291 2034,289 2036,289" fill="#0000ff"/>
<polygon points="2044,315 2048,315 2048,317 2050,317 2050,319 2052,319 2052,323 2050,323 2050,325 2048,325 2048,327 2044,327 2044,325 2042,325 2042,323 2040,323 2040,319 2042,319 2042,317 2044,317" fill="#0000ff"/>
<polygon points="2052,181 2056,181 2056,183 2058,183 2058,185 2060,185 2060,189 2058,189 2058,191 2056,191 2056,193 2052,193 2052,191 2050,191 2050,189 2048,189 2048,185 2050,185 2050,183 2052,183" fill="#0000ff"/>
<polygon points="2060,209 2064,209 2064,211 2066,211 2066,213 2068,213 2068,217 2066,217 2066,219 2064,219 2064,221 2060,221 2060,219 2058,219 2058,217 2056,217 2056,213 2058,213 2058,211 2060,211" fill="#0000ff"/>
<polygon points="2068,209 2072,209 2072,211 2074,211 2074,213 2076,213 2076,217 2074,217 2074,219 2072,219 2072,221 2068,221 2068,219 2066,219 2066,217 2064,217 2064,213 2066,213 2066,211 2068,211" fill="#0000ff"/>
<polygon points="2076,227 2080,227 2080,229 2082,229 2082,231 2084,231 2084,235 2082,235 2082,237 2080,237 2080,239 2076,239 2076,237 2074,237 2074,235 2072,235 2072,231 2074,231 2074,229 2076,229" fill="#0000ff"/>
<polygon points="2084,221 2088,221 2088,223 2090,223 2090,225 2092,225 2092,229 2090,229 2090,231 2088,231 2088,233 2084,233 2084,231 2082,231 2082,229 2080,229 2080,225 2082,225 2082,223 2084,223" fill="#0000ff"/>
<polygon points="2092,225 2096,225 2096,227 2098,227 2098,229 2100,229 2100,233 2098,233 2098,235 2096,235 2096,237 2092,237 2092,235 2090,235 2090,233 2088,233 2088,229 2090,229 2090,227 2092,227" fill="#0000ff"/>
<polygon points="2100,189 2104,189 2104,191 2106,191 2106,193 2108,193 2108,197 2106,197 2106,199 2104,199 2104,201 2100,201 2100,199 2098,199 2098,197 2096,197 2096,193 2098,193 2098,191 2100,191" fill="#0000ff"/>
<polygon points="2108,127 2112,127 2112,129 2114,129 2114,131 2116,131 2116,135 2114,135 2114,137 2112,137 2112,139 2108,139 2108,137 2106,137 2106,135 2104,135 2104,131 2106,131 2106,129 2108,129" fill="#0000ff"/>
<polygon points="2116,164 2120,164 2120,166 2122,166 2122,168 2124,168 2124,172 2122,172 2122,174 2120,174 2120,176 2116,176 2116,174 2114,174 2114,172 2112,172 2112,168 2114,168 2114,166 2116,166" fill="#0000ff"/>
<polygon points="2124,201 2128,201 2128,203 2130,203 2130,205 2132,205 2132,209 2130,209 2130,211 2128,211 2128,213 2124,213 2124,211 2122,211 2122,209 2120,209 2120,205 2122,205 2122,203 2124,203" fill="#0000ff"/>
<polygon points="2132,173 2136,173 2136,175 2138,175 2138,177 2140,177 2140,181 2138,181 2138,183 2136,183 2136,185 2132,185 2132,183 2130,183 2130,181 2128,181 2128,177 2130,177 2130,175 2132,175" fill="#0000ff"/>
<polygon points="2140,267 2144,267 2144,269 2146,269 2146,271 2148,271 2148,275 2146,275 2146,277 2144,277 2144,279 2140,279 2140,277 2138,277 2138,275 2136,275 2136,271 2138,271 2138,269 2140,269" fill="#0000ff"/>
<polygon points="2148,207 2152,207 2152,209 2154,209 2154,211 2156,211 2156,215 2154,215 2154,217 2152,217 2152,219 2148,219 2148,217 2146,217 2146,215 2144,215 2144,211 2146,211 2146,209 2148,209" fill="#0000ff"/>
<polygon points="2156,177 2160,177 2160,179 2162,179 2162,181 2164,181 2164,185 2162,185 2162,187 2160,187 2160,189 2156,189 2156,187 2154,187 2154,185 2152,185 2152,181 2154,181 2154,179 2156,179" fill="#0000ff"/>
<polygon points="2164,183 2168,183 2168,185 2170,185 2170,187 2172,187 2172,191 2170,191 2170,193 2168,193 2168,195 2164,195 2164,193 2162,193 2162,191 2160,191 2160,187 2162,187 2162,185 2164,185" fill="#0000ff"/>
<polygon points="2172,330 2176,330 2176,332 2178,332 2178,334 2180,334 2180,338 2178,338 2178,340 2176,340 2176,342 2172,342 2172,340 2170,340 2170,338 2168,338 2168,334 2170,334 2170,332 2172,332" fill="#0000ff"/>
<polygon points="2180,221 2184,221 2184,223 2186,223 2186,225 2188,225 2188,229 2186,229 2186,231 2184,231 2184,233 2180,233 2180,231 2178,231 2178,229 2176,229 2176,225 2178,225 2178,223 2180,223" fill="#0000ff"/>
<polygon points="2188,347 2192,347 2192,349 2194,349 2194,351 2196,351 2196,355 2194,355 2194,357 2192,357 2192,359 2188,359 2188,357 2186,357 2186,355 2184,355 2184,351 2186,351 2186,349 2188,349" fill="#0000ff"/>
<polygon points="2196,363 2200,363 2200,365 2202,365 2202,367 2204,367 2204,371 2202,371 2202,373 2200,373 2200,375 2196,375 2196,373 2194,373 2194,371 2192,371 2192,367 2194,367 2194,365 2196,365" fill="#0000ff"/>
<polygon points="2204,231 2208,231 2208,233 2210,233 2210,235 2212,235 2212,239 2210,239 2210,241 2208,241 2208,243 2204,243 2204,241 2202,241 2202,239 2200,239 2200,235 2202,235 2202,233 2204,233" fill="#0000ff"/>
<polygon points="2212,271 2216,271 2216,273 2218,273 2218,275 2220,275 2220,279 2218,279 2218,281 2216,281 2216,283 2212,283 2212,281 2210,281 2210,279 2208,279 2208,275 2210,275 2210,273 2212,273" fill="#0000ff"/>
<polygon points="2220,271 2224,271 2224,273 2226,273 2226,275 2228,275 2228,279 2226,279 2226,281 2224,281 2224,283 2220,283 2220,281 2218,281 2218,279 2216,279 2216,275 2218,275 2218,273 2220,273" fill="#0000ff"/>
<polygon points="2228,343 2232,343 2232,345 2234,345 2234,347 2236,347 2236,351 2234,351 2234,353 2232,353 2232,355 2228,355 2228,353 2226,353 2226,351 2224,351 2224,347 2226,347 2226,345 2228,345" fill="#0000ff"/>
<polygon points="2236,223 2240,223 2240,225 2242,225 2242,227 2244,227 2244,231 2242,231 2242,233 2240,233 2240,235 2236,235 2236,233 2234,233 2234,231 2232,231 2232,227 2234,227 2234,225 2236,225" fill="#0000ff"/>
<polygon points="2244,211 2248,211 2248,213 2250,213 2250,215 2252,215 2252,219 2250,219 2250,221 2248,221 2248,223 2244,223 2244,221 2242,221 2242,219 2240,219 2240,215 2242,215 2242,213 2244,213" fill="#0000ff"/>
<polygon points="2252,202 2256,202 2256,204 2258,204 2258,206 2260,206 2260,210 2258,210 2258,212 2256,212 2256,214 2252,214 2252,212 2250,212 2250,210 2248,210 2248,206 2250,206 2250,204 2252,204" fill="#0000ff"/>
<polygon points="2260,229 2264,229 2264,231 2266,231 2266,233 2268,233 2268,237 2266,237 2266,239 2264,239 2264,241 2260,241 2260,239 2258,239 2258,237 2256,237 2256,233 2258,233 2258,231 2260,231" fill="#0000ff"/>
<polygon points="2268,229 2272,229 2272,231 2274,231 2274,233 2276,233 2276,237 2274,237 2274,239 2272,239 2272,241 2268,241 2268,239 2266,239 2266,237 2264,237 2264,233 2266,233 2266,231 2268,231" fill="#0000ff"/>
<polygon points="2276,252 2280,252 2280,254 2282,254 2282,256 2284,256 2284,260 2282,260 2282,262 2280,262 2280,264 2276,264 2276,262 2274,262 2274,260 2272,260 2272,256 2274,256 2274,254 2276,254" fill="#0000ff"/>
<polygon points="2284,303 2288,303 2288,305 2290,305 2290,307 2292,307 2292,311 2290,311 2290,313 2288,313 2288,315 2284,315 2284,313 2282,313 2282,311 2280,311 2280,307 2282,307 2282,305 2284,305" fill="#0000ff"/>
<polygon points="2292,227 2296,227 2296,229 2298,229 2298,231 2300,231 2300,235 2298,235 2298,237 2296,237 2296,239 2292,239 2292,237 2290,237 2290,235 2288,235 2288,231 2290,231 2290,229 2292,229" fill="#0000ff"/>
<polygon points="2300,246 2304,246 2304,248 2306,248 2306,250 2308,250 2308,254 2306,254 2306,256 2304,256 2304,258 2300,258 2300,256 2298,256 2298,254 2296,254 2296,250 2298,250 2298,248 2300,248" fill="#0000ff"/>
<polygon points="2308,243 2312,243 2312,245 2314,245 2314,247 2316,247 2316,251 2314,251 2314,253 2312,253 2312,255 2308,255 2308,253 2306,253 2306,251 2304,251 2304,247 2306,247 2306,245 2308,245" fill="#0000ff"/>
<polygon points="2316,305 2320,305 2320,307 2322,307 2322,309 2324,309 2324,313 2322,313 2322,315 2320,315 2320,317 2316,317 2316,315 2314,315 2314,313 2312,313 2312,309 2314,309 2314,307 2316,307" fill="#0000ff"/>
<polygon points="2324,249 2328,249 2328,251 2330,251 2330,253 2332,253 2332,257 2330,257 2330,259 2328,259 2328,261 2324,261 2324,259 2322,259 2322,257 2320,257 2320,253 2322,253 2322,251 2324,251" fill="#0000ff"/>
<polygon points="2332,283 2336,283 2336,285 2338,285 2338,287 2340,287 2340,291 2338,291 2338,293 2336,293 2336,295 2332,295 2332,293 2330,293 2330,291 2328,291 2328,287 2330,287 2330,285 2332,285" fill="#0000ff"/>
<polygon points="2340,221 2344,221 2344,223 2346,223 2346,225 2348,225 2348,229 2346,229 2346,231 2344,231 2344,233 2340,233 2340,231 2338,231 2338,229 2336,229 2336,225 2338,225 2338,223 2340,223" fill="#0000ff"/>
<polygon points="2348,213 2352,213 2352,215 2354,215 2354,217 2356,217 2356,221 2354,221 2354,223 2352,223 2352,225 2348,225 2348,223 2346,223 2346,221 2344,221 2344,217 2346,217 2346,215 2348,215" fill="#0000ff"/>
<polygon points="2356,247 2360,247 2360,249 2362,249 2362,251 2364,251 2364,255 2362,255 2362,257 2360,257 2360,259 2356,259 2356,257 2354,257 2354,255 2352,255 2352,251 2354,251 2354,249 2356,249" fill="#0000ff"/>
<polygon points="2364,271 2368,271 2368,273 2370,273 2370,275 2372,275 2372,279 2370,279 2370,281 2368,281 2368,283 2364,283 2364,281 2362,281 2362,279 2360,279 2360,275 2362,275 2362,273 2364,273" fill="#0000ff"/>
<polygon points="2372,256 2376,256 2376,258 2378,258 2378,260 2380,260 2380,264 2378,264 2378,266 2376,266 2376,268 2372,268 2372,266 2370,266 2370,264 2368,264 2368,260 2370,260 2370,258 2372,258" fill="#0000ff"/>
<polygon points="2380,197 2384,197 2384,199 2386,199 2386,201 2388,201 2388,205 2386,205 2386,207 2384,207 2384,209 2380,209 2380,207 2378,207 2378,205 2376,205 2376,201 2378,201 2378,199 2380,199" fill="#0000ff"/>
<polygon points="2388,271 2392,271 2392,273 2394,273 2394,275 2396,275 2396,279 2394,279 2394,281 2392,281 2392,283 2388,283 2388,281 2386,281 2386,279 2384,279 2384,275 2386,275 2386,273 2388,273" fill="#0000ff"/>
<polygon points="2396,261 2400,261 2400,263 2402,263 2402,265 2404,265 2404,269 2402,269 2402,271 2400,271 2400,273 2396,273 2396,271 2394,271 2394,269 2392,269 2392,265 2394,265 2394,263 2396,263" fill="#0000ff"/>
<polygon points="2404,261 2408,261 2408,263 2410,263 2410,265 2412,265 2412,269 2410,269 2410,271 2408,271 2408,273 2404,273 2404,271 2402,271 2402,269 2400,269 2400,265 2402,265 2402,263 2404,263" fill="#0000ff"/>
<polygon points="2412,265 2416,265 2416,267 2418,267 2418,269 2420,269 2420,273 2418,273 2418,275 2416,275 2416,277 2412,277 2412,275 2410,275 2410,273 2408,273 2408,269 2410,269 2410,267 2412,267" fill="#0000ff"/>
<polygon points="2420,219 2424,219 2424,221 2426,221 2426,223 2428,223 2428,227 2426,227 2426,229 2424,229 2424,231 2420,231 2420,229 2418,229 2418,227 2416,227 2416,223 2418,223 2418,221 2420,221" fill="#0000ff"/>
<polygon points="2428,155 2432,155 2432,157 2434,157 2434,159 2436,159 2436,163 2434,163 2434,165 2432,165 2432,167 2428,167 2428,165 2426,165 2426,163 2424,163 2424,159 2426,159 2426,157 2428,157" fill="#0000ff"/>
<polygon points="2436,299 2440,299 2440,301 2442,301 2442,303 2444,303 2444,307 2442,307 2442,309 2440,309 2440,311 2436,311 2436,309 2434,309 2434,307 2432,307 2432,303 2434,303 2434,301 2436,301" fill="#0000ff"/>
<polygon points="2444,234 2448,234 2448,236 2450,236 2450,238 2452,238 2452,242 2450,242 2450,244 2448,244 2448,246 2444,246 2444,244 2442,244 2442,242 2440,242 2440,238 2442,238 2442,236 2444,236" fill="#0000ff"/>
<polygon points="2452,295 2456,295 2456,297 2458,297 2458,299 2460,299 2460,303 2458,303 2458,305 2456,305 2456,307 2452,307 2452,305 2450,305 2450,303 2448,303 2448,299 2450,299 2450,297 2452,297" fill="#0000ff"/>
<polygon points="2460,203 2464,203 2464,205 2466,205 2466,207 2468,207 2468,211 2466,211 2466,213 2464,213 2464,215 2460,215 2460,213 2458,213 2458,211 2456,211 2456,207 2458,207 2458,205 2460,205" fill="#0000ff"/>
<polygon points="2468,145 2472,145 2472,147 2474,147 2474,149 2476,149 2476,153 2474,153 2474,155 2472,155 2472,157 2468,157 2468,155 2466,155 2466,153 2464,153 2464,149 2466,149 2466,147 2468,147" fill="#0000ff"/>
<polygon points="2476,233 2480,233 2480,235 2482,235 2482,237 2484,237 2484,241 2482,241 2482,243 2480,243 2480,245 2476,245 2476,243 2474,243 2474,241 2472,241 2472,237 2474,237 2474,235 2476,235" fill="#0000ff"/>
<polygon points="2484,209 2488,209 2488,211 2490,211 2490,213 2492,213 2492,217 2490,217 2490,219 2488,219 2488,221 2484,221 2484,219 2482,219 2482,217 2480,217 2480,213 2482,213 2482,211 2484,211" fill="#0000ff"/>
<polygon points="2492,265 2496,265 2496,267 2498,267 2498,269 2500,269 2500,273 2498,273 2498,275 2496,275 2496,277 2492,277 2492,275 2490,275 2490,273 2488,273 2488,269 2490,269 2490,267 2492,267" fill="#0000ff"/>
<polygon points="2500,269 2504,269 2504,271 2506,271 2506,273 2508,273 2508,277 2506,277 2506,279 2504,279 2504,281 2500,281 2500,279 2498,279 2498,277 2496,277 2496,273 2498,273 2498,271 2500,271" fill="#0000ff"/>
<polygon points="2508,263 2512,263 2512,265 2514,265 2514,267 2516,267 2516,271 2514,271 2514,273 2512,273 2512,275 2508,275 2508,273 2506,273 2506,271 2504,271 2504,267 2506,267 2506,265 2508,265" fill="#0000ff"/>
<polygon points="2516,271 2520,271 2520,273 2522,273 2522,275 2524,275 2524,279 2522,279 2522,281 2520,281 2520,283 2516,283 2516,281 2514,281 2514,279 2512,279 2512,275 2514,275 2514,273 2516,273" fill="#0000ff"/>
<polygon points="2524,247 2528,247 2528,249 2530,249 2530,251 2532,251 2532,255 2530,255 2530,257 2528,257 2528,259 2524,259 2524,257 2522,257 2522,255 2520,255 2520,251 2522,251 2522,249 2524,249" fill="#0000ff"/>
<polygon points="2532,283 2536,283 2536,285 2538,285 2538,287 2540,287 2540,291 2538,291 2538,293 2536,293 2536,295 2532,295 2532,293 2530,293 2530,291 2528,291 2528,287 2530,287 2530,285 2532,285" fill="#0000ff"/>
</g>
<rect x="1426.0" y="918.0" width="1438.0" height="2.0" fill="#ffffff"/>
<rect x="1426.0" y="1177.0" width="1438.0" height="2.0" fill="#a0a0a0"/>
<rect x="1426.0" y="1179.0" width="1438.0" height="2.0" fill="#ffffff"/>
<text x="1441.5" y="946.4" font-size="24.5" fill="#000" textLength="87.0" lengthAdjust="spacingAndGlyphs">Current-</text>
<text x="1459.4" y="979.0" font-size="24.5" fill="#000" textLength="61.0" lengthAdjust="spacingAndGlyphs">Frame</text>
<text x="1563.4" y="946.4" font-size="24.5" fill="#000" textLength="93.0" lengthAdjust="spacingAndGlyphs">Luminous</text>
<text x="1561.9" y="979.0" font-size="24.5" fill="#000" textLength="86.0" lengthAdjust="spacingAndGlyphs">Intensity</text>
<rect x="1442.0" y="991.0" width="96.0" height="38.0" fill="#ffffff"/>
<rect x="1442.0" y="991.0" width="94.0" height="36.0" fill="#a0a0a0"/>
<rect x="1444.0" y="993.0" width="92.0" height="34.0" fill="#e3e3e3"/>
<rect x="1444.0" y="993.0" width="90.0" height="32.0" fill="#696969"/>
<rect x="1446.0" y="995.0" width="88.0" height="30.0" fill="#ffffff"/>
<text x="1449.7" y="1016.2" font-size="23.5" fill="#000" textLength="48.5" lengthAdjust="spacingAndGlyphs">583.0</text>
<rect x="1554.0" y="991.0" width="112.0" height="38.0" fill="#ffffff"/>
<rect x="1554.0" y="991.0" width="110.0" height="36.0" fill="#a0a0a0"/>
<rect x="1556.0" y="993.0" width="108.0" height="34.0" fill="#e3e3e3"/>
<rect x="1556.0" y="993.0" width="106.0" height="32.0" fill="#696969"/>
<rect x="1558.0" y="995.0" width="104.0" height="30.0" fill="#ffffff"/>
<text x="1563.4" y="1016.2" font-size="23.5" fill="#000" textLength="59.0" lengthAdjust="spacingAndGlyphs">1348.6</text>
<rect x="1680.0" y="931.5" width="320.0" height="35.5" fill="url(#dith)"/>
<rect x="1680.0" y="931.5" width="320.0" height="2.0" fill="#a0a0a0"/>
<rect x="1680.0" y="931.5" width="35.7" height="35.5" fill="#696969"/>
<rect x="1680.0" y="931.5" width="33.7" height="33.5" fill="#ffffff"/>
<rect x="1682.0" y="933.5" width="31.7" height="31.5" fill="#a0a0a0"/>
<rect x="1682.0" y="933.5" width="29.7" height="29.5" fill="#e3e3e3"/>
<rect x="1684.0" y="935.5" width="27.7" height="27.5" fill="#f0f0f0"/>
<rect x="1966.0" y="931.5" width="34.0" height="35.5" fill="#696969"/>
<rect x="1966.0" y="931.5" width="32.0" height="33.5" fill="#ffffff"/>
<rect x="1968.0" y="933.5" width="30.0" height="31.5" fill="#a0a0a0"/>
<rect x="1968.0" y="933.5" width="28.0" height="29.5" fill="#e3e3e3"/>
<rect x="1970.0" y="935.5" width="26.0" height="27.5" fill="#f0f0f0"/>
<polygon points="1694,949 1701,943 1701,955" fill="#a0a0a0"/>
<polygon points="1987,949 1980,943 1980,955" fill="#a0a0a0"/>
<rect x="1682.0" y="981.6" width="81.0" height="49.1" fill="#696969"/>
<rect x="1682.0" y="981.6" width="79.0" height="47.1" fill="#ffffff"/>
<rect x="1684.0" y="983.6" width="77.0" height="45.1" fill="#a0a0a0"/>
<rect x="1684.0" y="983.6" width="75.0" height="43.1" fill="#e3e3e3"/>
<rect x="1686.0" y="985.6" width="73.0" height="41.1" fill="#f0f0f0"/>
<text x="1689.7" y="1012.6" font-size="24.5" fill="#a0a0a0" textLength="66.0" lengthAdjust="spacingAndGlyphs">-10Sec</text>
<rect x="1770.0" y="981.6" width="66.0" height="49.1" fill="#696969"/>
<rect x="1770.0" y="981.6" width="64.0" height="47.1" fill="#ffffff"/>
<rect x="1772.0" y="983.6" width="62.0" height="45.1" fill="#a0a0a0"/>
<rect x="1772.0" y="983.6" width="60.0" height="43.1" fill="#e3e3e3"/>
<rect x="1774.0" y="985.6" width="58.0" height="41.1" fill="#f0f0f0"/>
<text x="1775.5" y="1012.6" font-size="24.5" fill="#a0a0a0" textLength="54.5" lengthAdjust="spacingAndGlyphs">-1Sec</text>
<rect x="1842.0" y="981.6" width="69.6" height="49.1" fill="#696969"/>
<rect x="1842.0" y="981.6" width="67.6" height="47.1" fill="#ffffff"/>
<rect x="1844.0" y="983.6" width="65.6" height="45.1" fill="#a0a0a0"/>
<rect x="1844.0" y="983.6" width="63.6" height="43.1" fill="#e3e3e3"/>
<rect x="1846.0" y="985.6" width="61.6" height="41.1" fill="#f0f0f0"/>
<text x="1848.0" y="1012.6" font-size="24.5" fill="#a0a0a0" textLength="60.4" lengthAdjust="spacingAndGlyphs">+1Sec</text>
<rect x="1918.0" y="981.6" width="82.0" height="49.1" fill="#696969"/>
<rect x="1918.0" y="981.6" width="80.0" height="47.1" fill="#ffffff"/>
<rect x="1920.0" y="983.6" width="78.0" height="45.1" fill="#a0a0a0"/>
<rect x="1920.0" y="983.6" width="76.0" height="43.1" fill="#e3e3e3"/>
<rect x="1922.0" y="985.6" width="74.0" height="41.1" fill="#f0f0f0"/>
<text x="1923.9" y="1012.6" font-size="24.5" fill="#a0a0a0" textLength="72.5" lengthAdjust="spacingAndGlyphs">+10Sec</text>
<text x="2013.5" y="963.0" font-size="24.5" fill="#000" textLength="54.7" lengthAdjust="spacingAndGlyphs">Scale</text>
<rect x="2090.0" y="927.0" width="44.0" height="38.4" fill="#ffffff"/>
<rect x="2090.0" y="927.0" width="42.0" height="36.4" fill="#a0a0a0"/>
<rect x="2092.0" y="929.0" width="40.0" height="34.4" fill="#e3e3e3"/>
<rect x="2092.0" y="929.0" width="38.0" height="32.4" fill="#696969"/>
<rect x="2094.0" y="931.0" width="36.0" height="30.4" fill="#ffffff"/>
<text x="2098.0" y="953.0" font-size="23.5" fill="#000">2</text>
<rect x="2138.0" y="925.5" width="34.0" height="23.6" fill="#696969"/>
<rect x="2138.0" y="925.5" width="32.0" height="21.6" fill="#ffffff"/>
<rect x="2140.0" y="927.5" width="30.0" height="19.6" fill="#a0a0a0"/>
<rect x="2140.0" y="927.5" width="28.0" height="17.6" fill="#e3e3e3"/>
<rect x="2142.0" y="929.5" width="26.0" height="15.6" fill="#f0f0f0"/>
<rect x="2138.0" y="949.1" width="34.0" height="23.6" fill="#696969"/>
<rect x="2138.0" y="949.1" width="32.0" height="21.6" fill="#ffffff"/>
<rect x="2140.0" y="951.1" width="30.0" height="19.6" fill="#a0a0a0"/>
<rect x="2140.0" y="951.1" width="28.0" height="17.6" fill="#e3e3e3"/>
<rect x="2142.0" y="953.1" width="26.0" height="15.6" fill="#f0f0f0"/>
<polygon points="2149.0,940.325 2161.0,940.325 2155.0,934.325" fill="#000"/>
<polygon points="2149.0,957.9749999999999 2161.0,957.9749999999999 2155.0,963.9749999999999" fill="#000"/>
<text x="2019.0" y="1011.0" font-size="24.5" fill="#000" textLength="67.0" lengthAdjust="spacingAndGlyphs">Radius</text>
<rect x="2090.0" y="991.5" width="44.0" height="37.5" fill="#ffffff"/>
<rect x="2090.0" y="991.5" width="42.0" height="35.5" fill="#a0a0a0"/>
<rect x="2092.0" y="993.5" width="40.0" height="33.5" fill="#e3e3e3"/>
<rect x="2092.0" y="993.5" width="38.0" height="31.5" fill="#696969"/>
<rect x="2094.0" y="995.5" width="36.0" height="29.5" fill="#ffffff"/>
<text x="2098.0" y="1016.5" font-size="23.5" fill="#000">3</text>
<rect x="2138.0" y="989.6" width="34.0" height="23.4" fill="#696969"/>
<rect x="2138.0" y="989.6" width="32.0" height="21.4" fill="#ffffff"/>
<rect x="2140.0" y="991.6" width="30.0" height="19.4" fill="#a0a0a0"/>
<rect x="2140.0" y="991.6" width="28.0" height="17.4" fill="#e3e3e3"/>
<rect x="2142.0" y="993.6" width="26.0" height="15.4" fill="#f0f0f0"/>
<rect x="2138.0" y="1013.0" width="34.0" height="23.4" fill="#696969"/>
<rect x="2138.0" y="1013.0" width="32.0" height="21.4" fill="#ffffff"/>
<rect x="2140.0" y="1015.0" width="30.0" height="19.4" fill="#a0a0a0"/>
<rect x="2140.0" y="1015.0" width="28.0" height="17.4" fill="#e3e3e3"/>
<rect x="2142.0" y="1017.0" width="26.0" height="15.4" fill="#f0f0f0"/>
<polygon points="2149.0,1004.3 2161.0,1004.3 2155.0,998.3" fill="#000"/>
<polygon points="2149.0,1021.7 2161.0,1021.7 2155.0,1027.7" fill="#000"/>
<rect x="2183.5" y="931" width="96.5" height="159.70000000000005" fill="none" stroke="#a0a0a0" stroke-width="2"/>
<rect x="2185.5" y="933" width="96.5" height="159.70000000000005" fill="none" stroke="#ffffff" stroke-width="2"/>
<rect x="2183.5" y="931" width="96.5" height="159.70000000000005" fill="none" stroke="#a0a0a0" stroke-width="2"/>
<rect x="2194.0" y="928.0" width="74.0" height="8.0" fill="#f0f0f0"/>
<text x="2198.0" y="938.7" font-size="24.5" fill="#000" textLength="66.0" lengthAdjust="spacingAndGlyphs">Y Axis</text>
<text x="2195.7" y="962.8" font-size="24.5" fill="#000" textLength="32.6" lengthAdjust="spacingAndGlyphs">Min</text>
<text x="2236.0" y="962.8" font-size="24.5" fill="#000" textLength="38.0" lengthAdjust="spacingAndGlyphs">Max</text>
<rect x="2192.6" y="966.0" width="32.4" height="115.0" fill="url(#dith)"/>
<rect x="2192.6" y="966.0" width="32.4" height="34.0" fill="#696969"/>
<rect x="2192.6" y="966.0" width="30.4" height="32.0" fill="#ffffff"/>
<rect x="2194.6" y="968.0" width="28.4" height="30.0" fill="#a0a0a0"/>
<rect x="2194.6" y="968.0" width="26.4" height="28.0" fill="#e3e3e3"/>
<rect x="2196.6" y="970.0" width="24.4" height="26.0" fill="#f0f0f0"/>
<polygon points="2201.8,986.5 2215.8,986.5 2208.8,979.5" fill="#000"/>
<rect x="2192.6" y="1006.0" width="32.4" height="33.0" fill="#696969"/>
<rect x="2192.6" y="1006.0" width="30.4" height="31.0" fill="#ffffff"/>
<rect x="2194.6" y="1008.0" width="28.4" height="29.0" fill="#a0a0a0"/>
<rect x="2194.6" y="1008.0" width="26.4" height="27.0" fill="#e3e3e3"/>
<rect x="2196.6" y="1010.0" width="24.4" height="25.0" fill="#f0f0f0"/>
<rect x="2192.6" y="1047.4" width="32.4" height="33.4" fill="#696969"/>
<rect x="2192.6" y="1047.4" width="30.4" height="31.4" fill="#ffffff"/>
<rect x="2194.6" y="1049.4" width="28.4" height="29.4" fill="#a0a0a0"/>
<rect x="2194.6" y="1049.4" width="26.4" height="27.4" fill="#e3e3e3"/>
<rect x="2196.6" y="1051.4" width="24.4" height="25.4" fill="#f0f0f0"/>
<polygon points="2201.8,1060.5 2215.8,1060.5 2208.8,1067.5" fill="#000"/>
<rect x="2237.0" y="966.0" width="34.5" height="115.0" fill="url(#dith)"/>
<rect x="2237.0" y="966.0" width="34.5" height="34.0" fill="#696969"/>
<rect x="2237.0" y="966.0" width="32.5" height="32.0" fill="#ffffff"/>
<rect x="2239.0" y="968.0" width="30.5" height="30.0" fill="#a0a0a0"/>
<rect x="2239.0" y="968.0" width="28.5" height="28.0" fill="#e3e3e3"/>
<rect x="2241.0" y="970.0" width="26.5" height="26.0" fill="#f0f0f0"/>
<polygon points="2247.25,986.5 2261.25,986.5 2254.25,979.5" fill="#000"/>
<rect x="2237.0" y="1006.0" width="34.5" height="33.0" fill="#696969"/>
<rect x="2237.0" y="1006.0" width="32.5" height="31.0" fill="#ffffff"/>
<rect x="2239.0" y="1008.0" width="30.5" height="29.0" fill="#a0a0a0"/>
<rect x="2239.0" y="1008.0" width="28.5" height="27.0" fill="#e3e3e3"/>
<rect x="2241.0" y="1010.0" width="26.5" height="25.0" fill="#f0f0f0"/>
<rect x="2237.0" y="1047.4" width="34.5" height="33.4" fill="#696969"/>
<rect x="2237.0" y="1047.4" width="32.5" height="31.4" fill="#ffffff"/>
<rect x="2239.0" y="1049.4" width="30.5" height="29.4" fill="#a0a0a0"/>
<rect x="2239.0" y="1049.4" width="28.5" height="27.4" fill="#e3e3e3"/>
<rect x="2241.0" y="1051.4" width="26.5" height="25.4" fill="#f0f0f0"/>
<polygon points="2247.25,1060.5 2261.25,1060.5 2254.25,1067.5" fill="#000"/>
<rect x="2287.5" y="931" width="119.19999999999982" height="104" fill="none" stroke="#a0a0a0" stroke-width="2"/>
<rect x="2289.5" y="933" width="119.19999999999982" height="104" fill="none" stroke="#ffffff" stroke-width="2"/>
<rect x="2287.5" y="931" width="119.19999999999982" height="104" fill="none" stroke="#a0a0a0" stroke-width="2"/>
<rect x="2298.9" y="928.0" width="47.6" height="8.0" fill="#f0f0f0"/>
<text x="2302.9" y="938.7" font-size="24.5" fill="#000" textLength="39.6" lengthAdjust="spacingAndGlyphs">Line</text>
<rect x="2302.5" y="947.0" width="22.0" height="22.0" fill="#ffffff"/>
<rect x="2302.5" y="947.0" width="20.0" height="20.0" fill="#a0a0a0"/>
<rect x="2304.5" y="949.0" width="18.0" height="18.0" fill="#e3e3e3"/>
<rect x="2304.5" y="949.0" width="16.0" height="16.0" fill="#696969"/>
<rect x="2306.5" y="951.0" width="14.0" height="14.0" fill="#ffffff"/>
<polyline points="2308.5,958 2312.5,963 2320.5,954" fill="none" stroke="#000" stroke-width="4" stroke-linecap="square"/>
<text x="2339.8" y="965.0" font-size="24.5" fill="#000" textLength="42.2" lengthAdjust="spacingAndGlyphs">Axis</text>
<rect x="2302.5" y="975.0" width="22.0" height="22.0" fill="#ffffff"/>
<rect x="2302.5" y="975.0" width="20.0" height="20.0" fill="#a0a0a0"/>
<rect x="2304.5" y="977.0" width="18.0" height="18.0" fill="#e3e3e3"/>
<rect x="2304.5" y="977.0" width="16.0" height="16.0" fill="#696969"/>
<rect x="2306.5" y="979.0" width="14.0" height="14.0" fill="#ffffff"/>
<polyline points="2308.5,986 2312.5,991 2320.5,982" fill="none" stroke="#000" stroke-width="4" stroke-linecap="square"/>
<text x="2339.8" y="994.6" font-size="24.5" fill="#000" textLength="44.6" lengthAdjust="spacingAndGlyphs">Data</text>
<rect x="2302.5" y="999.7" width="91.2" height="29.1" fill="#696969"/>
<rect x="2302.5" y="999.7" width="89.2" height="27.1" fill="#ffffff"/>
<rect x="2304.5" y="1001.7" width="87.2" height="25.1" fill="#a0a0a0"/>
<rect x="2304.5" y="1001.7" width="85.2" height="23.1" fill="#e3e3e3"/>
<rect x="2306.5" y="1003.7" width="83.2" height="21.1" fill="#f0f0f0"/>
<text x="2316.0" y="1020.6" font-size="24.5" fill="#000" textLength="62.2" lengthAdjust="spacingAndGlyphs">Hilight</text>
<rect x="2415.7" y="931" width="109.0" height="104" fill="none" stroke="#a0a0a0" stroke-width="2"/>
<rect x="2417.7" y="933" width="109.0" height="104" fill="none" stroke="#ffffff" stroke-width="2"/>
<rect x="2415.7" y="931" width="109.0" height="104" fill="none" stroke="#a0a0a0" stroke-width="2"/>
<rect x="2426.0" y="928.0" width="64.0" height="8.0" fill="#f0f0f0"/>
<text x="2430.0" y="940.3" font-size="24.5" fill="#000" textLength="56.0" lengthAdjust="spacingAndGlyphs">Width</text>
<path d="M 2435.5299999999997 973.7700000000001 A 10 10 0 0 1 2449.67 959.63" fill="none" stroke="#a0a0a0" stroke-width="2"/>
<path d="M 2449.67 959.63 A 10 10 0 0 1 2435.5299999999997 973.7700000000001" fill="none" stroke="#ffffff" stroke-width="2"/>
<circle cx="2442.6" cy="966.7" r="8" fill="#f0f0f0"/>
<path d="M 2436.944 972.356 A 8 8 0 0 1 2448.256 961.0440000000001" fill="none" stroke="#696969" stroke-width="2"/>
<circle cx="2442.6" cy="966.7" r="3.5" fill="#a0a0a0"/>
<text x="2467.5" y="974.4" font-size="24.5" fill="#a0a0a0" textLength="36.5" lengthAdjust="spacingAndGlyphs">Part</text>
<path d="M 2435.5299999999997 1014.87 A 10 10 0 0 1 2449.67 1000.7299999999999" fill="none" stroke="#a0a0a0" stroke-width="2"/>
<path d="M 2449.67 1000.7299999999999 A 10 10 0 0 1 2435.5299999999997 1014.87" fill="none" stroke="#ffffff" stroke-width="2"/>
<circle cx="2442.6" cy="1007.8" r="8" fill="#f0f0f0"/>
<path d="M 2436.944 1013.4559999999999 A 8 8 0 0 1 2448.256 1002.144" fill="none" stroke="#696969" stroke-width="2"/>
<text x="2467.5" y="1016.4" font-size="24.5" fill="#a0a0a0" textLength="52.7" lengthAdjust="spacingAndGlyphs">Entire</text>
<rect x="2287.3" y="1045.4" width="128.1" height="54.4" fill="#696969"/>
<rect x="2287.3" y="1045.4" width="126.1" height="52.4" fill="#ffffff"/>
<rect x="2289.3" y="1047.4" width="124.1" height="50.4" fill="#a0a0a0"/>
<rect x="2289.3" y="1047.4" width="122.1" height="48.4" fill="#e3e3e3"/>
<rect x="2291.3" y="1049.4" width="120.1" height="46.4" fill="#f0f0f0"/>
<text x="2295.9" y="1078.5" font-size="24.5" fill="#000" textLength="108.0" lengthAdjust="spacingAndGlyphs">[3D] Image</text>
<rect x="2538.0" y="925.0" width="285.7" height="35.5" fill="#696969"/>
<rect x="2538.0" y="925.0" width="283.7" height="33.5" fill="#ffffff"/>
<rect x="2540.0" y="927.0" width="281.7" height="31.5" fill="#a0a0a0"/>
<rect x="2540.0" y="927.0" width="279.7" height="29.5" fill="#e3e3e3"/>
<rect x="2542.0" y="929.0" width="277.7" height="27.5" fill="#f0f0f0"/>
<text x="2551.5" y="948.9" font-size="24.5" fill="#000" textLength="254.4" lengthAdjust="spacingAndGlyphs">Correction for absorption</text>
<rect x="2538.0" y="965.3" width="205.5" height="35.0" fill="#696969"/>
<rect x="2538.0" y="965.3" width="203.5" height="33.0" fill="#ffffff"/>
<rect x="2540.0" y="967.3" width="201.5" height="31.0" fill="#a0a0a0"/>
<rect x="2540.0" y="967.3" width="199.5" height="29.0" fill="#e3e3e3"/>
<rect x="2542.0" y="969.3" width="197.5" height="27.0" fill="#f0f0f0"/>
<text x="2559.8" y="990.9" font-size="24.5" fill="#000" textLength="164.4" lengthAdjust="spacingAndGlyphs">Noise Reduction</text>
<rect x="2750.0" y="965.3" width="73.7" height="35.0" fill="#696969"/>
<rect x="2750.0" y="965.3" width="71.7" height="33.0" fill="#ffffff"/>
<rect x="2752.0" y="967.3" width="69.7" height="31.0" fill="#a0a0a0"/>
<rect x="2752.0" y="967.3" width="67.7" height="29.0" fill="#e3e3e3"/>
<rect x="2754.0" y="969.3" width="65.7" height="27.0" fill="#f0f0f0"/>
<text x="2757.6" y="988.4" font-size="24.5" fill="#000" textLength="56.4" lengthAdjust="spacingAndGlyphs">Reset</text>
<rect x="2534.0" y="1007.3" width="24.0" height="24.0" fill="#ffffff"/>
<rect x="2534.0" y="1007.3" width="22.0" height="22.0" fill="#a0a0a0"/>
<rect x="2536.0" y="1009.3" width="20.0" height="20.0" fill="#e3e3e3"/>
<rect x="2536.0" y="1009.3" width="18.0" height="18.0" fill="#696969"/>
<rect x="2538.0" y="1011.3" width="16.0" height="16.0" fill="#ffffff"/>
<polyline points="2540,1018.3 2544,1023.3 2552,1014.3" fill="none" stroke="#000" stroke-width="4" stroke-linecap="square"/>
<text x="2571.0" y="1026.6" font-size="24.5" fill="#000" textLength="103.5" lengthAdjust="spacingAndGlyphs">Information</text>
<rect x="2834.0" y="1001.0" width="24.0" height="24.0" fill="#ffffff"/>
<rect x="2834.0" y="1001.0" width="22.0" height="22.0" fill="#a0a0a0"/>
<rect x="2836.0" y="1003.0" width="20.0" height="20.0" fill="#e3e3e3"/>
<rect x="2836.0" y="1003.0" width="18.0" height="18.0" fill="#696969"/>
<rect x="2838.0" y="1005.0" width="16.0" height="16.0" fill="#ffffff"/>
<polyline points="2840,1012 2844,1017 2852,1008" fill="none" stroke="#000" stroke-width="4" stroke-linecap="square"/>
<rect x="2850.5" y="925.0" width="49.5" height="49.6" fill="#696969"/>
<rect x="2850.5" y="925.0" width="47.5" height="47.6" fill="#ffffff"/>
<rect x="2852.5" y="927.0" width="45.5" height="45.6" fill="#a0a0a0"/>
<rect x="2852.5" y="927.0" width="43.5" height="43.6" fill="#e3e3e3"/>
<rect x="2854.5" y="929.0" width="41.5" height="41.6" fill="#f0f0f0"/>
<text x="2858.0" y="954.0" font-size="24.5" fill="#000" textLength="12.0" lengthAdjust="spacingAndGlyphs">c</text>
<rect x="2735.6" y="1029" width="163.4000000000001" height="67.90000000000009" fill="none" stroke="#a0a0a0" stroke-width="2"/>
<rect x="2737.6" y="1031" width="163.4000000000001" height="67.90000000000009" fill="none" stroke="#ffffff" stroke-width="2"/>
<rect x="2735.6" y="1029" width="163.4000000000001" height="67.90000000000009" fill="none" stroke="#a0a0a0" stroke-width="2"/>
<rect x="2745.5" y="1026.0" width="72.5" height="8.0" fill="#f0f0f0"/>
<text x="2749.5" y="1037.0" font-size="24.5" fill="#000" textLength="64.5" lengthAdjust="spacingAndGlyphs">Object</text>
<rect x="2746.5" y="1049.6" width="37.1" height="33.4" fill="#ffffff"/>
<rect x="2746.5" y="1049.6" width="35.1" height="31.4" fill="#a0a0a0"/>
<rect x="2748.5" y="1051.6" width="33.1" height="29.4" fill="#e3e3e3"/>
<rect x="2748.5" y="1051.6" width="31.1" height="27.4" fill="#696969"/>
<rect x="2750.5" y="1053.6" width="29.1" height="25.4" fill="url(#dith)"/>
<text x="2759.9" y="1072.6" font-size="24.5" fill="#000" textLength="12.6" lengthAdjust="spacingAndGlyphs">A</text>
<rect x="2790.3" y="1049.6" width="37.1" height="33.4" fill="#ffffff"/>
<rect x="2790.3" y="1049.6" width="35.1" height="31.4" fill="#a0a0a0"/>
<rect x="2792.3" y="1051.6" width="33.1" height="29.4" fill="#e3e3e3"/>
<rect x="2792.3" y="1051.6" width="31.1" height="27.4" fill="#696969"/>
<rect x="2794.3" y="1053.6" width="29.1" height="25.4" fill="url(#dith)"/>
<text x="2803.7" y="1072.6" font-size="24.5" fill="#000" textLength="12.6" lengthAdjust="spacingAndGlyphs">B</text>
<rect x="2834.6" y="1049.6" width="45.4" height="33.4" fill="#696969"/>
<rect x="2834.6" y="1049.6" width="43.4" height="31.4" fill="#ffffff"/>
<rect x="2836.6" y="1051.6" width="41.4" height="29.4" fill="#a0a0a0"/>
<rect x="2836.6" y="1051.6" width="39.4" height="27.4" fill="#e3e3e3"/>
<rect x="2838.6" y="1053.6" width="37.4" height="25.4" fill="#f0f0f0"/>
<text x="2845.3" y="1072.6" font-size="24.5" fill="#000" textLength="12.6" lengthAdjust="spacingAndGlyphs">C</text>
<rect x="1790.0" y="1045.0" width="145.8" height="49.6" fill="#5a5a5a"/>
<rect x="1792.0" y="1047.0" width="141.8" height="45.6" fill="#696969"/>
<rect x="1792.0" y="1047.0" width="139.8" height="43.6" fill="#ffffff"/>
<rect x="1794.0" y="1049.0" width="137.8" height="41.6" fill="#a0a0a0"/>
<rect x="1794.0" y="1049.0" width="135.8" height="39.6" fill="#e3e3e3"/>
<rect x="1796.0" y="1051.0" width="133.8" height="37.6" fill="#f0f0f0"/>
<rect x="1798.5" y="1053" width="129" height="33.5" fill="none" stroke="#000" stroke-width="1.5" stroke-dasharray="2,2"/>
<text x="1803.2" y="1076.3" font-size="24.5" fill="#000" textLength="117.4" lengthAdjust="spacingAndGlyphs">Save Image</text>
<rect x="1946.0" y="1045.0" width="235.7" height="49.6" fill="#696969"/>
<rect x="1946.0" y="1045.0" width="233.7" height="47.6" fill="#ffffff"/>
<rect x="1948.0" y="1047.0" width="231.7" height="45.6" fill="#a0a0a0"/>
<rect x="1948.0" y="1047.0" width="229.7" height="43.6" fill="#e3e3e3"/>
<rect x="1950.0" y="1049.0" width="227.7" height="41.6" fill="#f0f0f0"/>
<text x="1971.2" y="1076.3" font-size="24.5" fill="#000" textLength="186.7" lengthAdjust="spacingAndGlyphs">Copy to ClipBoard</text>
<rect x="1442.0" y="1049.7" width="23.0" height="23.0" fill="#ffffff"/>
<rect x="1442.0" y="1049.7" width="21.0" height="21.0" fill="#a0a0a0"/>
<rect x="1444.0" y="1051.7" width="19.0" height="19.0" fill="#e3e3e3"/>
<rect x="1444.0" y="1051.7" width="17.0" height="17.0" fill="#696969"/>
<rect x="1446.0" y="1053.7" width="15.0" height="15.0" fill="#ffffff"/>
<polyline points="1448,1060.7 1452,1065.7 1460,1056.7" fill="none" stroke="#000" stroke-width="4" stroke-linecap="square"/>
<text x="1478.0" y="1068.7" font-size="24.5" fill="#000" textLength="290.4" lengthAdjust="spacingAndGlyphs">Show Image of Clicked point</text>
<rect x="1442.0" y="1081.6" width="23.0" height="23.0" fill="#ffffff"/>
<rect x="1442.0" y="1081.6" width="21.0" height="21.0" fill="#a0a0a0"/>
<rect x="1444.0" y="1083.6" width="19.0" height="19.0" fill="#e3e3e3"/>
<rect x="1444.0" y="1083.6" width="17.0" height="17.0" fill="#696969"/>
<rect x="1446.0" y="1085.6" width="15.0" height="15.0" fill="#ffffff"/>
<text x="1479.4" y="1101.0" font-size="24.5" fill="#000" textLength="291.3" lengthAdjust="spacingAndGlyphs">Reproduce Aperture Position</text>
<rect x="1906.4" y="1109.2" width="241.3" height="55.5" fill="#696969"/>
<rect x="1906.4" y="1109.2" width="239.3" height="53.5" fill="#ffffff"/>
<rect x="1908.4" y="1111.2" width="237.3" height="51.5" fill="#a0a0a0"/>
<rect x="1908.4" y="1111.2" width="235.3" height="49.5" fill="#e3e3e3"/>
<rect x="1910.4" y="1113.2" width="233.3" height="47.5" fill="#f0f0f0"/>
<text x="1923.2" y="1145.1" font-size="25" font-weight="bold" fill="#000" textLength="207.1" lengthAdjust="spacingAndGlyphs">Lunar Identification</text>
<rect x="2166.7" y="1109.4" width="336.3" height="54.8" fill="#696969"/>
<rect x="2166.7" y="1109.4" width="334.3" height="52.8" fill="#ffffff"/>
<rect x="2168.7" y="1111.4" width="332.3" height="50.8" fill="#a0a0a0"/>
<rect x="2168.7" y="1111.4" width="330.3" height="48.8" fill="#e3e3e3"/>
<rect x="2170.7" y="1113.4" width="328.3" height="46.8" fill="#f0f0f0"/>
<text x="2203.2" y="1144.0" font-size="25" font-weight="bold" fill="#000" textLength="263.4" lengthAdjust="spacingAndGlyphs">Diffraction Analysis</text>
<rect x="2514.4" y="1109.4" width="208.8" height="54.8" fill="#696969"/>
<rect x="2514.4" y="1109.4" width="206.8" height="52.8" fill="#ffffff"/>
<rect x="2516.4" y="1111.4" width="204.8" height="50.8" fill="#a0a0a0"/>
<rect x="2516.4" y="1111.4" width="202.8" height="48.8" fill="#e3e3e3"/>
<rect x="2518.4" y="1113.4" width="200.8" height="46.8" fill="#f0f0f0"/>
<text x="2539.1" y="1144.0" font-size="25" font-weight="bold" fill="#000" textLength="158.8" lengthAdjust="spacingAndGlyphs">Make Report</text>
<rect x="1443.5" y="1233.6" width="1455.5" height="177.4000000000001" fill="none" stroke="#a0a0a0" stroke-width="2"/>
<rect x="1445.5" y="1235.6" width="1455.5" height="177.4000000000001" fill="none" stroke="#ffffff" stroke-width="2"/>
<rect x="1443.5" y="1233.6" width="1455.5" height="177.4000000000001" fill="none" stroke="#a0a0a0" stroke-width="2"/>
<rect x="1453.0" y="1230.6" width="138.8" height="8.0" fill="#f0f0f0"/>
<text x="1457.0" y="1240.5" font-size="24.5" fill="#000" textLength="130.8" lengthAdjust="spacingAndGlyphs">S/N vs Error</text>
<text x="1459.4" y="1278.8" font-size="24.5" font-weight="bold" fill="#000" textLength="197.0" lengthAdjust="spacingAndGlyphs">S/N (Full drop)</text>
<rect x="1666.6" y="1248.4" width="111.4" height="52.9" fill="#ffffff"/>
<rect x="1666.6" y="1248.4" width="109.4" height="50.9" fill="#a0a0a0"/>
<rect x="1668.6" y="1250.4" width="107.4" height="48.9" fill="#e3e3e3"/>
<rect x="1668.6" y="1250.4" width="105.4" height="46.9" fill="#696969"/>
<rect x="1670.6" y="1252.4" width="103.4" height="44.9" fill="#ffffff"/>
<text x="1680.0" y="1285.0" font-size="33" font-weight="bold" fill="#0000ff" textLength="41.7" lengthAdjust="spacingAndGlyphs">4.7</text>
<text x="1827.6" y="1278.8" font-size="24.5" font-weight="bold" fill="#000" textLength="47.3" lengthAdjust="spacingAndGlyphs">S/N</text>
<rect x="1890.6" y="1248.4" width="95.7" height="52.9" fill="#ffffff"/>
<rect x="1890.6" y="1248.4" width="93.7" height="50.9" fill="#a0a0a0"/>
<rect x="1892.6" y="1250.4" width="91.7" height="48.9" fill="#e3e3e3"/>
<rect x="1892.6" y="1250.4" width="89.7" height="46.9" fill="#696969"/>
<rect x="1894.6" y="1252.4" width="87.7" height="44.9" fill="#ffffff"/>
<text x="1897.0" y="1285.0" font-size="33" fill="#ff0000" textLength="43.2" lengthAdjust="spacingAndGlyphs">3.7</text>
<text x="2003.6" y="1278.8" font-size="24.5" font-weight="bold" fill="#000" textLength="161.2" lengthAdjust="spacingAndGlyphs">expected on</text>
<rect x="2178.3" y="1247.5" width="96.1" height="53.5" fill="#ffffff"/>
<rect x="2178.3" y="1247.5" width="94.1" height="51.5" fill="#a0a0a0"/>
<rect x="2180.3" y="1249.5" width="92.1" height="49.5" fill="#e3e3e3"/>
<rect x="2180.3" y="1249.5" width="90.1" height="47.5" fill="#696969"/>
<rect x="2182.3" y="1251.5" width="88.1" height="45.5" fill="#ffffff"/>
<text x="2186.0" y="1284.2" font-size="31" fill="#000" textLength="43.2" lengthAdjust="spacingAndGlyphs">1.7</text>
<text x="2291.3" y="1278.8" font-size="24.5" font-weight="bold" fill="#000" textLength="121.2" lengthAdjust="spacingAndGlyphs">Mag drop</text>
<text x="2482.7" y="1278.8" font-size="24.5" font-weight="bold" fill="#000" textLength="213.8" lengthAdjust="spacingAndGlyphs">Frame exposure</text>
<rect x="2722.3" y="1247.5" width="95.7" height="53.5" fill="#ffffff"/>
<rect x="2722.3" y="1247.5" width="93.7" height="51.5" fill="#a0a0a0"/>
<rect x="2724.3" y="1249.5" width="91.7" height="49.5" fill="#e3e3e3"/>
<rect x="2724.3" y="1249.5" width="89.7" height="47.5" fill="#696969"/>
<rect x="2726.3" y="1251.5" width="87.7" height="45.5" fill="#ffffff"/>
<text x="2728.0" y="1284.0" font-size="31" fill="#000" textLength="52.6" lengthAdjust="spacingAndGlyphs">165</text>
<text x="2835.0" y="1278.8" font-size="24.5" font-weight="bold" fill="#000" textLength="60.0" lengthAdjust="spacingAndGlyphs">msec</text>
<text x="1459.0" y="1342.3" font-size="24.5" font-weight="bold" fill="#000" textLength="98.4" lengthAdjust="spacingAndGlyphs">Fresnel</text>
<text x="1459.0" y="1374.5" font-size="24.5" font-weight="bold" fill="#000" textLength="100.6" lengthAdjust="spacingAndGlyphs">Number</text>
<rect x="1570.4" y="1327.2" width="96.2" height="54.1" fill="#ffffff"/>
<rect x="1570.4" y="1327.2" width="94.2" height="52.1" fill="#a0a0a0"/>
<rect x="1572.4" y="1329.2" width="92.2" height="50.1" fill="#e3e3e3"/>
<rect x="1572.4" y="1329.2" width="90.2" height="48.1" fill="#696969"/>
<rect x="1574.4" y="1331.2" width="88.2" height="46.1" fill="#ffffff"/>
<text x="1577.6" y="1365.5" font-size="31" fill="#000" textLength="68.7" lengthAdjust="spacingAndGlyphs">8102</text>
<text x="1699.2" y="1342.0" font-size="24.5" font-weight="bold" fill="#000" textLength="153.1" lengthAdjust="spacingAndGlyphs">Lower Limit</text>
<text x="1713.9" y="1374.5" font-size="24.5" font-weight="bold" fill="#000" textLength="130.6" lengthAdjust="spacingAndGlyphs">for detect</text>
<rect x="1858.0" y="1327.0" width="112.6" height="54.0" fill="#ffffff"/>
<rect x="1858.0" y="1327.0" width="110.6" height="52.0" fill="#a0a0a0"/>
<rect x="1860.0" y="1329.0" width="108.6" height="50.0" fill="#e3e3e3"/>
<rect x="1860.0" y="1329.0" width="106.6" height="48.0" fill="#696969"/>
<rect x="1862.0" y="1331.0" width="104.6" height="46.0" fill="#ffffff"/>
<text x="1864.7" y="1365.5" font-size="31" fill="#0000ff" textLength="69.8" lengthAdjust="spacingAndGlyphs">2615</text>
<text x="1971.7" y="1357.6" font-size="24.5" font-weight="bold" fill="#000" textLength="69.2" lengthAdjust="spacingAndGlyphs">msec</text>
<text x="2067.4" y="1344.2" font-size="24.5" font-weight="bold" fill="#000" textLength="125.5" lengthAdjust="spacingAndGlyphs">Predicted</text>
<text x="2067.4" y="1373.0" font-size="24.5" font-weight="bold" fill="#000" textLength="134.6" lengthAdjust="spacingAndGlyphs">Time Error</text>
<rect x="2210.6" y="1328.3" width="127.2" height="52.2" fill="#ffffff"/>
<rect x="2210.6" y="1328.3" width="125.2" height="50.2" fill="#a0a0a0"/>
<rect x="2212.6" y="1330.3" width="123.2" height="48.2" fill="#e3e3e3"/>
<rect x="2212.6" y="1330.3" width="121.2" height="46.2" fill="#696969"/>
<rect x="2214.6" y="1332.3" width="119.2" height="44.2" fill="#ffffff"/>
<text x="2216.7" y="1364.6" font-size="31" fill="#ff0000" textLength="52.2" lengthAdjust="spacingAndGlyphs">228</text>
<text x="2339.5" y="1373.0" font-size="24.5" font-weight="bold" fill="#000" textLength="69.5" lengthAdjust="spacingAndGlyphs">msec</text>
<text x="2434.5" y="1344.0" font-size="24.5" font-weight="bold" fill="#000" textLength="247.7" lengthAdjust="spacingAndGlyphs">Expected Error for</text>
<text x="2434.5" y="1373.0" font-size="24.5" font-weight="bold" fill="#000" textLength="281.7" lengthAdjust="spacingAndGlyphs">Analyzing event time</text>
<rect x="2722.0" y="1328.0" width="96.0" height="52.5" fill="#ffffff"/>
<rect x="2722.0" y="1328.0" width="94.0" height="50.5" fill="#a0a0a0"/>
<rect x="2724.0" y="1330.0" width="92.0" height="48.5" fill="#e3e3e3"/>
<rect x="2724.0" y="1330.0" width="90.0" height="46.5" fill="#696969"/>
<rect x="2726.0" y="1332.0" width="88.0" height="44.5" fill="#ffffff"/>
<text x="2728.0" y="1363.6" font-size="31" fill="#000" textLength="61.0" lengthAdjust="spacingAndGlyphs">55.0</text>
<text x="2829.0" y="1373.0" font-size="24.5" font-weight="bold" fill="#000" textLength="69.5" lengthAdjust="spacingAndGlyphs">msec</text>
<path d="M 2 1422 L 2 743 Q 2 730.5 14 730.5 L 494 730.5 Q 506.5 730.5 506.5 743 L 506.5 1422 Z" fill="#ffffff" stroke="#8a8a8a" stroke-width="1.5"/>
<path d="M 3 781 L 3 743 Q 3 731.5 14 731.5 L 494 731.5 Q 505.5 731.5 505.5 743 L 505.5 781 Z" fill="#f3f3f3"/>
<g transform="translate(8,739)"><rect x="0" y="0" width="32" height="32" fill="#000098"/><rect x="0" y="8" width="7" height="8" fill="#0000f0"/><rect x="13" y="6" width="5" height="5" fill="#0000e0"/><rect x="26" y="10" width="6" height="6" fill="#0000e0"/><rect x="26" y="21" width="6" height="11" fill="#0000f0"/><rect x="15" y="24" width="6" height="4" fill="#0000d0"/><rect x="0" y="0" width="9" height="5" fill="#000010"/><rect x="0" y="25" width="4" height="5" fill="#000010"/><rect x="6" y="30" width="14" height="2" fill="#000000"/><rect x="0" y="16.5" width="32" height="2" fill="#d8d810"/><rect x="8.2" y="2" width="3.8" height="28" fill="#ffff00"/><polygon points="10,10 12,14 17.5,16.5 17.5,18.5 12,20 10,22 8,20 3,18.5 3,16.5 8,14" fill="#ffff00"/><g fill="#9090c8"><rect x="3.5" y="5.5" width="2" height="2"/><rect x="22" y="4" width="2" height="2"/><rect x="26" y="4" width="2" height="2"/><rect x="30" y="6" width="2" height="2"/><rect x="2" y="24" width="2" height="2"/><rect x="6" y="28" width="2" height="2"/><rect x="18" y="28" width="2" height="2"/><rect x="22" y="28" width="2" height="2"/><rect x="26" y="26" width="2" height="2"/><rect x="30" y="28" width="2" height="2"/><rect x="14" y="30" width="2" height="2"/></g></g>
<text x="51.3" y="766.0" font-size="29" fill="#8a8a8a" textLength="150.0" lengthAdjust="spacingAndGlyphs">3D-Graph...</text>
<rect x="265.0" y="753.0" width="20.0" height="1.6" fill="#8c8c8c"/>
<rect x="356.5" y="744.5" width="19" height="18.8" rx="3" fill="none" stroke="#8c8c8c" stroke-width="1.6"/>
<path d="M 449 744 L 469 764 M 469 744 L 449 764" stroke="#8c8c8c" stroke-width="1.6"/>
<g clip-path="url(#meshclip)" shape-rendering="crispEdges"><path d="M3 1181V1422 M13 1179V1422 M23 1183V1422 M33 1177V1422 M43 1177V1422 M53 1177V1422 M63 1181V1422 M73 1177V1422 M83 1179V1422 M93 1177V1422 M103 1177V1422 M113 1183V1422 M123 1183V1422 M133 1177V1422 M143 1179V1422 M153 1177V1422 M163 1183V1422 M173 1177V1422 M183 1177V1422 M193 1179V1422 M203 1177V1422 M213 1183V1422 M223 1177V1422 M233 1179V1422 M243 1177V1422 M253 1179V1422 M263 1181V1422 M273 1183V1422 M283 1179V1422 M293 1177V1422 M303 1181V1422 M313 1179V1422 M323 1177V1422 M333 1179V1422 M343 1181V1422 M353 1177V1422 M363 1177V1422 M373 1177V1422 M383 1179V1422 M393 1183V1422 M403 1183V1422 M413 1181V1422 M423 1183V1422 M433 1183V1422 M443 1181V1422 M453 1181V1422 M463 1179V1422 M473 1179V1422 M483 1179V1422 M493 1177V1422 M503 1181V1422 M-2 1179.2 L13 1181.4 L23 1180.5 L33 1177.6 L43 1182.1 L53 1176.6 L63 1178.5 L73 1180.6 L83 1176.8 L93 1178.9 L103 1176.1 L113 1180.1 L123 1180.7 L133 1179.5 L143 1181.4 L153 1177.8 L163 1180.2 L173 1179.6 L183 1179.5 L193 1178.7 L203 1181.2 L213 1181.8 L223 1178.8 L233 1180.1 L243 1176.2 L253 1180.3 L263 1179.9 L273 1182.2 L283 1181.1 L293 1177.6 L303 1178.3 L313 1180.1 L323 1175.9 L333 1178.8 L343 1176.9 L353 1176.5 L363 1176.2 L373 1180.7 L383 1176.6 L393 1177.4 L403 1178.3 L413 1181.4 L423 1176.3 L433 1178.7 L443 1179.3 L453 1181.5 L463 1181.0 L473 1181.3 L483 1177.6 L493 1178.5 L503 1178.1 M-2 1186.8 L13 1187.2 L23 1182.1 L33 1182.2 L43 1182.6 L53 1182.6 L63 1184.2 L73 1184.9 L83 1182.8 L93 1181.1 L103 1183.8 L113 1183.5 L123 1184.7 L133 1187.2 L143 1185.5 L153 1184.4 L163 1185.1 L173 1185.4 L183 1181.4 L193 1186.9 L203 1186.1 L213 1186.7 L223 1186.2 L233 1183.6 L243 1183.7 L253 1181.8 L263 1185.2 L273 1181.5 L283 1181.5 L293 1182.4 L303 1182.1 L313 1183.3 L323 1181.4 L333 1181.1 L343 1182.1 L353 1181.7 L363 1183.4 L373 1181.3 L383 1186.7 L393 1185.0 L403 1182.1 L413 1182.7 L423 1183.3 L433 1183.4 L443 1181.9 L453 1186.5 L463 1187.5 L473 1184.1 L483 1184.2 L493 1181.6 L503 1181.8 M-2 1188.6 L13 1188.1 L23 1191.7 L33 1187.4 L43 1186.5 L53 1192.5 L63 1189.8 L73 1187.3 L83 1189.9 L93 1186.6 L103 1189.8 L113 1192.7 L123 1191.9 L133 1190.9 L143 1188.1 L153 1188.7 L163 1187.5 L173 1191.3 L183 1189.8 L193 1191.4 L203 1188.5 L213 1187.8 L223 1191.6 L233 1192.7 L243 1191.9 L253 1191.6 L263 1191.6 L273 1191.1 L283 1187.9 L293 1189.7 L303 1188.7 L313 1186.6 L323 1186.6 L333 1188.2 L343 1188.1 L353 1190.8 L363 1192.5 L373 1189.3 L383 1192.4 L393 1192.7 L403 1192.5 L413 1188.7 L423 1187.8 L433 1187.9 L443 1187.7 L453 1187.7 L463 1190.4 L473 1192.2 L483 1191.8 L493 1189.5 L503 1190.6 M-2 1196.8 L13 1192.2 L23 1195.9 L33 1197.5 L43 1196.7 L53 1196.5 L63 1194.8 L73 1192.8 L83 1196.8 L93 1193.8 L103 1196.8 L113 1197.9 L123 1194.2 L133 1194.3 L143 1197.8 L153 1196.3 L163 1192.8 L173 1192.5 L183 1192.7 L193 1197.5 L203 1196.9 L213 1192.6 L223 1197.0 L233 1198.0 L243 1195.9 L253 1193.9 L263 1195.2 L273 1192.5 L283 1191.8 L293 1197.9 L303 1195.9 L313 1195.1 L323 1197.7 L333 1194.5 L343 1197.3 L353 1197.0 L363 1193.1 L373 1193.3 L383 1193.6 L393 1193.2 L403 1195.5 L413 1193.4 L423 1194.4 L433 1192.5 L443 1197.5 L453 1194.0 L463 1194.6 L473 1195.4 L483 1197.5 L493 1194.4 L503 1197.6 M-2 1200.2 L13 1200.4 L23 1200.4 L33 1197.1 L43 1199.8 L53 1198.2 L63 1197.0 L73 1202.1 L83 1198.1 L93 1200.0 L103 1201.6 L113 1200.6 L123 1199.1 L133 1200.3 L143 1200.6 L153 1202.0 L163 1197.7 L173 1200.6 L183 1198.6 L193 1198.8 L203 1201.9 L213 1200.2 L223 1200.6 L233 1201.9 L243 1202.8 L253 1199.8 L263 1200.9 L273 1200.2 L283 1200.3 L293 1201.4 L303 1199.9 L313 1200.4 L323 1200.1 L333 1203.0 L343 1201.5 L353 1202.6 L363 1203.0 L373 1198.7 L383 1200.6 L393 1203.0 L403 1202.4 L413 1197.9 L423 1197.8 L433 1199.8 L443 1197.5 L453 1198.5 L463 1197.5 L473 1201.3 L483 1202.0 L493 1202.7 L503 1198.0 M-2 1206.9 L13 1206.5 L23 1203.2 L33 1208.0 L43 1208.5 L53 1203.7 L63 1208.4 L73 1204.8 L83 1205.4 L93 1208.6 L103 1207.6 L113 1203.3 L123 1205.1 L133 1205.6 L143 1204.5 L153 1203.6 L163 1204.3 L173 1206.9 L183 1202.4 L193 1205.8 L203 1205.1 L213 1202.4 L223 1204.4 L233 1206.3 L243 1205.6 L253 1202.7 L263 1208.6 L273 1207.3 L283 1208.5 L293 1203.0 L303 1204.0 L313 1202.6 L323 1207.3 L333 1204.0 L343 1203.1 L353 1205.0 L363 1208.1 L373 1207.5 L383 1204.0 L393 1203.3 L403 1208.2 L413 1206.0 L423 1206.8 L433 1202.9 L443 1202.7 L453 1206.7 L463 1205.0 L473 1202.8 L483 1208.3 L493 1206.4 L503 1207.4 M-2 1208.1 L13 1213.1 L23 1208.0 L33 1213.1 L43 1210.5 L53 1209.8 L63 1211.1 L73 1213.5 L83 1209.3 L93 1208.4 L103 1211.0 L113 1209.1 L123 1208.3 L133 1208.6 L143 1207.9 L153 1208.9 L163 1209.6 L173 1209.6 L183 1212.5 L193 1209.5 L203 1210.8 L213 1208.7 L223 1209.8 L233 1207.7 L243 1209.2 L253 1207.7 L263 1212.3 L273 1211.1 L283 1208.8 L293 1210.6 L303 1213.6 L313 1208.3 L323 1212.8 L333 1210.4 L343 1210.8 L353 1212.9 L363 1210.1 L373 1210.8 L383 1212.0 L393 1213.9 L403 1209.8 L413 1212.9 L423 1212.1 L433 1211.7 L443 1210.2 L453 1209.8 L463 1207.9 L473 1208.4 L483 1208.1 L493 1212.3 L503 1209.2 M-2 1213.9 L13 1213.4 L23 1218.3 L33 1218.5 L43 1217.2 L53 1214.7 L63 1214.5 L73 1214.8 L83 1215.8 L93 1213.9 L103 1215.8 L113 1214.6 L123 1219.1 L133 1219.1 L143 1216.4 L153 1214.5 L163 1219.1 L173 1214.9 L183 1215.2 L193 1212.9 L203 1215.3 L213 1215.9 L223 1216.1 L233 1214.2 L243 1216.1 L253 1212.9 L263 1214.6 L273 1213.5 L283 1215.5 L293 1213.2 L303 1213.0 L313 1214.8 L323 1214.4 L333 1216.6 L343 1216.3 L353 1217.7 L363 1217.1 L373 1217.5 L383 1218.5 L393 1215.4 L403 1215.0 L413 1219.2 L423 1213.9 L433 1217.5 L443 1217.0 L453 1213.2 L463 1218.2 L473 1218.6 L483 1216.9 L493 1217.6 L503 1218.1 M-2 1219.1 L13 1221.6 L23 1221.4 L33 1223.5 L43 1223.3 L53 1223.5 L63 1221.9 L73 1223.9 L83 1222.6 L93 1222.6 L103 1219.7 L113 1218.4 L123 1219.1 L133 1220.5 L143 1218.9 L153 1223.5 L163 1221.8 L173 1222.2 L183 1222.2 L193 1222.6 L203 1221.3 L213 1218.2 L223 1223.3 L233 1223.0 L243 1221.4 L253 1221.6 L263 1222.4 L273 1218.6 L283 1222.9 L293 1219.8 L303 1218.7 L313 1219.9 L323 1222.9 L333 1219.5 L343 1222.9 L353 1224.4 L363 1221.4 L373 1220.6 L383 1221.3 L393 1222.6 L403 1223.1 L413 1222.1 L423 1222.3 L433 1218.7 L443 1219.1 L453 1219.8 L463 1223.0 L473 1220.1 L483 1221.8 L493 1218.3 L503 1218.6 M-2 1225.2 L13 1227.8 L23 1227.9 L33 1227.8 L43 1225.4 L53 1226.8 L63 1226.5 L73 1226.5 L83 1224.3 L93 1229.2 L103 1224.8 L113 1229.8 L123 1229.5 L133 1223.6 L143 1226.4 L153 1228.7 L163 1229.7 L173 1226.4 L183 1225.2 L193 1224.8 L203 1229.6 L213 1224.8 L223 1227.2 L233 1224.4 L243 1226.9 L253 1229.6 L263 1224.3 L273 1228.7 L283 1226.8 L293 1229.2 L303 1228.0 L313 1225.0 L323 1229.2 L333 1226.6 L343 1223.7 L353 1223.5 L363 1226.6 L373 1226.4 L383 1225.4 L393 1224.4 L403 1225.7 L413 1225.5 L423 1228.9 L433 1223.5 L443 1228.3 L453 1228.9 L463 1224.3 L473 1229.4 L483 1228.1 L493 1229.3 L503 1225.4 M-2 1231.2 L13 1231.3 L23 1235.2 L33 1232.6 L43 1231.1 L53 1231.5 L63 1230.6 L73 1229.1 L83 1229.5 L93 1234.1 L103 1230.6 L113 1234.8 L123 1230.4 L133 1230.5 L143 1232.1 L153 1230.0 L163 1231.2 L173 1234.9 L183 1234.5 L193 1234.0 L203 1232.8 L213 1234.6 L223 1234.8 L233 1232.3 L243 1233.4 L253 1229.1 L263 1233.5 L273 1231.7 L283 1233.6 L293 1232.9 L303 1230.6 L313 1229.1 L323 1234.7 L333 1229.6 L343 1231.8 L353 1231.0 L363 1230.7 L373 1233.5 L383 1235.0 L393 1230.5 L403 1233.0 L413 1230.7 L423 1232.4 L433 1231.3 L443 1229.9 L453 1229.8 L463 1230.1 L473 1234.6 L483 1232.0 L493 1230.2 L503 1234.6 M-2 1240.5 L13 1237.0 L23 1235.0 L33 1235.3 L43 1234.7 L53 1236.3 L63 1234.7 L73 1235.6 L83 1235.8 L93 1237.7 L103 1239.8 L113 1238.9 L123 1236.7 L133 1236.7 L143 1237.5 L153 1236.5 L163 1236.3 L173 1234.5 L183 1235.9 L193 1240.3 L203 1234.9 L213 1237.3 L223 1238.1 L233 1239.6 L243 1235.5 L253 1235.8 L263 1235.7 L273 1236.7 L283 1237.0 L293 1240.2 L303 1239.5 L313 1239.7 L323 1234.2 L333 1234.3 L343 1238.6 L353 1239.8 L363 1237.1 L373 1237.9 L383 1234.1 L393 1236.6 L403 1240.0 L413 1239.4 L423 1239.6 L433 1240.3 L443 1235.7 L453 1234.8 L463 1235.1 L473 1237.4 L483 1238.5 L493 1240.1 L503 1238.7 M-2 1243.5 L13 1244.3 L23 1242.3 L33 1242.9 L43 1239.7 L53 1244.4 L63 1240.9 L73 1245.3 L83 1243.5 L93 1241.3 L103 1240.2 L113 1241.0 L123 1243.5 L133 1243.9 L143 1240.1 L153 1239.9 L163 1242.8 L173 1243.1 L183 1241.9 L193 1240.8 L203 1243.2 L213 1239.5 L223 1241.3 L233 1242.3 L243 1245.5 L253 1243.5 L263 1245.1 L273 1242.4 L283 1240.9 L293 1241.0 L303 1245.5 L313 1243.9 L323 1241.4 L333 1239.5 L343 1242.6 L353 1243.7 L363 1242.1 L373 1241.0 L383 1243.7 L393 1245.3 L403 1240.9 L413 1239.6 L423 1241.6 L433 1242.1 L443 1243.8 L453 1240.7 L463 1244.5 L473 1244.1 L483 1242.6 L493 1240.7 L503 1245.6 M-2 1246.7 L13 1249.9 L23 1246.2 L33 1246.1 L43 1249.6 L53 1246.6 L63 1250.8 L73 1247.9 L83 1245.9 L93 1246.1 L103 1247.4 L113 1249.0 L123 1250.8 L133 1245.6 L143 1247.2 L153 1246.1 L163 1250.9 L173 1245.6 L183 1245.0 L193 1245.1 L203 1247.2 L213 1250.4 L223 1250.4 L233 1249.4 L243 1251.1 L253 1250.7 L263 1246.8 L273 1245.9 L283 1250.7 L293 1249.5 L303 1244.9 L313 1249.0 L323 1247.1 L333 1247.1 L343 1246.8 L353 1245.8 L363 1244.7 L373 1246.5 L383 1246.9 L393 1250.8 L403 1245.5 L413 1250.9 L423 1246.0 L433 1247.0 L443 1250.0 L453 1250.0 L463 1247.5 L473 1245.0 L483 1247.7 L493 1247.1 L503 1250.6 M-2 1251.2 L13 1252.3 L23 1255.7 L33 1250.2 L43 1252.6 L53 1255.2 L63 1254.9 L73 1250.3 L83 1250.2 L93 1250.4 L103 1255.9 L113 1251.6 L123 1254.8 L133 1255.8 L143 1252.2 L153 1251.7 L163 1256.1 L173 1253.9 L183 1251.7 L193 1254.6 L203 1252.0 L213 1251.8 L223 1250.0 L233 1254.8 L243 1255.9 L253 1254.1 L263 1256.0 L273 1250.2 L283 1251.5 L293 1253.0 L303 1256.1 L313 1256.1 L323 1252.5 L333 1251.6 L343 1252.8 L353 1253.2 L363 1255.9 L373 1251.2 L383 1255.1 L393 1254.7 L403 1255.3 L413 1254.9 L423 1253.9 L433 1252.1 L443 1252.0 L453 1252.3 L463 1255.0 L473 1250.5 L483 1251.3 L493 1254.8 L503 1251.6 M-2 1255.7 L13 1255.5 L23 1258.8 L33 1257.4 L43 1261.6 L53 1261.0 L63 1261.6 L73 1257.0 L83 1255.8 L93 1255.9 L103 1258.5 L113 1259.8 L123 1258.2 L133 1256.8 L143 1258.0 L153 1259.3 L163 1259.6 L173 1260.1 L183 1260.7 L193 1259.6 L203 1256.1 L213 1260.7 L223 1257.2 L233 1258.9 L243 1257.7 L253 1260.0 L263 1256.6 L273 1256.9 L283 1256.9 L293 1256.3 L303 1261.0 L313 1259.0 L323 1257.4 L333 1257.8 L343 1261.7 L353 1258.5 L363 1256.8 L373 1260.5 L383 1259.5 L393 1261.6 L403 1256.0 L413 1258.3 L423 1260.5 L433 1260.7 L443 1261.2 L453 1255.6 L463 1257.2 L473 1256.1 L483 1256.5 L493 1261.5 L503 1259.0 M-2 1266.6 L13 1263.0 L23 1266.1 L33 1263.5 L43 1262.3 L53 1265.6 L63 1266.7 L73 1261.3 L83 1264.4 L93 1264.6 L103 1262.0 L113 1263.0 L123 1261.5 L133 1261.9 L143 1262.2 L153 1264.4 L163 1264.8 L173 1261.9 L183 1260.7 L193 1262.7 L203 1264.9 L213 1261.8 L223 1262.6 L233 1261.9 L243 1265.7 L253 1264.1 L263 1261.0 L273 1261.2 L283 1263.1 L293 1264.1 L303 1264.7 L313 1261.2 L323 1261.6 L333 1265.1 L343 1263.2 L353 1262.4 L363 1262.6 L373 1266.7 L383 1262.6 L393 1264.2 L403 1262.9 L413 1263.3 L423 1266.1 L433 1267.0 L443 1262.9 L453 1261.9 L463 1265.3 L473 1261.9 L483 1260.6 L493 1266.4 L503 1263.3 M-2 1271.2 L13 1268.5 L23 1271.6 L33 1268.8 L43 1266.9 L53 1266.0 L63 1269.4 L73 1270.0 L83 1271.7 L93 1266.5 L103 1269.9 L113 1268.3 L123 1269.1 L133 1266.8 L143 1267.7 L153 1269.2 L163 1271.8 L173 1266.6 L183 1269.0 L193 1271.1 L203 1272.1 L213 1267.2 L223 1266.7 L233 1271.9 L243 1272.1 L253 1269.0 L263 1266.2 L273 1271.8 L283 1268.4 L293 1271.7 L303 1269.9 L313 1271.2 L323 1266.9 L333 1270.9 L343 1267.3 L353 1268.5 L363 1271.3 L373 1271.2 L383 1267.1 L393 1267.3 L403 1268.5 L413 1269.2 L423 1268.4 L433 1266.7 L443 1267.5 L453 1270.5 L463 1271.6 L473 1266.2 L483 1269.5 L493 1270.7 L503 1266.1 M-2 1276.6 L13 1272.0 L23 1275.0 L33 1274.7 L43 1275.2 L53 1273.2 L63 1273.9 L73 1274.9 L83 1273.9 L93 1275.4 L103 1274.1 L113 1274.0 L123 1271.3 L133 1275.2 L143 1274.3 L153 1272.7 L163 1276.1 L173 1276.2 L183 1274.1 L193 1272.3 L203 1274.2 L213 1271.9 L223 1272.0 L233 1274.0 L243 1271.8 L253 1274.0 L263 1274.5 L273 1271.5 L283 1275.3 L293 1271.7 L303 1275.9 L313 1276.2 L323 1274.5 L333 1271.5 L343 1274.4 L353 1273.6 L363 1277.3 L373 1272.1 L383 1276.7 L393 1277.6 L403 1275.9 L413 1276.4 L423 1272.4 L433 1277.5 L443 1274.3 L453 1277.3 L463 1277.1 L473 1272.3 L483 1276.2 L493 1277.2 L503 1271.6 M-2 1278.7 L13 1281.3 L23 1277.5 L33 1282.2 L43 1278.3 L53 1281.7 L63 1277.4 L73 1279.7 L83 1282.4 L93 1277.8 L103 1278.2 L113 1279.7 L123 1278.5 L133 1276.7 L143 1277.7 L153 1277.5 L163 1282.5 L173 1280.8 L183 1282.2 L193 1277.6 L203 1281.5 L213 1277.2 L223 1279.9 L233 1280.6 L243 1278.8 L253 1282.1 L263 1280.1 L273 1280.2 L283 1282.1 L293 1277.2 L303 1282.9 L313 1280.5 L323 1279.0 L333 1281.6 L343 1278.2 L353 1282.8 L363 1280.2 L373 1278.8 L383 1281.4 L393 1279.3 L403 1277.6 L413 1281.3 L423 1276.8 L433 1281.7 L443 1278.1 L453 1280.6 L463 1282.8 L473 1280.2 L483 1280.7 L493 1278.5 L503 1276.5 M-2 1282.0 L13 1282.8 L23 1285.7 L33 1284.6 L43 1285.1 L53 1287.5 L63 1282.6 L73 1283.3 L83 1286.0 L93 1281.9 L103 1281.8 L113 1284.1 L123 1282.5 L133 1284.1 L143 1283.2 L153 1285.5 L163 1285.6 L173 1283.1 L183 1285.8 L193 1284.8 L203 1282.7 L213 1287.8 L223 1283.4 L233 1282.8 L243 1282.4 L253 1285.9 L263 1287.4 L273 1286.8 L283 1284.4 L293 1283.5 L303 1281.9 L313 1285.9 L323 1285.4 L333 1284.0 L343 1285.9 L353 1284.6 L363 1287.8 L373 1286.5 L383 1283.4 L393 1287.6 L403 1282.1 L413 1285.2 L423 1284.4 L433 1283.3 L443 1282.2 L453 1286.8 L463 1281.9 L473 1285.3 L483 1287.8 L493 1282.7 L503 1283.1 M-2 1291.0 L13 1290.3 L23 1291.2 L33 1292.3 L43 1288.2 L53 1289.1 L63 1289.0 L73 1287.4 L83 1292.8 L93 1292.1 L103 1291.7 L113 1287.1 L123 1292.5 L133 1291.9 L143 1290.1 L153 1291.8 L163 1290.0 L173 1288.5 L183 1287.8 L193 1288.6 L203 1287.3 L213 1289.2 L223 1291.9 L233 1291.5 L243 1292.5 L253 1291.7 L263 1288.8 L273 1290.6 L283 1289.9 L293 1292.1 L303 1290.4 L313 1288.8 L323 1291.2 L333 1293.3 L343 1288.5 L353 1292.7 L363 1287.2 L373 1288.8 L383 1288.6 L393 1291.9 L403 1293.1 L413 1291.9 L423 1289.2 L433 1292.7 L443 1289.2 L453 1288.6 L463 1292.9 L473 1291.1 L483 1291.5 L493 1291.4 L503 1293.4 M-2 1295.4 L13 1297.8 L23 1296.9 L33 1297.9 L43 1295.2 L53 1297.0 L63 1296.1 L73 1294.4 L83 1293.8 L93 1296.4 L103 1292.9 L113 1298.2 L123 1293.3 L133 1292.6 L143 1293.1 L153 1298.3 L163 1294.6 L173 1293.3 L183 1292.6 L193 1292.7 L203 1296.8 L213 1296.5 L223 1296.9 L233 1297.1 L243 1292.8 L253 1296.2 L263 1294.7 L273 1297.6 L283 1297.6 L293 1298.1 L303 1292.8 L313 1298.0 L323 1298.3 L333 1298.4 L343 1293.1 L353 1293.7 L363 1293.1 L373 1292.6 L383 1297.8 L393 1297.6 L403 1296.5 L413 1297.7 L423 1296.4 L433 1294.2 L443 1293.0 L453 1293.0 L463 1297.2 L473 1293.7 L483 1294.4 L493 1295.1 L503 1292.5 M-2 1299.3 L13 1299.5 L23 1302.3 L33 1300.1 L43 1299.8 L53 1303.9 L63 1300.9 L73 1303.1 L83 1301.7 L93 1297.9 L103 1300.3 L113 1300.5 L123 1302.6 L133 1299.9 L143 1302.2 L153 1301.1 L163 1299.1 L173 1303.2 L183 1298.3 L193 1302.9 L203 1298.8 L213 1297.7 L223 1299.0 L233 1302.6 L243 1304.0 L253 1297.7 L263 1300.8 L273 1300.8 L283 1302.8 L293 1298.9 L303 1300.9 L313 1299.9 L323 1303.0 L333 1299.4 L343 1303.7 L353 1299.5 L363 1299.1 L373 1302.2 L383 1300.9 L393 1298.4 L403 1301.8 L413 1298.2 L423 1302.7 L433 1302.2 L443 1302.7 L453 1301.7 L463 1300.0 L473 1300.3 L483 1300.2 L493 1303.4 L503 1298.3 M-2 1308.7 L13 1303.2 L23 1304.3 L33 1304.7 L43 1308.8 L53 1306.2 L63 1305.4 L73 1308.7 L83 1304.5 L93 1305.9 L103 1306.4 L113 1307.8 L123 1307.8 L133 1307.1 L143 1305.2 L153 1305.1 L163 1304.0 L173 1308.4 L183 1307.2 L193 1307.7 L203 1304.1 L213 1305.8 L223 1307.9 L233 1306.7 L243 1303.8 L253 1306.0 L263 1308.7 L273 1304.5 L283 1304.2 L293 1304.9 L303 1307.5 L313 1308.4 L323 1304.0 L333 1304.0 L343 1304.6 L353 1305.1 L363 1306.3 L373 1304.0 L383 1305.1 L393 1304.2 L403 1309.2 L413 1307.7 L423 1303.7 L433 1309.2 L443 1303.7 L453 1305.5 L463 1309.3 L473 1308.1 L483 1307.7 L493 1305.8 L503 1304.3 M-2 1312.4 L13 1309.0 L23 1309.6 L33 1310.8 L43 1308.5 L53 1310.9 L63 1313.4 L73 1312.7 L83 1311.5 L93 1312.3 L103 1311.3 L113 1309.2 L123 1312.2 L133 1310.9 L143 1313.0 L153 1314.1 L163 1311.1 L173 1312.0 L183 1313.1 L193 1311.0 L203 1309.8 L213 1312.9 L223 1313.9 L233 1313.3 L243 1312.8 L253 1313.8 L263 1312.6 L273 1312.4 L283 1311.2 L293 1310.3 L303 1312.3 L313 1308.9 L323 1311.0 L333 1313.3 L343 1312.9 L353 1312.3 L363 1309.9 L373 1311.0 L383 1311.2 L393 1312.3 L403 1310.9 L413 1312.6 L423 1314.3 L433 1309.5 L443 1312.5 L453 1313.3 L463 1310.8 L473 1311.4 L483 1314.5 L493 1308.5 L503 1311.8 M-2 1314.6 L13 1318.6 L23 1319.6 L33 1316.9 L43 1314.2 L53 1317.3 L63 1317.1 L73 1318.2 L83 1316.9 L93 1317.7 L103 1318.9 L113 1316.9 L123 1316.2 L133 1319.7 L143 1314.9 L153 1318.0 L163 1316.1 L173 1318.5 L183 1314.4 L193 1319.9 L203 1315.9 L213 1314.0 L223 1315.4 L233 1316.2 L243 1313.7 L253 1316.3 L263 1316.3 L273 1318.1 L283 1315.9 L293 1315.3 L303 1315.0 L313 1318.3 L323 1319.6 L333 1317.0 L343 1315.0 L353 1318.7 L363 1316.1 L373 1315.0 L383 1314.4 L393 1318.6 L403 1318.8 L413 1317.7 L423 1316.6 L433 1317.2 L443 1315.0 L453 1319.8 L463 1315.9 L473 1317.7 L483 1318.8 L493 1318.8 L503 1316.6 M-2 1320.8 L13 1322.4 L23 1319.7 L33 1324.2 L43 1321.2 L53 1324.3 L63 1320.6 L73 1321.3 L83 1320.5 L93 1321.6 L103 1320.1 L113 1318.9 L123 1323.5 L133 1320.7 L143 1320.5 L153 1320.8 L163 1322.0 L173 1321.6 L183 1323.0 L193 1323.1 L203 1321.2 L213 1324.8 L223 1324.4 L233 1319.3 L243 1324.2 L253 1324.7 L263 1323.9 L273 1319.8 L283 1324.2 L293 1323.0 L303 1319.0 L313 1319.0 L323 1325.0 L333 1323.1 L343 1320.5 L353 1319.5 L363 1319.8 L373 1320.4 L383 1323.9 L393 1321.1 L403 1319.9 L413 1324.7 L423 1324.0 L433 1320.0 L443 1324.6 L453 1322.8 L463 1323.9 L473 1323.2 L483 1324.6 L493 1323.9 L503 1324.3 M-2 1325.5 L13 1328.6 L23 1327.6 L33 1328.9 L43 1327.0 L53 1329.8 L63 1327.8 L73 1325.9 L83 1325.7 L93 1325.1 L103 1327.4 L113 1324.6 L123 1327.2 L133 1325.1 L143 1327.3 L153 1327.4 L163 1327.7 L173 1329.7 L183 1324.2 L193 1329.6 L203 1327.2 L213 1327.8 L223 1328.5 L233 1329.6 L243 1326.6 L253 1326.9 L263 1330.3 L273 1324.7 L283 1328.3 L293 1328.3 L303 1324.4 L313 1328.1 L323 1328.6 L333 1330.2 L343 1326.3 L353 1330.5 L363 1327.5 L373 1327.3 L383 1329.9 L393 1324.4 L403 1328.8 L413 1328.2 L423 1326.4 L433 1329.7 L443 1326.5 L453 1327.2 L463 1327.6 L473 1329.1 L483 1325.5 L493 1327.0 L503 1326.9 M-2 1333.0 L13 1334.8 L23 1331.4 L33 1334.8 L43 1332.1 L53 1332.7 L63 1331.2 L73 1332.7 L83 1335.7 L93 1333.7 L103 1334.6 L113 1331.6 L123 1331.5 L133 1331.4 L143 1333.3 L153 1333.6 L163 1334.5 L173 1329.8 L183 1334.1 L193 1335.2 L203 1333.0 L213 1329.8 L223 1331.4 L233 1329.5 L243 1330.7 L253 1335.4 L263 1333.4 L273 1333.7 L283 1334.5 L293 1335.3 L303 1333.4 L313 1333.4 L323 1333.5 L333 1334.0 L343 1333.3 L353 1333.9 L363 1330.9 L373 1333.8 L383 1332.4 L393 1334.4 L403 1330.1 L413 1330.7 L423 1329.7 L433 1334.5 L443 1335.4 L453 1333.7 L463 1331.9 L473 1334.8 L483 1334.5 L493 1333.1 L503 1331.2 M-2 1336.7 L13 1337.5 L23 1336.8 L33 1337.6 L43 1338.9 L53 1340.8 L63 1335.1 L73 1338.4 L83 1335.1 L93 1335.6 L103 1340.0 L113 1338.5 L123 1340.7 L133 1337.7 L143 1334.9 L153 1337.3 L163 1338.6 L173 1340.8 L183 1341.1 L193 1337.8 L203 1337.4 L213 1335.5 L223 1338.9 L233 1336.2 L243 1335.8 L253 1334.9 L263 1334.8 L273 1339.2 L283 1335.6 L293 1341.0 L303 1335.4 L313 1340.4 L323 1335.6 L333 1334.9 L343 1339.4 L353 1336.4 L363 1339.5 L373 1336.0 L383 1335.1 L393 1339.8 L403 1339.4 L413 1340.3 L423 1339.5 L433 1335.3 L443 1338.8 L453 1339.3 L463 1337.7 L473 1340.8 L483 1336.4 L493 1341.0 L503 1339.4 M-2 1340.2 L13 1340.2 L23 1344.3 L33 1345.3 L43 1340.6 L53 1342.1 L63 1344.8 L73 1341.2 L83 1345.6 L93 1343.2 L103 1340.5 L113 1342.5 L123 1343.8 L133 1342.9 L143 1344.4 L153 1341.0 L163 1345.2 L173 1342.4 L183 1344.2 L193 1344.1 L203 1342.8 L213 1342.6 L223 1345.1 L233 1346.1 L243 1345.1 L253 1343.7 L263 1342.0 L273 1340.5 L283 1346.3 L293 1344.6 L303 1345.4 L313 1342.2 L323 1344.0 L333 1346.4 L343 1345.4 L353 1343.9 L363 1342.1 L373 1342.8 L383 1345.8 L393 1342.5 L403 1344.5 L413 1344.0 L423 1345.8 L433 1345.3 L443 1341.9 L453 1340.1 L463 1341.8 L473 1342.8 L483 1343.9 L493 1345.3 L503 1345.8 M-2 1345.7 L13 1350.7 L23 1350.6 L33 1351.0 L43 1349.1 L53 1347.2 L63 1350.8 L73 1350.6 L83 1349.8 L93 1351.2 L103 1347.6 L113 1345.9 L123 1348.9 L133 1350.5 L143 1346.7 L153 1350.2 L163 1351.4 L173 1346.9 L183 1349.3 L193 1349.7 L203 1348.4 L213 1346.7 L223 1347.0 L233 1350.2 L243 1350.5 L253 1348.3 L263 1346.0 L273 1350.6 L283 1350.3 L293 1346.9 L303 1349.1 L313 1351.1 L323 1351.1 L333 1348.7 L343 1348.5 L353 1349.2 L363 1346.6 L373 1346.6 L383 1346.6 L393 1349.9 L403 1347.7 L413 1349.0 L423 1348.0 L433 1348.7 L443 1346.4 L453 1345.7 L463 1351.8 L473 1347.8 L483 1346.1 L493 1349.4 L503 1350.4 M-2 1351.7 L13 1354.5 L23 1352.9 L33 1354.0 L43 1350.8 L53 1350.9 L63 1357.0 L73 1356.2 L83 1353.8 L93 1354.3 L103 1352.4 L113 1355.7 L123 1353.4 L133 1356.8 L143 1355.6 L153 1355.9 L163 1356.9 L173 1352.3 L183 1350.9 L193 1352.0 L203 1351.9 L213 1351.2 L223 1351.0 L233 1354.3 L243 1356.3 L253 1353.6 L263 1356.8 L273 1356.5 L283 1351.1 L293 1354.5 L303 1353.2 L313 1351.5 L323 1356.8 L333 1352.3 L343 1354.3 L353 1354.8 L363 1356.8 L373 1355.0 L383 1353.2 L393 1353.6 L403 1351.7 L413 1356.9 L423 1357.0 L433 1352.1 L443 1350.9 L453 1352.3 L463 1353.0 L473 1356.5 L483 1356.5 L493 1356.1 L503 1351.0 M-2 1361.0 L13 1360.5 L23 1360.1 L33 1362.3 L43 1356.4 L53 1356.9 L63 1360.8 L73 1362.0 L83 1360.3 L93 1357.9 L103 1359.8 L113 1360.9 L123 1356.7 L133 1358.1 L143 1357.6 L153 1356.8 L163 1359.1 L173 1357.1 L183 1357.5 L193 1356.9 L203 1360.3 L213 1356.1 L223 1360.6 L233 1357.2 L243 1356.2 L253 1361.9 L263 1357.4 L273 1362.0 L283 1361.5 L293 1361.7 L303 1356.9 L313 1358.9 L323 1356.6 L333 1361.9 L343 1361.4 L353 1360.0 L363 1358.9 L373 1358.2 L383 1361.3 L393 1359.1 L403 1360.0 L413 1356.9 L423 1357.4 L433 1356.4 L443 1360.6 L453 1359.5 L463 1356.9 L473 1361.6 L483 1357.7 L493 1358.6 L503 1357.0 M-2 1363.0 L13 1366.7 L23 1363.4 L33 1362.4 L43 1364.4 L53 1363.3 L63 1367.1 L73 1362.0 L83 1367.6 L93 1361.7 L103 1367.0 L113 1365.6 L123 1362.7 L133 1364.4 L143 1363.1 L153 1362.9 L163 1362.6 L173 1363.6 L183 1367.6 L193 1367.7 L203 1367.2 L213 1361.9 L223 1363.2 L233 1367.0 L243 1361.7 L253 1365.9 L263 1363.2 L273 1367.6 L283 1361.4 L293 1366.5 L303 1363.5 L313 1362.2 L323 1361.3 L333 1366.6 L343 1364.7 L353 1362.5 L363 1364.1 L373 1367.1 L383 1362.7 L393 1365.0 L403 1362.2 L413 1362.5 L423 1366.2 L433 1365.9 L443 1362.6 L453 1361.8 L463 1361.9 L473 1365.2 L483 1364.5 L493 1363.1 L503 1362.6 M-2 1370.5 L13 1371.1 L23 1371.8 L33 1370.3 L43 1367.9 L53 1367.0 L63 1371.3 L73 1369.2 L83 1371.2 L93 1367.0 L103 1371.8 L113 1368.7 L123 1372.0 L133 1372.1 L143 1369.8 L153 1366.7 L163 1372.4 L173 1369.7 L183 1372.2 L193 1368.3 L203 1367.8 L213 1371.9 L223 1368.9 L233 1367.6 L243 1369.0 L253 1370.4 L263 1366.6 L273 1369.9 L283 1369.5 L293 1369.9 L303 1367.4 L313 1371.2 L323 1371.8 L333 1372.1 L343 1368.7 L353 1371.2 L363 1369.0 L373 1371.4 L383 1367.0 L393 1372.2 L403 1372.7 L413 1369.8 L423 1369.9 L433 1370.0 L443 1370.0 L453 1366.7 L463 1372.8 L473 1368.0 L483 1367.8 L493 1367.3 L503 1368.2 M-2 1377.1 L13 1372.1 L23 1372.5 L33 1376.4 L43 1373.1 L53 1372.0 L63 1375.7 L73 1375.6 L83 1375.2 L93 1376.4 L103 1372.6 L113 1377.5 L123 1376.5 L133 1372.2 L143 1372.7 L153 1375.1 L163 1375.1 L173 1373.7 L183 1372.7 L193 1374.5 L203 1372.8 L213 1375.7 L223 1377.4 L233 1372.8 L243 1375.6 L253 1376.7 L263 1373.0 L273 1377.2 L283 1377.9 L293 1374.4 L303 1374.6 L313 1377.3 L323 1375.3 L333 1374.4 L343 1377.9 L353 1376.9 L363 1374.1 L373 1373.4 L383 1374.0 L393 1374.7 L403 1378.2 L413 1377.0 L423 1377.7 L433 1377.1 L443 1377.3 L453 1372.2 L463 1375.2 L473 1378.0 L483 1377.9 L493 1373.5 L503 1374.6 M-2 1381.2 L13 1379.5 L23 1380.6 L33 1377.6 L43 1380.0 L53 1380.4 L63 1377.3 L73 1378.1 L83 1383.4 L93 1382.2 L103 1383.2 L113 1381.3 L123 1382.4 L133 1382.9 L143 1382.9 L153 1377.4 L163 1381.3 L173 1378.9 L183 1381.5 L193 1378.9 L203 1380.7 L213 1383.1 L223 1381.2 L233 1378.8 L243 1380.5 L253 1380.0 L263 1383.3 L273 1379.0 L283 1379.2 L293 1381.3 L303 1378.0 L313 1381.0 L323 1383.3 L333 1380.5 L343 1378.9 L353 1380.2 L363 1380.6 L373 1378.1 L383 1378.0 L393 1378.0 L403 1379.1 L413 1379.8 L423 1379.0 L433 1378.8 L443 1377.8 L453 1380.7 L463 1382.6 L473 1381.1 L483 1380.8 L493 1381.4 L503 1378.5 M-2 1387.0 L13 1385.4 L23 1386.0 L33 1386.4 L43 1385.5 L53 1384.5 L63 1384.1 L73 1383.9 L83 1385.8 L93 1385.0 L103 1386.2 L113 1382.6 L123 1384.8 L133 1388.0 L143 1384.0 L153 1386.1 L163 1385.6 L173 1384.3 L183 1388.8 L193 1384.4 L203 1387.4 L213 1383.5 L223 1382.9 L233 1388.1 L243 1385.3 L253 1382.9 L263 1385.0 L273 1385.3 L283 1387.2 L293 1383.2 L303 1383.9 L313 1388.6 L323 1387.2 L333 1383.5 L343 1384.7 L353 1384.8 L363 1386.8 L373 1386.4 L383 1387.9 L393 1387.8 L403 1385.8 L413 1387.2 L423 1387.3 L433 1387.4 L443 1385.5 L453 1387.5 L463 1387.0 L473 1388.4 L483 1383.3 L493 1388.1 L503 1382.5 M-2 1392.7 L13 1391.5 L23 1391.0 L33 1394.0 L43 1391.5 L53 1390.5 L63 1392.8 L73 1393.4 L83 1391.7 L93 1390.2 L103 1390.7 L113 1390.7 L123 1392.4 L133 1389.7 L143 1390.3 L153 1391.4 L163 1390.3 L173 1389.9 L183 1392.8 L193 1393.2 L203 1391.0 L213 1390.6 L223 1389.0 L233 1389.7 L243 1388.7 L253 1391.5 L263 1391.5 L273 1388.4 L283 1393.7 L293 1389.9 L303 1393.2 L313 1393.2 L323 1393.9 L333 1389.1 L343 1390.5 L353 1393.6 L363 1387.9 L373 1388.1 L383 1391.4 L393 1391.0 L403 1393.7 L413 1392.8 L423 1391.2 L433 1394.2 L443 1391.1 L453 1391.1 L463 1392.2 L473 1390.3 L483 1390.1 L493 1391.6 L503 1390.0 M-2 1399.2 L13 1397.4 L23 1396.5 L33 1393.7 L43 1395.5 L53 1395.7 L63 1396.7 L73 1396.8 L83 1398.7 L93 1399.3 L103 1396.2 L113 1395.9 L123 1397.1 L133 1399.5 L143 1395.3 L153 1396.5 L163 1398.3 L173 1394.2 L183 1395.1 L193 1399.4 L203 1398.4 L213 1396.4 L223 1393.8 L233 1398.8 L243 1397.5 L253 1398.4 L263 1399.4 L273 1398.8 L283 1395.8 L293 1394.1 L303 1395.0 L313 1396.4 L323 1396.3 L333 1394.3 L343 1394.3 L353 1397.1 L363 1397.0 L373 1395.4 L383 1399.5 L393 1397.2 L403 1393.4 L413 1395.7 L423 1398.1 L433 1395.1 L443 1397.5 L453 1393.1 L463 1395.0 L473 1398.5 L483 1396.9 L493 1397.4 L503 1394.4 M-2 1401.6 L13 1401.9 L23 1400.1 L33 1402.5 L43 1401.8 L53 1404.8 L63 1402.1 L73 1401.0 L83 1399.2 L93 1399.4 L103 1403.3 L113 1399.1 L123 1399.0 L133 1399.5 L143 1401.7 L153 1403.7 L163 1402.3 L173 1403.6 L183 1398.8 L193 1398.5 L203 1403.3 L213 1400.5 L223 1403.0 L233 1400.7 L243 1399.5 L253 1400.1 L263 1399.0 L273 1404.2 L283 1402.1 L293 1400.6 L303 1401.3 L313 1400.9 L323 1398.7 L333 1404.1 L343 1402.1 L353 1404.5 L363 1401.2 L373 1402.4 L383 1400.0 L393 1398.7 L403 1404.4 L413 1403.9 L423 1400.4 L433 1404.2 L443 1403.6 L453 1400.3 L463 1402.3 L473 1404.5 L483 1401.6 L493 1404.5 L503 1400.0 M-2 1406.2 L13 1408.3 L23 1405.1 L33 1405.7 L43 1409.3 L53 1406.8 L63 1408.8 L73 1405.3 L83 1404.8 L93 1406.0 L103 1404.9 L113 1409.9 L123 1405.6 L133 1407.3 L143 1404.4 L153 1407.1 L163 1406.2 L173 1406.3 L183 1404.1 L193 1404.5 L203 1409.0 L213 1405.9 L223 1405.3 L233 1404.9 L243 1405.5 L253 1405.2 L263 1403.9 L273 1408.0 L283 1405.9 L293 1404.7 L303 1408.2 L313 1404.3 L323 1405.4 L333 1409.0 L343 1404.5 L353 1406.5 L363 1409.1 L373 1408.9 L383 1404.7 L393 1406.0 L403 1408.3 L413 1406.1 L423 1409.8 L433 1405.0 L443 1409.8 L453 1406.9 L463 1405.2 L473 1406.6 L483 1404.5 L493 1408.2 L503 1405.4 M-2 1414.8 L13 1412.8 L23 1411.4 L33 1410.6 L43 1412.9 L53 1410.4 L63 1414.6 L73 1409.8 L83 1412.3 L93 1412.5 L103 1410.7 L113 1413.9 L123 1411.5 L133 1413.2 L143 1412.6 L153 1411.0 L163 1411.5 L173 1409.6 L183 1410.1 L193 1414.4 L203 1411.1 L213 1413.2 L223 1409.7 L233 1412.6 L243 1411.3 L253 1412.2 L263 1410.9 L273 1409.4 L283 1411.0 L293 1410.4 L303 1409.8 L313 1413.6 L323 1410.8 L333 1411.6 L343 1414.8 L353 1414.0 L363 1414.6 L373 1414.5 L383 1409.8 L393 1410.8 L403 1409.2 L413 1413.3 L423 1413.2 L433 1411.2 L443 1411.6 L453 1413.2 L463 1413.5 L473 1410.6 L483 1414.4 L493 1411.3 L503 1413.0 M-2 1415.5 L13 1415.0 L23 1420.1 L33 1419.0 L43 1418.9 L53 1414.6 L63 1414.6 L73 1415.3 L83 1415.6 L93 1416.2 L103 1416.7 L113 1414.6 L123 1416.3 L133 1418.4 L143 1415.4 L153 1419.7 L163 1417.9 L173 1418.9 L183 1415.9 L193 1417.1 L203 1418.7 L213 1416.5 L223 1414.3 L233 1419.6 L243 1419.3 L253 1416.1 L263 1414.6 L273 1419.8 L283 1418.2 L293 1414.6 L303 1415.9 L313 1415.0 L323 1419.4 L333 1415.6 L343 1420.2 L353 1419.1 L363 1414.9 L373 1418.7 L383 1416.8 L393 1419.1 L403 1419.6 L413 1416.1 L423 1414.9 L433 1420.4 L443 1417.0 L453 1420.3 L463 1418.7 L473 1419.0 L483 1419.6 L493 1418.3 L503 1417.2 M-2 1419.9 L13 1424.1 L23 1422.3 L33 1422.9 L43 1425.5 L53 1420.4 L63 1424.5 L73 1419.9 L83 1424.1 L93 1424.8 L103 1421.3 L113 1423.1 L123 1425.8 L133 1423.7 L143 1423.1 L153 1421.2 L163 1420.0 L173 1421.9 L183 1422.2 L193 1420.9 L203 1421.6 L213 1420.5 L223 1424.1 L233 1423.9 L243 1421.1 L253 1421.1 L263 1422.9 L273 1422.4 L283 1425.6 L293 1421.8 L303 1421.5 L313 1425.3 L323 1420.5 L333 1423.2 L343 1421.7 L353 1424.8 L363 1423.1 L373 1424.5 L383 1420.7 L393 1423.9 L403 1423.4 L413 1422.6 L423 1424.5 L433 1424.9 L443 1420.3 L453 1421.5 L463 1421.9 L473 1420.9 L483 1420.0 L493 1421.4 L503 1420.9 M-2 1429.4 L13 1427.8 L23 1425.6 L33 1427.0 L43 1427.9 L53 1427.2 L63 1426.0 L73 1425.4 L83 1425.0 L93 1431.2 L103 1429.7 L113 1425.4 L123 1429.5 L133 1431.2 L143 1428.5 L153 1425.6 L163 1428.0 L173 1427.7 L183 1426.1 L193 1428.4 L203 1425.0 L213 1430.8 L223 1429.0 L233 1428.9 L243 1430.9 L253 1429.1 L263 1426.5 L273 1426.5 L283 1425.8 L293 1425.1 L303 1429.9 L313 1430.3 L323 1426.8 L333 1426.1 L343 1429.0 L353 1430.3 L363 1430.8 L373 1426.0 L383 1429.9 L393 1430.2 L403 1429.7 L413 1427.0 L423 1426.1 L433 1430.2 L443 1426.9 L453 1427.3 L463 1428.4 L473 1427.3 L483 1430.2 L493 1426.4 L503 1425.2" fill="none" stroke="#000" stroke-width="2"/></g>
<clipPath id="spk"><path d="M 244 1211 L 236 1232 L 222 1252 L 212 1266 L 203 1284 L 203 1305 L 212 1313 L 213 1326 L 265 1330 L 300 1312 L 300 1295 L 293 1280 L 276 1274 L 263 1258 L 253 1232 Z"/></clipPath>
<path d="M 244 1211 L 236 1232 L 222 1252 L 212 1266 L 203 1284 L 203 1305 L 212 1313 L 213 1326 L 265 1330 L 300 1312 L 300 1295 L 293 1280 L 276 1274 L 263 1258 L 253 1232 Z" fill="#ffffff"/>
<g clip-path="url(#spk)"><path d="M203 1200 V1340 M213 1200 V1340 M223 1200 V1340 M233 1200 V1340 M243 1200 V1340 M253 1200 V1340 M263 1200 V1340 M273 1200 V1340 M283 1200 V1340 M293 1200 V1340 M200 1300 L300 1262 M200 1320 L300 1288 M200 1340 L300 1312 M215 1262 L275 1238 M225 1240 L270 1225 M244 1212 L212 1266 M244 1212 L263 1258" fill="none" stroke="#000" stroke-width="1.6"/></g>
<path d="M244 1212 L212 1266 M245 1212 L263 1258 L276 1274" fill="none" stroke="#000" stroke-width="2"/>
<g clip-path="url(#meshclip)">
<ellipse cx="253" cy="1300" rx="251" ry="121" fill="none" stroke="#0000ff" stroke-width="3.5"/>
</g>
<path d="M 200 1283 L 191 1290 L 191 1310 L 202 1315 L 203 1328 L 215 1332 L 245 1339 L 280 1335 L 296 1322 L 312 1312 L 313 1296 L 303 1285 L 295 1275 L 279 1271" fill="none" stroke="#0000ff" stroke-width="3.5"/>
<path d="M 212 1265 L 201 1284 L 201 1305 L 211 1312 L 212.5 1327 L 266 1330 L 301 1312 L 301 1295 L 294 1280 L 276 1275" fill="none" stroke="#ff0000" stroke-width="3.5"/>
</svg></body></html>
